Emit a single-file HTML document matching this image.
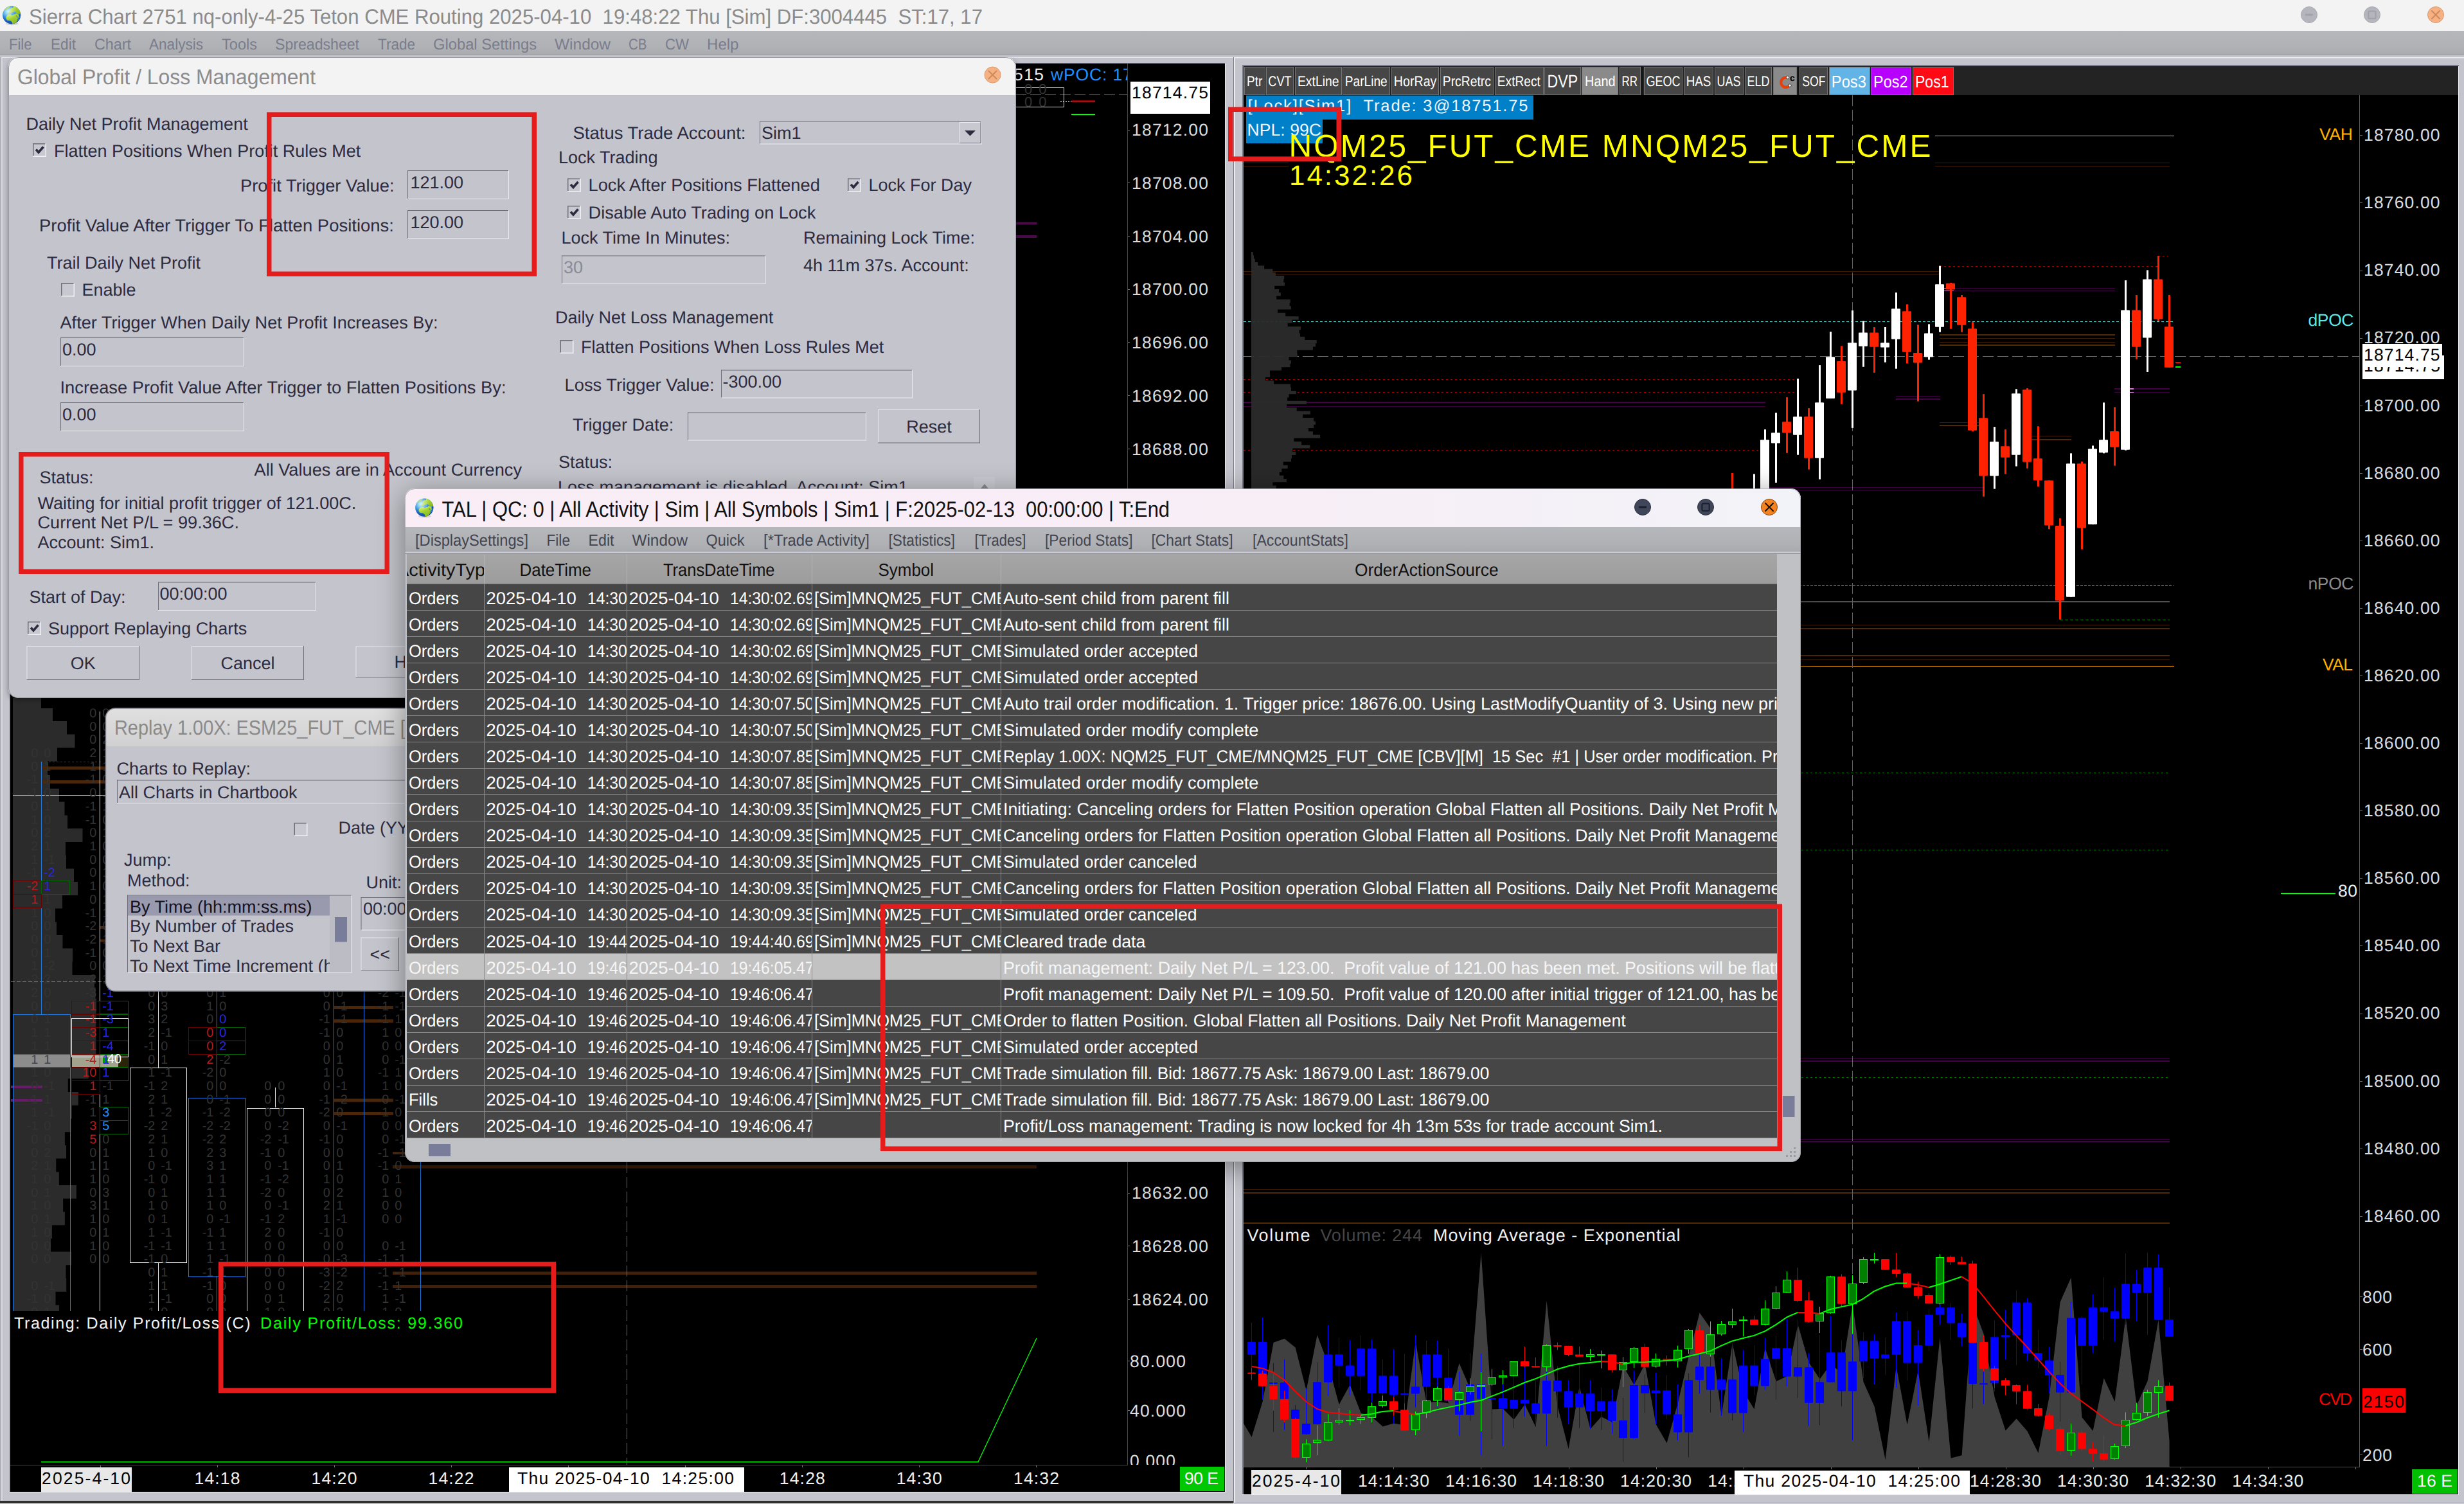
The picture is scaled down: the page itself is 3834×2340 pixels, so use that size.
<!DOCTYPE html>
<html lang="en"><head><meta charset="utf-8"><title>Sierra Chart 2751 nq-only-4-25</title>
<style>
html,body{margin:0;padding:0;background:#c3c4cc;overflow:hidden}
body{width:3834px;height:2340px}
svg#screen{display:block;position:absolute;left:0;top:0}
svg text{font-family:"Liberation Sans",sans-serif;white-space:pre}
</style></head>
<body>
<svg id="screen" role="img" aria-label="Sierra Chart workspace" width="3834" height="2340" viewBox="0 0 3834 2340" text-rendering="geometricPrecision">
<defs><linearGradient id="menug" x1="0" y1="0" x2="0" y2="1"><stop offset="0" stop-color="#b6b7bb"/><stop offset="0.7" stop-color="#b0b1b5"/><stop offset="1" stop-color="#a9aaae"/></linearGradient><radialGradient id="gla" cx="0.3" cy="0.3" r="0.85"><stop offset="0" stop-color="#8fe4fa"/><stop offset="0.3" stop-color="#3da2e6"/><stop offset="0.65" stop-color="#1a5cb8"/><stop offset="1" stop-color="#0c3f98"/></radialGradient><linearGradient id="gda" x1="0.2" y1="0" x2="0.8" y2="1"><stop offset="0" stop-color="#c6ec48"/><stop offset="0.55" stop-color="#9ccc2c"/><stop offset="1" stop-color="#86b41c"/></linearGradient><radialGradient id="gha" cx="0.36" cy="0.3" r="0.42"><stop offset="0" stop-color="#fff" stop-opacity="0.6"/><stop offset="1" stop-color="#fff" stop-opacity="0"/></radialGradient><radialGradient id="glb" cx="0.3" cy="0.3" r="0.85"><stop offset="0" stop-color="#8fe4fa"/><stop offset="0.3" stop-color="#3da2e6"/><stop offset="0.65" stop-color="#1a5cb8"/><stop offset="1" stop-color="#0c3f98"/></radialGradient><linearGradient id="gdb" x1="0.2" y1="0" x2="0.8" y2="1"><stop offset="0" stop-color="#c6ec48"/><stop offset="0.55" stop-color="#9ccc2c"/><stop offset="1" stop-color="#86b41c"/></linearGradient><radialGradient id="ghb" cx="0.36" cy="0.3" r="0.42"><stop offset="0" stop-color="#fff" stop-opacity="0.6"/><stop offset="1" stop-color="#fff" stop-opacity="0"/></radialGradient><linearGradient id="frg" x1="0" y1="0" x2="1" y2="0"><stop offset="0" stop-color="#c6c7cf"/><stop offset="0.7" stop-color="#b4b5c0"/><stop offset="1" stop-color="#8e8f9c"/></linearGradient><linearGradient id="frg2" x1="0" y1="0" x2="0" y2="1"><stop offset="0" stop-color="#c3c4cc"/><stop offset="0.8" stop-color="#c3c4cc"/><stop offset="0.9" stop-color="#9a9ba5"/><stop offset="1" stop-color="#c3c4cc"/></linearGradient><linearGradient id="frg3" x1="0" y1="0" x2="1" y2="0"><stop offset="0" stop-color="#d4d5dc"/><stop offset="1" stop-color="#b8b9c2"/></linearGradient><clipPath id="talclip"><rect x="630" y="760" width="2172" height="1048" rx="15"/></clipPath><filter id="shadow" x="-5%" y="-5%" width="110%" height="112%"><feDropShadow dx="0" dy="3" stdDeviation="4" flood-color="#000" flood-opacity="0.35"/></filter><filter id="shadow2" x="-5%" y="-8%" width="110%" height="118%"><feDropShadow dx="0" dy="8" stdDeviation="22" flood-color="#000" flood-opacity="0.4"/></filter><linearGradient id="rtg" x1="0" y1="0" x2="0" y2="1"><stop offset="0" stop-color="#e0e0e0"/><stop offset="1" stop-color="#d0d0d2"/></linearGradient><linearGradient id="ttg" x1="0" y1="0" x2="1" y2="0"><stop offset="0" stop-color="#faedf6"/><stop offset="0.6" stop-color="#f8eef6"/><stop offset="1" stop-color="#f2f3f8"/></linearGradient><linearGradient id="hdg" x1="0" y1="0" x2="0" y2="1"><stop offset="0" stop-color="#a6a6a6"/><stop offset="1" stop-color="#9c9c9c"/></linearGradient></defs>
<g id="mdi-frames"><rect x="0" y="86" width="3834" height="2254" fill="#c3c4cc"/>
<rect x="0" y="88" width="1919" height="1" fill="#6e6f80"/>
<rect x="1" y="89" width="1" height="2246" fill="#7c7d8a"/>
<rect x="2" y="89" width="1.5" height="2246" fill="#e6e6ea"/>
<rect x="3" y="89" width="1916" height="1" fill="#e6e6ea"/>
<rect x="15" y="98" width="1891" height="1" fill="#6e6f80"/>
<rect x="15" y="98" width="1" height="2223" fill="#6e6f80"/>
<rect x="1906" y="99" width="1" height="2222" fill="#eeeef2"/>
<rect x="15" y="2321" width="1892" height="1" fill="#eeeef2"/>
<rect x="1919" y="88" width="1" height="2250" fill="#7a7b8c"/>
<rect x="0" y="2335" width="1919" height="4" fill="#303030"/>
<rect x="0" y="2339" width="3834" height="1" fill="#e8e8ec"/>
<rect x="1920" y="88" width="1914" height="1" fill="#6e6f80"/>
<rect x="1920" y="89" width="1914" height="1.5" fill="#eeeef2"/>
<rect x="1920" y="89" width="2" height="2249" fill="#ececf0"/>
<rect x="1933" y="101" width="1893" height="2" fill="#7c7d8a"/>
<rect x="1933" y="101" width="2" height="2225" fill="#7c7d8a"/>
<rect x="3825" y="103" width="1" height="2223" fill="#eeeef2"/>
<rect x="1933" y="2325" width="1893" height="1" fill="#eeeef2"/>
<rect x="1920" y="2338" width="1914" height="1" fill="#7a7b8c"/></g>
<g id="chart-left"><rect x="16" y="99" width="1890" height="2222" fill="#000"/>
<polygon points="20,1086 64,1086 64,1102 82,1102 82,1122 104,1122 104,1142.5 116.5,1142.5 116.5,1163.5 89,1163.5 89,1184.5 74,1184.5 74,1206 78,1206 78,1227 92,1227 92,1247.5 100.5,1247.5 100.5,1268.5 105,1268.5 105,1289 128.5,1289 128.5,1310 102,1310 102,1330.5 103,1330.5 103,1351.5 115,1351.5 115,1372 121,1372 121,1393 97,1393 97,1413.5 86,1413.5 86,1434.5 88,1434.5 88,1455 97.5,1455 97.5,1475.5 113,1475.5 113,1496.5 112.5,1496.5 112.5,1517 147,1517 147,1536.5 148.58,1536.5 148.58,1554 149.95,1554 149.95,1574.7 149.4,1574.7 149.4,1595.4 149.4,1595.4 149.4,1616 149.4,1616 149.4,1640.4 109.05,1640.4 109.05,1661 137.68,1661 137.68,1678.3 105.78,1678.3 105.78,1699 121.86,1699 121.86,1719.8 111.78,1719.8 111.78,1740.5 110.41,1740.5 110.41,1761.2 100.87,1761.2 100.87,1781.9 103.05,1781.9 103.05,1802.6 87.24,1802.6 87.24,1823.4 91.88,1823.4 91.88,1844 118.87,1844 118.87,1864.8 98.15,1864.8 98.15,1885.5 100.87,1885.5 100.87,1906.2 80.97,1906.2 80.97,1927 79.06,1927 79.06,1947.6 111.02,1947.6 111.02,1968.3 102.45,1968.3 102.45,1989 103.23,1989 103.23,2009.8 86.48,2009.8 86.48,2030.5 91.94,2030.5 91.94,2040 20,2040" fill="#2b2b2b"/>
<rect x="20" y="1640.5" width="89.5" height="20" fill="#8c8c8c"/>
<rect x="111" y="1640.5" width="73" height="20" fill="#a3a28f"/>
<rect x="184" y="1640.5" width="16" height="20" fill="#2a2408"/>
<rect x="160" y="1645" width="8" height="9" fill="#009a00"/>
<rect x="64" y="1192.5" width="110" height="5" fill="#4a260a"/>
<rect x="64" y="1214" width="110" height="5" fill="#4a260a"/>
<rect x="155" y="1441" width="20" height="4" fill="#4a260a"/>
<rect x="155" y="1461.5" width="20" height="4" fill="#4a260a"/>
<rect x="20" y="1237" width="150" height="1" fill="#e8a020"/>
<line x1="64" y1="1185.5" x2="157" y2="1185.5" stroke="#c00000" stroke-width="1" stroke-dasharray="3 3"/>
<line x1="17" y1="1526.5" x2="175" y2="1526.5" stroke="#a0a0a0" stroke-width="1" stroke-dasharray="6 3"/>
<rect x="17" y="1689" width="49" height="4" fill="#6a1a6a"/>
<rect x="17" y="1710" width="49" height="4" fill="#6a1a6a"/>
<rect x="520" y="1565" width="92" height="5" fill="#4a260a"/>
<rect x="520" y="1586" width="92" height="5" fill="#4a260a"/>
<rect x="520" y="1709.5" width="92" height="5" fill="#4a260a"/>
<rect x="520" y="1730" width="92" height="5" fill="#4a260a"/>
<rect x="611" y="1792" width="30" height="4" fill="#4a260a"/>
<rect x="611" y="1813" width="1002" height="5" fill="#3a1a04"/>
<rect x="611" y="1978.5" width="1002" height="5" fill="#42200a"/>
<rect x="611" y="1999" width="1002" height="5" fill="#42200a"/>
<rect x="1580" y="345.5" width="33.5" height="4" fill="#4a0a4a"/>
<rect x="1580" y="366" width="33.5" height="4" fill="#4a0a4a"/>
<line x1="1580" y1="146.5" x2="1754" y2="146.5" stroke="#7a7a7a" stroke-width="1" stroke-dasharray="17 6"/>
<rect x="1560.5" y="136.5" width="95" height="30" fill="none" stroke="#e0e0e0" stroke-width="1"/>
<line x1="1650" y1="157.5" x2="1668" y2="157.5" stroke="#fff" stroke-width="1" stroke-dasharray="2 2"/>
<rect x="1667" y="156.5" width="37" height="2" fill="#ff0000"/>
<rect x="1667" y="177" width="37" height="2" fill="#00ff00"/>
<text x="1594" y="146" font-size="22" fill="#333333" letter-spacing="2">0 0</text>
<text x="1594" y="166" font-size="22" fill="#333333" letter-spacing="2">0 0</text>
<svg x="1560" y="100" width="194" height="40" viewBox="1560 100 194 40" overflow="hidden">
<text x="1577" y="125" font-size="26.5" fill="#f0f0f0" textLength="47" lengthAdjust="spacing">515</text>
<text x="1635" y="125" font-size="26.5" fill="#1e90ff" textLength="135" lengthAdjust="spacing">wPOC: 17.</text>
</svg>
<rect x="64" y="1185" width="1" height="393" fill="#1e7ae0"/>
<rect x="20.5" y="1578.5" width="89" height="467" fill="none" stroke="#1e7ae0" stroke-width="1"/>
<rect x="155" y="1107" width="1" height="933" fill="#e8e8e8"/>
<rect x="111.5" y="1584.5" width="88" height="60" fill="none" stroke="#f0f0f0" stroke-width="1"/>
<rect x="246" y="1540" width="1" height="121" fill="#e8e8e8"/>
<rect x="202.5" y="1661.5" width="88" height="303" fill="none" stroke="#f0f0f0" stroke-width="1"/>
<rect x="246" y="1964" width="1" height="76" fill="#e8e8e8"/>
<rect x="337" y="1540" width="1" height="167" fill="#1e7ae0"/>
<rect x="293.5" y="1708.5" width="88" height="278" fill="none" stroke="#1e7ae0" stroke-width="1"/>
<rect x="337" y="1985" width="1" height="55" fill="#1e7ae0"/>
<rect x="428" y="1692" width="1" height="31" fill="#e8e8e8"/>
<rect x="384.5" y="1724.5" width="88" height="322" fill="none" stroke="#f0f0f0" stroke-width="1"/>
<rect x="384" y="1964" width="1" height="76" fill="#e8e8e8"/>
<rect x="519" y="1540" width="1" height="500" fill="#1e7ae0"/>
<rect x="566" y="1540" width="1" height="500" fill="#1e7ae0"/>
<rect x="654" y="1540" width="1" height="500" fill="#1e7ae0"/>
<rect x="111.5" y="1557.5" width="44" height="21" fill="none" stroke="#6a0000" stroke-width="1"/>
<rect x="155.5" y="1557.5" width="44" height="21" fill="none" stroke="#006400" stroke-width="1"/>
<rect x="111.5" y="1577.5" width="44" height="21" fill="none" stroke="#6a0000" stroke-width="1"/>
<rect x="155.5" y="1577.5" width="44" height="21" fill="none" stroke="#006400" stroke-width="1"/>
<rect x="111.5" y="1598.5" width="44" height="21" fill="none" stroke="#6a0000" stroke-width="1"/>
<rect x="155.5" y="1598.5" width="44" height="21" fill="none" stroke="#006400" stroke-width="1"/>
<rect x="111.5" y="1619.5" width="44" height="21" fill="none" stroke="#6a0000" stroke-width="1"/>
<rect x="155.5" y="1619.5" width="44" height="21" fill="none" stroke="#006400" stroke-width="1"/>
<rect x="111.5" y="1640.5" width="44" height="21" fill="none" stroke="#6a0000" stroke-width="1"/>
<rect x="155.5" y="1640.5" width="44" height="21" fill="none" stroke="#006400" stroke-width="1"/>
<rect x="111.5" y="1660.5" width="44" height="21" fill="none" stroke="#6a0000" stroke-width="1"/>
<rect x="155.5" y="1660.5" width="44" height="21" fill="none" stroke="#006400" stroke-width="1"/>
<rect x="111.5" y="1681.5" width="44" height="21" fill="none" stroke="#6a0000" stroke-width="1"/>
<rect x="155.5" y="1722.5" width="44" height="21" fill="none" stroke="#006400" stroke-width="1"/>
<rect x="155.5" y="1743.5" width="44" height="21" fill="none" stroke="#006400" stroke-width="1"/>
<rect x="293.5" y="1598.5" width="44" height="21" fill="none" stroke="#6a0000" stroke-width="1"/>
<rect x="337.5" y="1598.5" width="44" height="21" fill="none" stroke="#006400" stroke-width="1"/>
<rect x="293.5" y="1619.5" width="44" height="21" fill="none" stroke="#6a0000" stroke-width="1"/>
<rect x="337.5" y="1619.5" width="44" height="21" fill="none" stroke="#006400" stroke-width="1"/>
<rect x="20.5" y="1370.5" width="44" height="21" fill="none" stroke="#6a0000" stroke-width="1"/>
<rect x="64.5" y="1370.5" width="44" height="21" fill="none" stroke="#006400" stroke-width="1"/>
<rect x="20.5" y="1391.5" width="44" height="21" fill="none" stroke="#6a0000" stroke-width="1"/>
<rect x="111.5" y="1584.5" width="88" height="60" fill="none" stroke="#f0f0f0" stroke-width="1"/>
<text x="150.3" y="1115.78" font-size="19.8" fill="#333333" text-anchor="end">0</text>
<text x="159.2" y="1115.78" font-size="19.8" fill="#333333">0</text>
<text x="150.3" y="1136.5" font-size="19.8" fill="#333333" text-anchor="end">0</text>
<text x="159.2" y="1136.5" font-size="19.8" fill="#333333">0</text>
<text x="150.3" y="1157.22" font-size="19.8" fill="#333333" text-anchor="end">0</text>
<text x="159.2" y="1157.22" font-size="19.8" fill="#333333">2</text>
<text x="59.3" y="1177.94" font-size="19.8" fill="#333333" text-anchor="end">0</text>
<text x="68.2" y="1177.94" font-size="19.8" fill="#333333">0</text>
<text x="150.3" y="1177.94" font-size="19.8" fill="#333333" text-anchor="end">2</text>
<text x="159.2" y="1177.94" font-size="19.8" fill="#333333">1</text>
<text x="59.3" y="1198.66" font-size="19.8" fill="#333333" text-anchor="end">0</text>
<text x="68.2" y="1198.66" font-size="19.8" fill="#333333">1</text>
<text x="150.3" y="1198.66" font-size="19.8" fill="#333333" text-anchor="end">1</text>
<text x="159.2" y="1198.66" font-size="19.8" fill="#333333">1</text>
<text x="59.3" y="1219.38" font-size="19.8" fill="#333333" text-anchor="end">-1</text>
<text x="68.2" y="1219.38" font-size="19.8" fill="#333333">1</text>
<text x="150.3" y="1219.38" font-size="19.8" fill="#333333" text-anchor="end">-1</text>
<text x="159.2" y="1219.38" font-size="19.8" fill="#333333">0</text>
<text x="59.3" y="1240.1" font-size="19.8" fill="#333333" text-anchor="end">-1</text>
<text x="68.2" y="1240.1" font-size="19.8" fill="#333333">0</text>
<text x="150.3" y="1240.1" font-size="19.8" fill="#333333" text-anchor="end">0</text>
<text x="159.2" y="1240.1" font-size="19.8" fill="#333333">1</text>
<text x="59.3" y="1260.82" font-size="19.8" fill="#333333" text-anchor="end">0</text>
<text x="68.2" y="1260.82" font-size="19.8" fill="#333333">1</text>
<text x="150.3" y="1260.82" font-size="19.8" fill="#333333" text-anchor="end">-1</text>
<text x="159.2" y="1260.82" font-size="19.8" fill="#333333">1</text>
<text x="59.3" y="1281.54" font-size="19.8" fill="#333333" text-anchor="end">1</text>
<text x="68.2" y="1281.54" font-size="19.8" fill="#333333">0</text>
<text x="150.3" y="1281.54" font-size="19.8" fill="#333333" text-anchor="end">-1</text>
<text x="159.2" y="1281.54" font-size="19.8" fill="#333333">0</text>
<text x="59.3" y="1302.26" font-size="19.8" fill="#333333" text-anchor="end">0</text>
<text x="68.2" y="1302.26" font-size="19.8" fill="#333333">2</text>
<text x="150.3" y="1302.26" font-size="19.8" fill="#333333" text-anchor="end">0</text>
<text x="159.2" y="1302.26" font-size="19.8" fill="#333333">1</text>
<text x="59.3" y="1322.98" font-size="19.8" fill="#333333" text-anchor="end">2</text>
<text x="68.2" y="1322.98" font-size="19.8" fill="#333333">1</text>
<text x="150.3" y="1322.98" font-size="19.8" fill="#333333" text-anchor="end">1</text>
<text x="159.2" y="1322.98" font-size="19.8" fill="#333333">0</text>
<text x="59.3" y="1343.7" font-size="19.8" fill="#333333" text-anchor="end">1</text>
<text x="68.2" y="1343.7" font-size="19.8" fill="#333333">-1</text>
<text x="150.3" y="1343.7" font-size="19.8" fill="#333333" text-anchor="end">0</text>
<text x="159.2" y="1343.7" font-size="19.8" fill="#333333">0</text>
<text x="59.3" y="1364.42" font-size="19.8" fill="#333333" text-anchor="end">-1</text>
<text x="68.2" y="1364.42" font-size="19.8" fill="#2626e0">-2</text>
<text x="150.3" y="1364.42" font-size="19.8" fill="#333333" text-anchor="end">0</text>
<text x="159.2" y="1364.42" font-size="19.8" fill="#333333">1</text>
<text x="59.3" y="1385.14" font-size="19.8" fill="#b41c1c" text-anchor="end">-2</text>
<text x="68.2" y="1385.14" font-size="19.8" fill="#2626e0">1</text>
<text x="150.3" y="1385.14" font-size="19.8" fill="#333333" text-anchor="end">1</text>
<text x="159.2" y="1385.14" font-size="19.8" fill="#333333">0</text>
<text x="59.3" y="1405.86" font-size="19.8" fill="#b41c1c" text-anchor="end">1</text>
<text x="68.2" y="1405.86" font-size="19.8" fill="#333333">1</text>
<text x="150.3" y="1405.86" font-size="19.8" fill="#333333" text-anchor="end">0</text>
<text x="159.2" y="1405.86" font-size="19.8" fill="#333333">1</text>
<text x="59.3" y="1426.58" font-size="19.8" fill="#333333" text-anchor="end">1</text>
<text x="68.2" y="1426.58" font-size="19.8" fill="#333333">0</text>
<text x="150.3" y="1426.58" font-size="19.8" fill="#333333" text-anchor="end">-1</text>
<text x="159.2" y="1426.58" font-size="19.8" fill="#333333">1</text>
<text x="59.3" y="1447.3" font-size="19.8" fill="#333333" text-anchor="end">0</text>
<text x="68.2" y="1447.3" font-size="19.8" fill="#333333">0</text>
<text x="150.3" y="1447.3" font-size="19.8" fill="#333333" text-anchor="end">-2</text>
<text x="159.2" y="1447.3" font-size="19.8" fill="#333333">0</text>
<text x="59.3" y="1468.02" font-size="19.8" fill="#333333" text-anchor="end">0</text>
<text x="68.2" y="1468.02" font-size="19.8" fill="#333333">0</text>
<text x="150.3" y="1468.02" font-size="19.8" fill="#333333" text-anchor="end">-2</text>
<text x="159.2" y="1468.02" font-size="19.8" fill="#333333">1</text>
<text x="59.3" y="1488.74" font-size="19.8" fill="#333333" text-anchor="end">0</text>
<text x="68.2" y="1488.74" font-size="19.8" fill="#333333">1</text>
<text x="150.3" y="1488.74" font-size="19.8" fill="#333333" text-anchor="end">-1</text>
<text x="159.2" y="1488.74" font-size="19.8" fill="#333333">0</text>
<text x="59.3" y="1509.46" font-size="19.8" fill="#333333" text-anchor="end">1</text>
<text x="68.2" y="1509.46" font-size="19.8" fill="#333333">-2</text>
<text x="150.3" y="1509.46" font-size="19.8" fill="#333333" text-anchor="end">0</text>
<text x="159.2" y="1509.46" font-size="19.8" fill="#333333">0</text>
<text x="59.3" y="1530.18" font-size="19.8" fill="#333333" text-anchor="end">-2</text>
<text x="68.2" y="1530.18" font-size="19.8" fill="#333333">2</text>
<text x="150.3" y="1530.18" font-size="19.8" fill="#333333" text-anchor="end">-2</text>
<text x="159.2" y="1530.18" font-size="19.8" fill="#333333">1</text>
<text x="59.3" y="1550.9" font-size="19.8" fill="#333333" text-anchor="end">2</text>
<text x="68.2" y="1550.9" font-size="19.8" fill="#333333">0</text>
<text x="150.3" y="1550.9" font-size="19.8" fill="#333333" text-anchor="end">-3</text>
<text x="159.2" y="1550.9" font-size="19.8" fill="#2626e0">-1</text>
<text x="241.3" y="1550.9" font-size="19.8" fill="#333333" text-anchor="end">0</text>
<text x="250.2" y="1550.9" font-size="19.8" fill="#333333">0</text>
<text x="332.3" y="1550.9" font-size="19.8" fill="#333333" text-anchor="end">0</text>
<text x="341.2" y="1550.9" font-size="19.8" fill="#333333">1</text>
<text x="513.8" y="1550.9" font-size="19.8" fill="#333333" text-anchor="end">0</text>
<text x="523.2" y="1550.9" font-size="19.8" fill="#333333">0</text>
<text x="605.3" y="1550.9" font-size="19.8" fill="#333333" text-anchor="end">-2</text>
<text x="614.2" y="1550.9" font-size="19.8" fill="#333333">-1</text>
<text x="59.3" y="1571.62" font-size="19.8" fill="#333333" text-anchor="end">0</text>
<text x="68.2" y="1571.62" font-size="19.8" fill="#333333">0</text>
<text x="150.3" y="1571.62" font-size="19.8" fill="#b41c1c" text-anchor="end">-1</text>
<text x="159.2" y="1571.62" font-size="19.8" fill="#2626e0">-1</text>
<text x="241.3" y="1571.62" font-size="19.8" fill="#333333" text-anchor="end">0</text>
<text x="250.2" y="1571.62" font-size="19.8" fill="#333333">3</text>
<text x="332.3" y="1571.62" font-size="19.8" fill="#333333" text-anchor="end">1</text>
<text x="341.2" y="1571.62" font-size="19.8" fill="#333333">0</text>
<text x="513.8" y="1571.62" font-size="19.8" fill="#333333" text-anchor="end">0</text>
<text x="523.2" y="1571.62" font-size="19.8" fill="#333333">-1</text>
<text x="605.3" y="1571.62" font-size="19.8" fill="#333333" text-anchor="end">-1</text>
<text x="614.2" y="1571.62" font-size="19.8" fill="#333333">-1</text>
<text x="59.3" y="1592.34" font-size="19.8" fill="#333333" text-anchor="end">0</text>
<text x="68.2" y="1592.34" font-size="19.8" fill="#333333">1</text>
<text x="150.3" y="1592.34" font-size="19.8" fill="#b41c1c" text-anchor="end">-1</text>
<text x="159.2" y="1592.34" font-size="19.8" fill="#2626e0">-3</text>
<text x="241.3" y="1592.34" font-size="19.8" fill="#333333" text-anchor="end">3</text>
<text x="250.2" y="1592.34" font-size="19.8" fill="#333333">2</text>
<text x="332.3" y="1592.34" font-size="19.8" fill="#333333" text-anchor="end">0</text>
<text x="341.2" y="1592.34" font-size="19.8" fill="#2626e0">0</text>
<text x="513.8" y="1592.34" font-size="19.8" fill="#333333" text-anchor="end">-1</text>
<text x="523.2" y="1592.34" font-size="19.8" fill="#333333">-1</text>
<text x="605.3" y="1592.34" font-size="19.8" fill="#333333" text-anchor="end">-1</text>
<text x="614.2" y="1592.34" font-size="19.8" fill="#333333">1</text>
<text x="59.3" y="1613.06" font-size="19.8" fill="#333333" text-anchor="end">1</text>
<text x="68.2" y="1613.06" font-size="19.8" fill="#333333">1</text>
<text x="150.3" y="1613.06" font-size="19.8" fill="#b41c1c" text-anchor="end">-3</text>
<text x="159.2" y="1613.06" font-size="19.8" fill="#2626e0">1</text>
<text x="241.3" y="1613.06" font-size="19.8" fill="#333333" text-anchor="end">2</text>
<text x="250.2" y="1613.06" font-size="19.8" fill="#333333">-1</text>
<text x="332.3" y="1613.06" font-size="19.8" fill="#b41c1c" text-anchor="end">0</text>
<text x="341.2" y="1613.06" font-size="19.8" fill="#2626e0">0</text>
<text x="513.8" y="1613.06" font-size="19.8" fill="#333333" text-anchor="end">-1</text>
<text x="523.2" y="1613.06" font-size="19.8" fill="#333333">0</text>
<text x="605.3" y="1613.06" font-size="19.8" fill="#333333" text-anchor="end">1</text>
<text x="614.2" y="1613.06" font-size="19.8" fill="#333333">0</text>
<text x="59.3" y="1633.78" font-size="19.8" fill="#333333" text-anchor="end">1</text>
<text x="68.2" y="1633.78" font-size="19.8" fill="#333333">1</text>
<text x="150.3" y="1633.78" font-size="19.8" fill="#b41c1c" text-anchor="end">1</text>
<text x="159.2" y="1633.78" font-size="19.8" fill="#2626e0">-4</text>
<text x="241.3" y="1633.78" font-size="19.8" fill="#333333" text-anchor="end">-1</text>
<text x="250.2" y="1633.78" font-size="19.8" fill="#333333">0</text>
<text x="332.3" y="1633.78" font-size="19.8" fill="#b41c1c" text-anchor="end">0</text>
<text x="341.2" y="1633.78" font-size="19.8" fill="#2626e0">2</text>
<text x="513.8" y="1633.78" font-size="19.8" fill="#333333" text-anchor="end">0</text>
<text x="523.2" y="1633.78" font-size="19.8" fill="#333333">0</text>
<text x="605.3" y="1633.78" font-size="19.8" fill="#333333" text-anchor="end">0</text>
<text x="614.2" y="1633.78" font-size="19.8" fill="#333333">0</text>
<text x="59.3" y="1654.5" font-size="19.8" fill="#444" text-anchor="end">1</text>
<text x="68.2" y="1654.5" font-size="19.8" fill="#444">1</text>
<text x="150.3" y="1654.5" font-size="19.8" fill="#b41c1c" text-anchor="end">-4</text>
<text x="159.2" y="1654.5" font-size="19.8" fill="#2626e0">1</text>
<text x="241.3" y="1654.5" font-size="19.8" fill="#333333" text-anchor="end">0</text>
<text x="250.2" y="1654.5" font-size="19.8" fill="#333333">1</text>
<text x="332.3" y="1654.5" font-size="19.8" fill="#b41c1c" text-anchor="end">2</text>
<text x="341.2" y="1654.5" font-size="19.8" fill="#333333">-2</text>
<text x="513.8" y="1654.5" font-size="19.8" fill="#333333" text-anchor="end">0</text>
<text x="523.2" y="1654.5" font-size="19.8" fill="#333333">1</text>
<text x="605.3" y="1654.5" font-size="19.8" fill="#333333" text-anchor="end">0</text>
<text x="614.2" y="1654.5" font-size="19.8" fill="#333333">-1</text>
<text x="59.3" y="1675.22" font-size="19.8" fill="#333333" text-anchor="end">1</text>
<text x="68.2" y="1675.22" font-size="19.8" fill="#333333">0</text>
<text x="150.3" y="1675.22" font-size="19.8" fill="#b41c1c" text-anchor="end">10</text>
<text x="159.2" y="1675.22" font-size="19.8" fill="#2626e0">1</text>
<text x="241.3" y="1675.22" font-size="19.8" fill="#333333" text-anchor="end">1</text>
<text x="250.2" y="1675.22" font-size="19.8" fill="#333333">-1</text>
<text x="332.3" y="1675.22" font-size="19.8" fill="#333333" text-anchor="end">-2</text>
<text x="341.2" y="1675.22" font-size="19.8" fill="#333333">0</text>
<text x="513.8" y="1675.22" font-size="19.8" fill="#333333" text-anchor="end">1</text>
<text x="523.2" y="1675.22" font-size="19.8" fill="#333333">0</text>
<text x="605.3" y="1675.22" font-size="19.8" fill="#333333" text-anchor="end">-1</text>
<text x="614.2" y="1675.22" font-size="19.8" fill="#333333">1</text>
<text x="59.3" y="1695.94" font-size="19.8" fill="#333333" text-anchor="end">0</text>
<text x="68.2" y="1695.94" font-size="19.8" fill="#333333">-1</text>
<text x="150.3" y="1695.94" font-size="19.8" fill="#b41c1c" text-anchor="end">1</text>
<text x="159.2" y="1695.94" font-size="19.8" fill="#333333">-1</text>
<text x="241.3" y="1695.94" font-size="19.8" fill="#333333" text-anchor="end">-1</text>
<text x="250.2" y="1695.94" font-size="19.8" fill="#333333">2</text>
<text x="332.3" y="1695.94" font-size="19.8" fill="#333333" text-anchor="end">0</text>
<text x="341.2" y="1695.94" font-size="19.8" fill="#333333">0</text>
<text x="422.3" y="1695.94" font-size="19.8" fill="#333333" text-anchor="end">0</text>
<text x="432.2" y="1695.94" font-size="19.8" fill="#333333">0</text>
<text x="513.8" y="1695.94" font-size="19.8" fill="#333333" text-anchor="end">0</text>
<text x="523.2" y="1695.94" font-size="19.8" fill="#333333">-1</text>
<text x="605.3" y="1695.94" font-size="19.8" fill="#333333" text-anchor="end">1</text>
<text x="614.2" y="1695.94" font-size="19.8" fill="#333333">0</text>
<text x="59.3" y="1716.66" font-size="19.8" fill="#333333" text-anchor="end">-1</text>
<text x="68.2" y="1716.66" font-size="19.8" fill="#333333">1</text>
<text x="150.3" y="1716.66" font-size="19.8" fill="#333333" text-anchor="end">-1</text>
<text x="159.2" y="1716.66" font-size="19.8" fill="#333333">1</text>
<text x="241.3" y="1716.66" font-size="19.8" fill="#333333" text-anchor="end">2</text>
<text x="250.2" y="1716.66" font-size="19.8" fill="#333333">1</text>
<text x="332.3" y="1716.66" font-size="19.8" fill="#333333" text-anchor="end">0</text>
<text x="341.2" y="1716.66" font-size="19.8" fill="#333333">-1</text>
<text x="422.3" y="1716.66" font-size="19.8" fill="#333333" text-anchor="end">0</text>
<text x="432.2" y="1716.66" font-size="19.8" fill="#333333">0</text>
<text x="513.8" y="1716.66" font-size="19.8" fill="#333333" text-anchor="end">-1</text>
<text x="523.2" y="1716.66" font-size="19.8" fill="#333333">-2</text>
<text x="605.3" y="1716.66" font-size="19.8" fill="#333333" text-anchor="end">0</text>
<text x="614.2" y="1716.66" font-size="19.8" fill="#333333">-1</text>
<text x="59.3" y="1737.38" font-size="19.8" fill="#333333" text-anchor="end">1</text>
<text x="68.2" y="1737.38" font-size="19.8" fill="#333333">-1</text>
<text x="150.3" y="1737.38" font-size="19.8" fill="#333333" text-anchor="end">1</text>
<text x="159.2" y="1737.38" font-size="19.8" fill="#1e90ff">3</text>
<text x="241.3" y="1737.38" font-size="19.8" fill="#333333" text-anchor="end">1</text>
<text x="250.2" y="1737.38" font-size="19.8" fill="#333333">-2</text>
<text x="332.3" y="1737.38" font-size="19.8" fill="#333333" text-anchor="end">-1</text>
<text x="341.2" y="1737.38" font-size="19.8" fill="#333333">-2</text>
<text x="422.3" y="1737.38" font-size="19.8" fill="#333333" text-anchor="end">0</text>
<text x="432.2" y="1737.38" font-size="19.8" fill="#333333">0</text>
<text x="513.8" y="1737.38" font-size="19.8" fill="#333333" text-anchor="end">-2</text>
<text x="523.2" y="1737.38" font-size="19.8" fill="#333333">0</text>
<text x="605.3" y="1737.38" font-size="19.8" fill="#333333" text-anchor="end">-1</text>
<text x="614.2" y="1737.38" font-size="19.8" fill="#333333">0</text>
<text x="59.3" y="1758.1" font-size="19.8" fill="#333333" text-anchor="end">-1</text>
<text x="68.2" y="1758.1" font-size="19.8" fill="#333333">0</text>
<text x="150.3" y="1758.1" font-size="19.8" fill="#b41c1c" text-anchor="end">3</text>
<text x="159.2" y="1758.1" font-size="19.8" fill="#1e90ff">5</text>
<text x="241.3" y="1758.1" font-size="19.8" fill="#333333" text-anchor="end">-2</text>
<text x="250.2" y="1758.1" font-size="19.8" fill="#333333">2</text>
<text x="332.3" y="1758.1" font-size="19.8" fill="#333333" text-anchor="end">-2</text>
<text x="341.2" y="1758.1" font-size="19.8" fill="#333333">-2</text>
<text x="422.3" y="1758.1" font-size="19.8" fill="#333333" text-anchor="end">0</text>
<text x="432.2" y="1758.1" font-size="19.8" fill="#333333">-2</text>
<text x="513.8" y="1758.1" font-size="19.8" fill="#333333" text-anchor="end">0</text>
<text x="523.2" y="1758.1" font-size="19.8" fill="#333333">-1</text>
<text x="605.3" y="1758.1" font-size="19.8" fill="#333333" text-anchor="end">0</text>
<text x="614.2" y="1758.1" font-size="19.8" fill="#333333">0</text>
<text x="59.3" y="1778.82" font-size="19.8" fill="#333333" text-anchor="end">0</text>
<text x="68.2" y="1778.82" font-size="19.8" fill="#333333">0</text>
<text x="150.3" y="1778.82" font-size="19.8" fill="#b41c1c" text-anchor="end">5</text>
<text x="159.2" y="1778.82" font-size="19.8" fill="#333333">0</text>
<text x="241.3" y="1778.82" font-size="19.8" fill="#333333" text-anchor="end">2</text>
<text x="250.2" y="1778.82" font-size="19.8" fill="#333333">1</text>
<text x="332.3" y="1778.82" font-size="19.8" fill="#333333" text-anchor="end">-2</text>
<text x="341.2" y="1778.82" font-size="19.8" fill="#333333">2</text>
<text x="422.3" y="1778.82" font-size="19.8" fill="#333333" text-anchor="end">-2</text>
<text x="432.2" y="1778.82" font-size="19.8" fill="#333333">-1</text>
<text x="513.8" y="1778.82" font-size="19.8" fill="#333333" text-anchor="end">-1</text>
<text x="523.2" y="1778.82" font-size="19.8" fill="#333333">0</text>
<text x="605.3" y="1778.82" font-size="19.8" fill="#333333" text-anchor="end">0</text>
<text x="614.2" y="1778.82" font-size="19.8" fill="#333333">-1</text>
<text x="59.3" y="1799.54" font-size="19.8" fill="#333333" text-anchor="end">0</text>
<text x="68.2" y="1799.54" font-size="19.8" fill="#333333">2</text>
<text x="150.3" y="1799.54" font-size="19.8" fill="#333333" text-anchor="end">0</text>
<text x="159.2" y="1799.54" font-size="19.8" fill="#333333">1</text>
<text x="241.3" y="1799.54" font-size="19.8" fill="#333333" text-anchor="end">1</text>
<text x="250.2" y="1799.54" font-size="19.8" fill="#333333">0</text>
<text x="332.3" y="1799.54" font-size="19.8" fill="#333333" text-anchor="end">2</text>
<text x="341.2" y="1799.54" font-size="19.8" fill="#333333">3</text>
<text x="422.3" y="1799.54" font-size="19.8" fill="#333333" text-anchor="end">-1</text>
<text x="432.2" y="1799.54" font-size="19.8" fill="#333333">0</text>
<text x="513.8" y="1799.54" font-size="19.8" fill="#333333" text-anchor="end">0</text>
<text x="523.2" y="1799.54" font-size="19.8" fill="#333333">0</text>
<text x="605.3" y="1799.54" font-size="19.8" fill="#333333" text-anchor="end">-1</text>
<text x="614.2" y="1799.54" font-size="19.8" fill="#333333">-1</text>
<text x="59.3" y="1820.26" font-size="19.8" fill="#333333" text-anchor="end">2</text>
<text x="68.2" y="1820.26" font-size="19.8" fill="#333333">1</text>
<text x="150.3" y="1820.26" font-size="19.8" fill="#333333" text-anchor="end">1</text>
<text x="159.2" y="1820.26" font-size="19.8" fill="#333333">1</text>
<text x="241.3" y="1820.26" font-size="19.8" fill="#333333" text-anchor="end">0</text>
<text x="250.2" y="1820.26" font-size="19.8" fill="#333333">-1</text>
<text x="332.3" y="1820.26" font-size="19.8" fill="#333333" text-anchor="end">3</text>
<text x="341.2" y="1820.26" font-size="19.8" fill="#333333">1</text>
<text x="422.3" y="1820.26" font-size="19.8" fill="#333333" text-anchor="end">0</text>
<text x="432.2" y="1820.26" font-size="19.8" fill="#333333">-1</text>
<text x="513.8" y="1820.26" font-size="19.8" fill="#333333" text-anchor="end">0</text>
<text x="523.2" y="1820.26" font-size="19.8" fill="#333333">1</text>
<text x="605.3" y="1820.26" font-size="19.8" fill="#333333" text-anchor="end">-1</text>
<text x="614.2" y="1820.26" font-size="19.8" fill="#333333">0</text>
<text x="59.3" y="1840.98" font-size="19.8" fill="#333333" text-anchor="end">1</text>
<text x="68.2" y="1840.98" font-size="19.8" fill="#333333">0</text>
<text x="150.3" y="1840.98" font-size="19.8" fill="#333333" text-anchor="end">1</text>
<text x="159.2" y="1840.98" font-size="19.8" fill="#333333">0</text>
<text x="241.3" y="1840.98" font-size="19.8" fill="#333333" text-anchor="end">-1</text>
<text x="250.2" y="1840.98" font-size="19.8" fill="#333333">0</text>
<text x="332.3" y="1840.98" font-size="19.8" fill="#333333" text-anchor="end">1</text>
<text x="341.2" y="1840.98" font-size="19.8" fill="#333333">1</text>
<text x="422.3" y="1840.98" font-size="19.8" fill="#333333" text-anchor="end">-1</text>
<text x="432.2" y="1840.98" font-size="19.8" fill="#333333">-2</text>
<text x="513.8" y="1840.98" font-size="19.8" fill="#333333" text-anchor="end">1</text>
<text x="523.2" y="1840.98" font-size="19.8" fill="#333333">0</text>
<text x="605.3" y="1840.98" font-size="19.8" fill="#333333" text-anchor="end">0</text>
<text x="614.2" y="1840.98" font-size="19.8" fill="#333333">1</text>
<text x="59.3" y="1861.7" font-size="19.8" fill="#333333" text-anchor="end">0</text>
<text x="68.2" y="1861.7" font-size="19.8" fill="#333333">1</text>
<text x="150.3" y="1861.7" font-size="19.8" fill="#333333" text-anchor="end">0</text>
<text x="159.2" y="1861.7" font-size="19.8" fill="#333333">3</text>
<text x="241.3" y="1861.7" font-size="19.8" fill="#333333" text-anchor="end">0</text>
<text x="250.2" y="1861.7" font-size="19.8" fill="#333333">1</text>
<text x="332.3" y="1861.7" font-size="19.8" fill="#333333" text-anchor="end">1</text>
<text x="341.2" y="1861.7" font-size="19.8" fill="#333333">1</text>
<text x="422.3" y="1861.7" font-size="19.8" fill="#333333" text-anchor="end">-2</text>
<text x="432.2" y="1861.7" font-size="19.8" fill="#333333">0</text>
<text x="513.8" y="1861.7" font-size="19.8" fill="#333333" text-anchor="end">0</text>
<text x="523.2" y="1861.7" font-size="19.8" fill="#333333">2</text>
<text x="605.3" y="1861.7" font-size="19.8" fill="#333333" text-anchor="end">1</text>
<text x="614.2" y="1861.7" font-size="19.8" fill="#333333">0</text>
<text x="59.3" y="1882.42" font-size="19.8" fill="#333333" text-anchor="end">1</text>
<text x="68.2" y="1882.42" font-size="19.8" fill="#333333">0</text>
<text x="150.3" y="1882.42" font-size="19.8" fill="#333333" text-anchor="end">3</text>
<text x="159.2" y="1882.42" font-size="19.8" fill="#333333">1</text>
<text x="241.3" y="1882.42" font-size="19.8" fill="#333333" text-anchor="end">1</text>
<text x="250.2" y="1882.42" font-size="19.8" fill="#333333">0</text>
<text x="332.3" y="1882.42" font-size="19.8" fill="#333333" text-anchor="end">1</text>
<text x="341.2" y="1882.42" font-size="19.8" fill="#333333">0</text>
<text x="422.3" y="1882.42" font-size="19.8" fill="#333333" text-anchor="end">0</text>
<text x="432.2" y="1882.42" font-size="19.8" fill="#333333">-1</text>
<text x="513.8" y="1882.42" font-size="19.8" fill="#333333" text-anchor="end">2</text>
<text x="523.2" y="1882.42" font-size="19.8" fill="#333333">1</text>
<text x="605.3" y="1882.42" font-size="19.8" fill="#333333" text-anchor="end">0</text>
<text x="614.2" y="1882.42" font-size="19.8" fill="#333333">0</text>
<text x="59.3" y="1903.14" font-size="19.8" fill="#333333" text-anchor="end">0</text>
<text x="68.2" y="1903.14" font-size="19.8" fill="#333333">1</text>
<text x="150.3" y="1903.14" font-size="19.8" fill="#333333" text-anchor="end">1</text>
<text x="159.2" y="1903.14" font-size="19.8" fill="#333333">0</text>
<text x="241.3" y="1903.14" font-size="19.8" fill="#333333" text-anchor="end">0</text>
<text x="250.2" y="1903.14" font-size="19.8" fill="#333333">1</text>
<text x="332.3" y="1903.14" font-size="19.8" fill="#333333" text-anchor="end">0</text>
<text x="341.2" y="1903.14" font-size="19.8" fill="#333333">-1</text>
<text x="422.3" y="1903.14" font-size="19.8" fill="#333333" text-anchor="end">-1</text>
<text x="432.2" y="1903.14" font-size="19.8" fill="#333333">2</text>
<text x="513.8" y="1903.14" font-size="19.8" fill="#333333" text-anchor="end">1</text>
<text x="523.2" y="1903.14" font-size="19.8" fill="#333333">-1</text>
<text x="605.3" y="1903.14" font-size="19.8" fill="#333333" text-anchor="end">0</text>
<text x="614.2" y="1903.14" font-size="19.8" fill="#333333">0</text>
<text x="59.3" y="1923.86" font-size="19.8" fill="#333333" text-anchor="end">1</text>
<text x="68.2" y="1923.86" font-size="19.8" fill="#333333">0</text>
<text x="150.3" y="1923.86" font-size="19.8" fill="#333333" text-anchor="end">0</text>
<text x="159.2" y="1923.86" font-size="19.8" fill="#333333">1</text>
<text x="241.3" y="1923.86" font-size="19.8" fill="#333333" text-anchor="end">1</text>
<text x="250.2" y="1923.86" font-size="19.8" fill="#333333">-1</text>
<text x="332.3" y="1923.86" font-size="19.8" fill="#333333" text-anchor="end">-1</text>
<text x="341.2" y="1923.86" font-size="19.8" fill="#333333">1</text>
<text x="422.3" y="1923.86" font-size="19.8" fill="#333333" text-anchor="end">2</text>
<text x="432.2" y="1923.86" font-size="19.8" fill="#333333">0</text>
<text x="513.8" y="1923.86" font-size="19.8" fill="#333333" text-anchor="end">-1</text>
<text x="523.2" y="1923.86" font-size="19.8" fill="#333333">0</text>
<text x="59.3" y="1944.58" font-size="19.8" fill="#333333" text-anchor="end">0</text>
<text x="68.2" y="1944.58" font-size="19.8" fill="#333333">0</text>
<text x="150.3" y="1944.58" font-size="19.8" fill="#333333" text-anchor="end">1</text>
<text x="159.2" y="1944.58" font-size="19.8" fill="#333333">0</text>
<text x="241.3" y="1944.58" font-size="19.8" fill="#333333" text-anchor="end">-1</text>
<text x="250.2" y="1944.58" font-size="19.8" fill="#333333">-1</text>
<text x="332.3" y="1944.58" font-size="19.8" fill="#333333" text-anchor="end">1</text>
<text x="341.2" y="1944.58" font-size="19.8" fill="#333333">1</text>
<text x="422.3" y="1944.58" font-size="19.8" fill="#333333" text-anchor="end">0</text>
<text x="432.2" y="1944.58" font-size="19.8" fill="#333333">0</text>
<text x="513.8" y="1944.58" font-size="19.8" fill="#333333" text-anchor="end">0</text>
<text x="523.2" y="1944.58" font-size="19.8" fill="#333333">0</text>
<text x="605.3" y="1944.58" font-size="19.8" fill="#333333" text-anchor="end">0</text>
<text x="614.2" y="1944.58" font-size="19.8" fill="#333333">-1</text>
<text x="59.3" y="1965.3" font-size="19.8" fill="#333333" text-anchor="end">0</text>
<text x="68.2" y="1965.3" font-size="19.8" fill="#333333">0</text>
<text x="150.3" y="1965.3" font-size="19.8" fill="#333333" text-anchor="end">0</text>
<text x="159.2" y="1965.3" font-size="19.8" fill="#333333">0</text>
<text x="241.3" y="1965.3" font-size="19.8" fill="#333333" text-anchor="end">-1</text>
<text x="250.2" y="1965.3" font-size="19.8" fill="#333333">0</text>
<text x="332.3" y="1965.3" font-size="19.8" fill="#333333" text-anchor="end">1</text>
<text x="341.2" y="1965.3" font-size="19.8" fill="#333333">-1</text>
<text x="422.3" y="1965.3" font-size="19.8" fill="#333333" text-anchor="end">0</text>
<text x="432.2" y="1965.3" font-size="19.8" fill="#333333">0</text>
<text x="513.8" y="1965.3" font-size="19.8" fill="#333333" text-anchor="end">0</text>
<text x="523.2" y="1965.3" font-size="19.8" fill="#333333">-3</text>
<text x="605.3" y="1965.3" font-size="19.8" fill="#333333" text-anchor="end">-1</text>
<text x="614.2" y="1965.3" font-size="19.8" fill="#333333">-1</text>
<text x="241.3" y="1986.02" font-size="19.8" fill="#333333" text-anchor="end">0</text>
<text x="250.2" y="1986.02" font-size="19.8" fill="#333333">1</text>
<text x="332.3" y="1986.02" font-size="19.8" fill="#333333" text-anchor="end">-1</text>
<text x="341.2" y="1986.02" font-size="19.8" fill="#333333">1</text>
<text x="422.3" y="1986.02" font-size="19.8" fill="#333333" text-anchor="end">0</text>
<text x="432.2" y="1986.02" font-size="19.8" fill="#333333">0</text>
<text x="513.8" y="1986.02" font-size="19.8" fill="#333333" text-anchor="end">-3</text>
<text x="523.2" y="1986.02" font-size="19.8" fill="#333333">-2</text>
<text x="605.3" y="1986.02" font-size="19.8" fill="#333333" text-anchor="end">-1</text>
<text x="614.2" y="1986.02" font-size="19.8" fill="#333333">-1</text>
<text x="59.3" y="2006.74" font-size="19.8" fill="#333333" text-anchor="end">0</text>
<text x="68.2" y="2006.74" font-size="19.8" fill="#333333">-1</text>
<text x="241.3" y="2006.74" font-size="19.8" fill="#333333" text-anchor="end">1</text>
<text x="250.2" y="2006.74" font-size="19.8" fill="#333333">1</text>
<text x="332.3" y="2006.74" font-size="19.8" fill="#333333" text-anchor="end">-1</text>
<text x="341.2" y="2006.74" font-size="19.8" fill="#333333">0</text>
<text x="422.3" y="2006.74" font-size="19.8" fill="#333333" text-anchor="end">0</text>
<text x="432.2" y="2006.74" font-size="19.8" fill="#333333">0</text>
<text x="513.8" y="2006.74" font-size="19.8" fill="#333333" text-anchor="end">-2</text>
<text x="523.2" y="2006.74" font-size="19.8" fill="#333333">2</text>
<text x="605.3" y="2006.74" font-size="19.8" fill="#333333" text-anchor="end">-1</text>
<text x="614.2" y="2006.74" font-size="19.8" fill="#333333">1</text>
<text x="59.3" y="2027.46" font-size="19.8" fill="#333333" text-anchor="end">-1</text>
<text x="68.2" y="2027.46" font-size="19.8" fill="#333333">0</text>
<text x="241.3" y="2027.46" font-size="19.8" fill="#333333" text-anchor="end">1</text>
<text x="250.2" y="2027.46" font-size="19.8" fill="#333333">-1</text>
<text x="332.3" y="2027.46" font-size="19.8" fill="#333333" text-anchor="end">0</text>
<text x="341.2" y="2027.46" font-size="19.8" fill="#333333">0</text>
<text x="422.3" y="2027.46" font-size="19.8" fill="#333333" text-anchor="end">0</text>
<text x="432.2" y="2027.46" font-size="19.8" fill="#333333">1</text>
<text x="513.8" y="2027.46" font-size="19.8" fill="#333333" text-anchor="end">2</text>
<text x="523.2" y="2027.46" font-size="19.8" fill="#333333">0</text>
<text x="605.3" y="2027.46" font-size="19.8" fill="#333333" text-anchor="end">1</text>
<text x="614.2" y="2027.46" font-size="19.8" fill="#333333">-1</text>
<text x="59.3" y="2048.18" font-size="19.8" fill="#333333" text-anchor="end">0</text>
<text x="68.2" y="2048.18" font-size="19.8" fill="#333333">1</text>
<text x="241.3" y="2048.18" font-size="19.8" fill="#333333" text-anchor="end">1</text>
<text x="250.2" y="2048.18" font-size="19.8" fill="#333333">0</text>
<text x="332.3" y="2048.18" font-size="19.8" fill="#333333" text-anchor="end">0</text>
<text x="341.2" y="2048.18" font-size="19.8" fill="#333333">0</text>
<text x="422.3" y="2048.18" font-size="19.8" fill="#333333" text-anchor="end">1</text>
<text x="432.2" y="2048.18" font-size="19.8" fill="#333333">0</text>
<text x="513.8" y="2048.18" font-size="19.8" fill="#333333" text-anchor="end">0</text>
<text x="523.2" y="2048.18" font-size="19.8" fill="#333333">3</text>
<text x="605.3" y="2048.18" font-size="19.8" fill="#333333" text-anchor="end">1</text>
<text x="614.2" y="2048.18" font-size="19.8" fill="#333333">0</text>
<text x="167" y="1654" font-size="20" fill="#fff" textLength="22" lengthAdjust="spacingAndGlyphs">40</text>
<rect x="16" y="2040" width="1738" height="240" fill="#000"/>
<text x="22" y="2066.5" font-size="25" fill="#f4f4f4" textLength="367.5" lengthAdjust="spacing">Trading: Daily Profit/Loss (C)</text>
<text x="405" y="2066.5" font-size="25" fill="#00ff00" textLength="315" lengthAdjust="spacing">Daily Profit/Loss: 99.360</text>
<polyline points="64,2274.5 1522,2274.5 1613,2082" fill="none" stroke="#00ff00" stroke-width="1.3"/>
<line x1="975.5" y1="1808" x2="975.5" y2="2280" stroke="#6e6e6e" stroke-width="1" stroke-dasharray="17 6"/>
<rect x="1754" y="99" width="1" height="2181" fill="#484848"/>
<rect x="1759" y="127" width="124" height="50" fill="#fff"/>
<text x="1761" y="153" font-size="26.5" fill="#000" textLength="119" lengthAdjust="spacing">18714.75</text>
<rect x="1755" y="202" width="3" height="1" fill="#707070"/>
<text x="1761" y="211.3" font-size="26.5" fill="#dcdcdc" textLength="119" lengthAdjust="spacing">18712.00</text>
<rect x="1755" y="284" width="3" height="1" fill="#707070"/>
<text x="1761" y="294" font-size="26.5" fill="#dcdcdc" textLength="119" lengthAdjust="spacing">18708.00</text>
<rect x="1755" y="367" width="3" height="1" fill="#707070"/>
<text x="1761" y="376.7" font-size="26.5" fill="#dcdcdc" textLength="119" lengthAdjust="spacing">18704.00</text>
<rect x="1755" y="450" width="3" height="1" fill="#707070"/>
<text x="1761" y="459.4" font-size="26.5" fill="#dcdcdc" textLength="119" lengthAdjust="spacing">18700.00</text>
<rect x="1755" y="532" width="3" height="1" fill="#707070"/>
<text x="1761" y="542.1" font-size="26.5" fill="#dcdcdc" textLength="119" lengthAdjust="spacing">18696.00</text>
<rect x="1755" y="615" width="3" height="1" fill="#707070"/>
<text x="1761" y="624.8" font-size="26.5" fill="#dcdcdc" textLength="119" lengthAdjust="spacing">18692.00</text>
<rect x="1755" y="698" width="3" height="1" fill="#707070"/>
<text x="1761" y="707.5" font-size="26.5" fill="#dcdcdc" textLength="119" lengthAdjust="spacing">18688.00</text>
<rect x="1755" y="780" width="3" height="1" fill="#707070"/>
<text x="1761" y="790.2" font-size="26.5" fill="#dcdcdc" textLength="119" lengthAdjust="spacing">18684.00</text>
<rect x="1755" y="863" width="3" height="1" fill="#707070"/>
<text x="1761" y="872.9" font-size="26.5" fill="#dcdcdc" textLength="119" lengthAdjust="spacing">18680.00</text>
<rect x="1755" y="946" width="3" height="1" fill="#707070"/>
<text x="1761" y="955.6" font-size="26.5" fill="#dcdcdc" textLength="119" lengthAdjust="spacing">18676.00</text>
<rect x="1755" y="1028" width="3" height="1" fill="#707070"/>
<text x="1761" y="1038.3" font-size="26.5" fill="#dcdcdc" textLength="119" lengthAdjust="spacing">18672.00</text>
<rect x="1755" y="1111" width="3" height="1" fill="#707070"/>
<text x="1761" y="1121" font-size="26.5" fill="#dcdcdc" textLength="119" lengthAdjust="spacing">18668.00</text>
<rect x="1755" y="1194" width="3" height="1" fill="#707070"/>
<text x="1761" y="1203.7" font-size="26.5" fill="#dcdcdc" textLength="119" lengthAdjust="spacing">18664.00</text>
<rect x="1755" y="1277" width="3" height="1" fill="#707070"/>
<text x="1761" y="1286.4" font-size="26.5" fill="#dcdcdc" textLength="119" lengthAdjust="spacing">18660.00</text>
<rect x="1755" y="1359" width="3" height="1" fill="#707070"/>
<text x="1761" y="1369.1" font-size="26.5" fill="#dcdcdc" textLength="119" lengthAdjust="spacing">18656.00</text>
<rect x="1755" y="1442" width="3" height="1" fill="#707070"/>
<text x="1761" y="1451.8" font-size="26.5" fill="#dcdcdc" textLength="119" lengthAdjust="spacing">18652.00</text>
<rect x="1755" y="1525" width="3" height="1" fill="#707070"/>
<text x="1761" y="1534.5" font-size="26.5" fill="#dcdcdc" textLength="119" lengthAdjust="spacing">18648.00</text>
<rect x="1755" y="1607" width="3" height="1" fill="#707070"/>
<text x="1761" y="1617.2" font-size="26.5" fill="#dcdcdc" textLength="119" lengthAdjust="spacing">18644.00</text>
<rect x="1755" y="1690" width="3" height="1" fill="#707070"/>
<text x="1761" y="1699.9" font-size="26.5" fill="#dcdcdc" textLength="119" lengthAdjust="spacing">18640.00</text>
<rect x="1755" y="1773" width="3" height="1" fill="#707070"/>
<text x="1761" y="1782.6" font-size="26.5" fill="#dcdcdc" textLength="119" lengthAdjust="spacing">18636.00</text>
<rect x="1755" y="1856" width="3" height="1" fill="#707070"/>
<text x="1761" y="1865.3" font-size="26.5" fill="#dcdcdc" textLength="119" lengthAdjust="spacing">18632.00</text>
<rect x="1755" y="1938" width="3" height="1" fill="#707070"/>
<text x="1761" y="1948" font-size="26.5" fill="#dcdcdc" textLength="119" lengthAdjust="spacing">18628.00</text>
<rect x="1755" y="2021" width="3" height="1" fill="#707070"/>
<text x="1761" y="2030.7" font-size="26.5" fill="#dcdcdc" textLength="119" lengthAdjust="spacing">18624.00</text>
<rect x="1754" y="2040" width="152" height="241" fill="#000"/>
<rect x="1754" y="2040" width="1" height="241" fill="#484848"/>
<text x="1758" y="2127" font-size="26.5" fill="#dcdcdc" textLength="87" lengthAdjust="spacing">80.000</text>
<rect x="1755" y="2117" width="3" height="1" fill="#707070"/>
<text x="1758" y="2204.2" font-size="26.5" fill="#dcdcdc" textLength="87" lengthAdjust="spacing">40.000</text>
<rect x="1755" y="2194" width="3" height="1" fill="#707070"/>
<svg x="1754" y="2250" width="152" height="29" viewBox="1754 2250 152 29" overflow="hidden">
<text x="1758" y="2281.5" font-size="26.5" fill="#dcdcdc" textLength="71" lengthAdjust="spacing">0.000</text>
</svg>
<rect x="16" y="2279" width="1890" height="42" fill="#000"/>
<rect x="16" y="2279" width="1739" height="1" fill="#484848"/>
<rect x="64" y="2283" width="141" height="38" fill="#e8e8e8"/>
<text x="65" y="2309" font-size="26.5" fill="#000" textLength="138" lengthAdjust="spacing">2025-4-10</text>
<text x="302.5" y="2309" font-size="26.5" fill="#f0f0f0" textLength="71" lengthAdjust="spacing">14:18</text>
<text x="484.5" y="2309" font-size="26.5" fill="#f0f0f0" textLength="71" lengthAdjust="spacing">14:20</text>
<text x="666.5" y="2309" font-size="26.5" fill="#f0f0f0" textLength="71" lengthAdjust="spacing">14:22</text>
<text x="1212.8" y="2309" font-size="26.5" fill="#f0f0f0" textLength="71" lengthAdjust="spacing">14:28</text>
<text x="1394.7" y="2309" font-size="26.5" fill="#f0f0f0" textLength="71" lengthAdjust="spacing">14:30</text>
<text x="1577" y="2309" font-size="26.5" fill="#f0f0f0" textLength="71" lengthAdjust="spacing">14:32</text>
<rect x="156" y="2280" width="1" height="3" fill="#707070"/>
<rect x="338" y="2280" width="1" height="3" fill="#707070"/>
<rect x="520" y="2280" width="1" height="3" fill="#707070"/>
<rect x="702" y="2280" width="1" height="3" fill="#707070"/>
<rect x="884" y="2280" width="1" height="3" fill="#707070"/>
<rect x="1066" y="2280" width="1" height="3" fill="#707070"/>
<rect x="1248" y="2280" width="1" height="3" fill="#707070"/>
<rect x="1430" y="2280" width="1" height="3" fill="#707070"/>
<rect x="1612" y="2280" width="1" height="3" fill="#707070"/>
<rect x="792" y="2283" width="366" height="38" fill="#fff"/>
<text x="805" y="2309" font-size="26.5" fill="#000" textLength="337" lengthAdjust="spacing">Thu 2025-04-10  14:25:00</text>
<rect x="1836" y="2282" width="69" height="38" fill="#00c800"/>
<text x="1843" y="2309" font-size="26.5" fill="#ffeeff" textLength="53" lengthAdjust="spacing">90 E</text></g>
<g id="chart-right"><rect x="1935" y="103" width="1890" height="2222" fill="#000"/>
<line x1="1935" y1="422.5" x2="3018" y2="422.5" stroke="#3e1f06" stroke-width="1"/>
<line x1="1935" y1="426.5" x2="3018" y2="426.5" stroke="#3e1f06" stroke-width="1"/>
<line x1="3011" y1="253.5" x2="3376" y2="253.5" stroke="#3e1f06" stroke-width="1"/>
<line x1="3011" y1="258.5" x2="3376" y2="258.5" stroke="#3e1f06" stroke-width="1"/>
<line x1="1935" y1="253.5" x2="2005" y2="253.5" stroke="#3e1f06" stroke-width="1"/>
<line x1="1935" y1="258.5" x2="2005" y2="258.5" stroke="#3e1f06" stroke-width="1"/>
<line x1="3011" y1="211.5" x2="3383" y2="211.5" stroke="#ffb000" stroke-width="1"/>
<line x1="1935" y1="626" x2="2747" y2="626" stroke="#46004a" stroke-width="2"/>
<line x1="1935" y1="632.5" x2="2747" y2="632.5" stroke="#3a003c" stroke-width="1"/>
<line x1="1935" y1="590.5" x2="2797" y2="590.5" stroke="#a00000" stroke-width="1" stroke-dasharray="3 4"/>
<line x1="1935" y1="610.5" x2="2797" y2="610.5" stroke="#a00000" stroke-width="1" stroke-dasharray="3 4"/>
<line x1="1935" y1="700.5" x2="2746" y2="700.5" stroke="#a00000" stroke-width="1" stroke-dasharray="3 4"/>
<line x1="3018" y1="414.5" x2="3358" y2="414.5" stroke="#a00000" stroke-width="1" stroke-dasharray="3 4"/>
<line x1="3358" y1="398.5" x2="3373" y2="398.5" stroke="#a00000" stroke-width="1" stroke-dasharray="3 4"/>
<line x1="3018" y1="448.5" x2="3291" y2="448.5" stroke="#3a003c" stroke-width="1"/>
<line x1="3018" y1="452.5" x2="3291" y2="452.5" stroke="#3a003c" stroke-width="1"/>
<line x1="3018" y1="448.5" x2="3040" y2="448.5" stroke="#ff9cf0" stroke-width="1"  opacity="0.7"/>
<line x1="3018" y1="452.5" x2="3040" y2="452.5" stroke="#ff9cf0" stroke-width="1"  opacity="0.7"/>
<line x1="3018" y1="521" x2="3291" y2="521" stroke="#4e2a05" stroke-width="2"/>
<line x1="3018" y1="526.5" x2="3291" y2="526.5" stroke="#3e1f06" stroke-width="1"/>
<line x1="3018" y1="532.5" x2="3291" y2="532.5" stroke="#3e1f06" stroke-width="1"/>
<line x1="3018" y1="537" x2="3291" y2="537" stroke="#4e2a05" stroke-width="2"/>
<line x1="2950" y1="616.5" x2="3019" y2="616.5" stroke="#3a003c" stroke-width="1"/>
<line x1="2950" y1="621" x2="3019" y2="621" stroke="#46004a" stroke-width="2"/>
<line x1="3290" y1="605" x2="3376" y2="605" stroke="#46004a" stroke-width="2"/>
<line x1="3290" y1="610.5" x2="3376" y2="610.5" stroke="#3a003c" stroke-width="1"/>
<line x1="3300" y1="605" x2="3320" y2="605" stroke="#ff9cf0" stroke-width="2"  opacity="0.8"/>
<line x1="3300" y1="610.5" x2="3320" y2="610.5" stroke="#ff9cf0" stroke-width="1"  opacity="0.8"/>
<line x1="3018" y1="657.5" x2="3086" y2="657.5" stroke="#3e1f06" stroke-width="1"/>
<line x1="3018" y1="662" x2="3086" y2="662" stroke="#4e2a05" stroke-width="2"/>
<line x1="3154" y1="678.5" x2="3223" y2="678.5" stroke="#3e1f06" stroke-width="1"/>
<line x1="3154" y1="684" x2="3223" y2="684" stroke="#4e2a05" stroke-width="2"/>
<line x1="2746" y1="758.5" x2="3086" y2="758.5" stroke="#3a003c" stroke-width="1"/>
<line x1="2746" y1="762.5" x2="3086" y2="762.5" stroke="#3a003c" stroke-width="1"/>
<line x1="1935" y1="500.5" x2="3382" y2="500.5" stroke="#5ce6e6" stroke-width="1" stroke-dasharray="4 3"/>
<line x1="1935" y1="554.5" x2="3671" y2="554.5" stroke="#747474" stroke-width="1" stroke-dasharray="17 6"/>
<line x1="1935" y1="910.5" x2="3382" y2="910.5" stroke="#8e8e8e" stroke-width="1" stroke-dasharray="4 2"/>
<line x1="1935" y1="936.5" x2="3376" y2="936.5" stroke="#e8e8e8" stroke-width="1"/>
<line x1="3205" y1="964.5" x2="3376" y2="964.5" stroke="#007800" stroke-width="1" stroke-dasharray="5 3"/>
<line x1="1935" y1="972.5" x2="3376" y2="972.5" stroke="#3e1f06" stroke-width="1"/>
<line x1="1935" y1="978" x2="3376" y2="978" stroke="#4e2a05" stroke-width="2"/>
<line x1="1935" y1="1020" x2="3376" y2="1020" stroke="#4e2a05" stroke-width="2"/>
<line x1="1935" y1="1026.5" x2="3376" y2="1026.5" stroke="#3e1f06" stroke-width="1"/>
<line x1="1935" y1="1036.5" x2="3383" y2="1036.5" stroke="#ffb000" stroke-width="1"/>
<line x1="1935" y1="1202.5" x2="3375" y2="1202.5" stroke="#007800" stroke-width="1" stroke-dasharray="3 4"/>
<line x1="1935" y1="1322.5" x2="3375" y2="1322.5" stroke="#007800" stroke-width="1" stroke-dasharray="3 4"/>
<line x1="1935" y1="1676.5" x2="3373" y2="1676.5" stroke="#007800" stroke-width="1" stroke-dasharray="3 4"/>
<line x1="1935" y1="1646.5" x2="3376" y2="1646.5" stroke="#3a003c" stroke-width="1"/>
<line x1="1935" y1="1651" x2="3376" y2="1651" stroke="#46004a" stroke-width="2"/>
<line x1="1935" y1="1772.5" x2="3376" y2="1772.5" stroke="#46004a" stroke-width="1"/>
<line x1="1935" y1="1776" x2="3376" y2="1776" stroke="#46004a" stroke-width="2"/>
<line x1="1935" y1="1850.5" x2="3376" y2="1850.5" stroke="#3e1f06" stroke-width="1"/>
<line x1="1935" y1="1856" x2="3376" y2="1856" stroke="#4e2a05" stroke-width="2"/>
<line x1="1935" y1="1903" x2="3376" y2="1903" stroke="#4e2a05" stroke-width="2"/>
<line x1="2882.5" y1="148" x2="2882.5" y2="2283" stroke="#5e5e5e" stroke-width="1" stroke-dasharray="17 6"/>
<polygon points="1947,392.08 1949.89,392.08 1949.89,397.34 1951.06,397.34 1951.06,402.61 1952.82,402.61 1952.82,407.88 1957.21,407.88 1957.21,413.14 1967.16,413.14 1967.16,418.41 1980.32,418.41 1980.32,423.67 1985,423.67 1985,428.94 1998.17,428.94 1998.17,434.21 1997.29,434.21 1997.29,439.47 1999.05,439.47 1999.05,444.74 1983.25,444.74 1983.25,450.01 1989.98,450.01 1989.98,455.27 1992.9,455.27 1992.9,460.54 1986.17,460.54 1986.17,465.8 2007.82,465.8 2007.82,471.07 2006.65,471.07 2006.65,476.34 2008.99,476.34 2008.99,481.6 1987.93,481.6 1987.93,486.87 2000.22,486.87 2000.22,492.14 2020.7,492.14 2020.7,497.4 2010.75,497.4 2010.75,502.67 2003.73,502.67 2003.73,507.93 2023.91,507.93 2023.91,513.2 2021.57,513.2 2021.57,518.47 2023.04,518.47 2023.04,523.73 2030.06,523.73 2030.06,529 2048.78,529 2048.78,534.27 2047.03,534.27 2047.03,539.53 2042.93,539.53 2042.93,544.8 2018.36,544.8 2018.36,550.06 2018.65,550.06 2018.65,555.33 2005.48,555.33 2005.48,560.6 2008.99,560.6 2008.99,565.86 2007.53,565.86 2007.53,571.13 1994.07,571.13 1994.07,576.4 1975.93,576.4 1975.93,581.66 1976.23,581.66 1976.23,586.93 1968.91,586.93 1968.91,592.19 1982.08,592.19 1982.08,597.46 2008.12,597.46 2008.12,602.73 2008.99,602.73 2008.99,607.99 2016.89,607.99 2016.89,613.26 2005.48,613.26 2005.48,618.53 2003.14,618.53 2003.14,623.79 2032.98,623.79 2032.98,629.06 2002.26,629.06 2002.26,634.32 2017.77,634.32 2017.77,639.59 2038.84,639.59 2038.84,644.86 2027.13,644.86 2027.13,650.12 2044.1,650.12 2044.1,655.39 2047.03,655.39 2047.03,660.66 2044.1,660.66 2044.1,665.92 2035.91,665.92 2035.91,671.19 2042.93,671.19 2042.93,676.45 2054.05,676.45 2054.05,681.72 2013.38,681.72 2013.38,686.99 2025.08,686.99 2025.08,692.25 2038.25,692.25 2038.25,697.52 2011.33,697.52 2011.33,702.79 2016.31,702.79 2016.31,708.05 2010.16,708.05 2010.16,713.32 2008.99,713.32 2008.99,718.58 1996.71,718.58 1996.71,723.85 2003.73,723.85 2003.73,729.12 1994.37,729.12 1994.37,734.38 1990.85,734.38 1990.85,739.65 1997.29,739.65 1997.29,744.92 2001.97,744.92 2001.97,750.18 1980.32,750.18 1980.32,755.45 1985.59,755.45 1985.59,760.71 1991.44,760.71 1991.44,765.98 1997.29,765.98 1997.29,771.25 2003.14,771.25 2003.14,776.51 1947,776.51" fill="#2b2b2b" opacity="0.95"/>
<rect x="2694" y="736" width="3" height="34" fill="#ff2200"/>
<rect x="2728" y="737.5" width="3" height="32.5" fill="#ffffff"/>
<rect x="2745" y="668.18" width="3" height="101.82" fill="#ffffff"/>
<rect x="2739" y="684.27" width="14" height="85.73" fill="#ffffff" rx="1"/>
<rect x="2762" y="642.14" width="3" height="108.84" fill="#ffffff"/>
<rect x="2756" y="673.15" width="14" height="16.38" fill="#ffffff" rx="1"/>
<rect x="2779" y="618.15" width="3" height="86.6" fill="#ff2200"/>
<rect x="2773" y="656.18" width="14" height="17.26" fill="#ff2200" rx="1"/>
<rect x="2796" y="589.19" width="3" height="118.49" fill="#ffffff"/>
<rect x="2790" y="648.29" width="14" height="28.38" fill="#ffffff" rx="1"/>
<rect x="2813" y="635.12" width="3" height="95.38" fill="#ff2200"/>
<rect x="2807" y="648.29" width="14" height="64.37" fill="#ff2200" rx="1"/>
<rect x="2830" y="568.12" width="3" height="177.59" fill="#ffffff"/>
<rect x="2824" y="626.34" width="14" height="86.31" fill="#ffffff" rx="1"/>
<rect x="2847" y="516.04" width="3" height="103.86" fill="#ffffff"/>
<rect x="2841" y="555.25" width="14" height="64.66" fill="#ffffff" rx="1"/>
<rect x="2864" y="538.28" width="3" height="90.4" fill="#ff2200"/>
<rect x="2858" y="561.98" width="14" height="48.86" fill="#ff2200" rx="1"/>
<rect x="2881" y="482.98" width="3" height="182.86" fill="#ffffff"/>
<rect x="2875" y="533.31" width="14" height="74.31" fill="#ffffff" rx="1"/>
<rect x="2898" y="499.37" width="3" height="71.39" fill="#ffffff"/>
<rect x="2892" y="517.51" width="14" height="21.36" fill="#ffffff" rx="1"/>
<rect x="2915" y="509.02" width="3" height="70.8" fill="#ff2200"/>
<rect x="2909" y="517.51" width="14" height="22.24" fill="#ff2200" rx="1"/>
<rect x="2932" y="509.02" width="3" height="54.71" fill="#ffffff"/>
<rect x="2926" y="533.31" width="14" height="7.31" fill="#ffffff" rx="1"/>
<rect x="2949" y="455.19" width="3" height="118.49" fill="#ffffff"/>
<rect x="2943" y="480.35" width="14" height="47.4" fill="#ffffff" rx="1"/>
<rect x="2966" y="473.33" width="3" height="92.16" fill="#ff2200"/>
<rect x="2960" y="484.15" width="14" height="63.49" fill="#ff2200" rx="1"/>
<rect x="2983" y="505.22" width="3" height="119.37" fill="#ff2200"/>
<rect x="2977" y="549.1" width="14" height="15.51" fill="#ff2200" rx="1"/>
<rect x="3000" y="504.34" width="3" height="55.3" fill="#ffffff"/>
<rect x="2994" y="518.39" width="14" height="37.16" fill="#ffffff" rx="1"/>
<rect x="3017" y="413.65" width="3" height="102.98" fill="#ffffff"/>
<rect x="3011" y="442.32" width="14" height="66.41" fill="#ffffff" rx="1"/>
<rect x="3034" y="439.98" width="3" height="71.68" fill="#ff2200"/>
<rect x="3028" y="440.85" width="14" height="9.65" fill="#ff2200" rx="1"/>
<rect x="3051" y="458.99" width="3" height="57.64" fill="#ff2200"/>
<rect x="3045" y="462.21" width="14" height="43.59" fill="#ff2200" rx="1"/>
<rect x="3068" y="501.12" width="3" height="169.98" fill="#ff2200"/>
<rect x="3062" y="511.36" width="14" height="158.28" fill="#ff2200" rx="1"/>
<rect x="3085" y="613.18" width="3" height="159.45" fill="#ff2200"/>
<rect x="3079" y="650.33" width="14" height="90.11" fill="#ff2200" rx="1"/>
<rect x="3102" y="664.08" width="3" height="96.55" fill="#ffffff"/>
<rect x="3096" y="687.2" width="14" height="53.25" fill="#ffffff" rx="1"/>
<rect x="3119" y="668.18" width="3" height="69.34" fill="#ff2200"/>
<rect x="3113" y="694.22" width="14" height="17.55" fill="#ff2200" rx="1"/>
<rect x="3136" y="605.28" width="3" height="120.25" fill="#ffffff"/>
<rect x="3130" y="612.3" width="14" height="95.38" fill="#ffffff" rx="1"/>
<rect x="3153" y="604.11" width="3" height="124.63" fill="#ff2200"/>
<rect x="3147" y="606.16" width="14" height="112.64" fill="#ff2200" rx="1"/>
<rect x="3170" y="663.21" width="3" height="93.62" fill="#ff2200"/>
<rect x="3164" y="713.24" width="14" height="34.23" fill="#ff2200" rx="1"/>
<rect x="3187" y="747.47" width="3" height="75.85" fill="#ff2200"/>
<rect x="3181" y="747.47" width="14" height="69.99" fill="#ff2200" rx="1"/>
<rect x="3204" y="806.34" width="3" height="157.4" fill="#ff2200"/>
<rect x="3198" y="818.05" width="14" height="116.44" fill="#ff2200" rx="1"/>
<rect x="3221" y="705.34" width="3" height="223.3" fill="#ffffff"/>
<rect x="3215" y="721.14" width="14" height="207.5" fill="#ffffff" rx="1"/>
<rect x="3238" y="718.21" width="3" height="136.41" fill="#ff2200"/>
<rect x="3232" y="721.14" width="14" height="100.42" fill="#ff2200" rx="1"/>
<rect x="3255" y="693.34" width="3" height="122.36" fill="#ffffff"/>
<rect x="3249" y="698.31" width="14" height="117.39" fill="#ffffff" rx="1"/>
<rect x="3272" y="626.34" width="3" height="78.99" fill="#ffffff"/>
<rect x="3266" y="684.27" width="14" height="19.89" fill="#ffffff" rx="1"/>
<rect x="3289" y="633.36" width="3" height="91.28" fill="#ff2200"/>
<rect x="3283" y="671.11" width="14" height="24.58" fill="#ff2200" rx="1"/>
<rect x="3306" y="436.17" width="3" height="264.48" fill="#ffffff"/>
<rect x="3300" y="482.4" width="14" height="217.38" fill="#ffffff" rx="1"/>
<rect x="3323" y="458.99" width="3" height="99.77" fill="#ff2200"/>
<rect x="3317" y="482.4" width="14" height="57.34" fill="#ff2200" rx="1"/>
<rect x="3340" y="420.37" width="3" height="158.57" fill="#ffffff"/>
<rect x="3334" y="434.42" width="14" height="90.99" fill="#ffffff" rx="1"/>
<rect x="3357" y="398.14" width="3" height="101.81" fill="#ff2200"/>
<rect x="3351" y="434.42" width="14" height="62.02" fill="#ff2200" rx="1"/>
<rect x="3374" y="458.99" width="3" height="112.64" fill="#ff2200"/>
<rect x="3368" y="508.15" width="14" height="63.49" fill="#ff2200" rx="1"/>
<rect x="3385" y="563" width="8" height="2" fill="#ff0000"/>
<rect x="3385" y="570" width="8" height="2" fill="#00ff00"/>
<rect x="1939" y="148.5" width="447" height="37.5" fill="#0080c8"/>
<rect x="1939" y="186" width="119" height="37" fill="#0080c8"/>
<text x="1941.5" y="172.8" font-size="25.5" fill="#f0f6ff" textLength="436" lengthAdjust="spacing">[Lock][Sim1]  Trade: 3@18751.75</text>
<text x="1940.5" y="210.6" font-size="26.5" fill="#f0f6ff" textLength="115.5" lengthAdjust="spacing">NPL: 99C</text>
<text x="2005.5" y="243.5" font-size="49.5" fill="#ffff00" textLength="999" lengthAdjust="spacing">NQM25_FUT_CME MNQM25_FUT_CME</text>
<text x="2006" y="287.5" font-size="44" fill="#ffff00" textLength="192" lengthAdjust="spacing">14:32:26</text>
<polygon points="1935,2282 1935,2214.51 1947.6,2235.87 1964.6,2180.87 1981.6,2088.71 1998.6,2082.86 2015.6,2096.61 2032.6,2163.31 2049.6,2077 2066.6,2122.35 2083.6,2185.25 2100.6,2154.53 2117.6,2198.42 2134.6,2204.27 2151.6,2219.49 2168.6,2214.51 2185.6,2217.44 2202.6,2087.83 2219.6,2182.33 2236.6,2180.87 2253.6,2183.21 2270.6,2120.89 2287.6,2160.39 2304.6,1949.15 2321.6,2192.57 2338.6,2191.69 2355.6,2208.66 2372.6,2185.25 2389.6,2220.36 2406.6,2023.76 2423.6,2188.18 2440.6,2254.01 2457.6,2157.46 2474.6,2223.29 2491.6,2204.27 2508.6,2212.46 2525.6,2125.28 2542.6,2154.53 2559.6,2122.35 2576.6,2215.97 2593.6,2245.23 2610.6,2183.79 2627.6,2110.65 2644.6,2042.48 2661.6,2066.76 2678.6,2202.81 2695.6,2090.17 2712.6,2164.77 2729.6,2192.57 2746.6,2097.48 2763.6,2149.27 2780.6,2141.37 2797.6,2060.91 2814.6,2120.01 2831.6,2145.76 2848.6,2122.35 2865.6,2136.4 2882.6,2028.73 2899.6,2150.15 2916.6,2188.18 2933.6,2270.98 2950.6,2125.86 2967.6,2216.85 2984.6,2132.59 3001.6,2243.77 3018.6,2080.81 3035.6,2268.64 3052.6,2264.25 3069.6,2029.61 3086.6,2075.54 3103.6,2173.55 3120.6,2225.63 3137.6,2207.2 3154.6,2226.8 3171.6,2260.74 3188.6,2173.55 3205.6,2025.8 3222.6,1987.77 3239.6,2205.15 3256.6,2226.21 3273.6,2144.29 3290.6,2180.87 3307.6,2049.21 3324.6,2186.72 3341.6,2148.68 3358.6,2053.6 3375.6,2242 3375.6,2282" fill="#404040"/>
<rect x="1947" y="2057.99" width="1" height="89.23" fill="#0000ff"/>
<rect x="1941" y="2088.12" width="13" height="19.6" fill="#0000ff" rx="1"/>
<rect x="1964" y="2049.8" width="1" height="128.15" fill="#0000ff"/>
<rect x="1958" y="2088.12" width="13" height="48.86" fill="#0000ff" rx="1"/>
<rect x="1981" y="2120.89" width="1" height="106.79" fill="#0000ff"/>
<rect x="1975" y="2151.02" width="13" height="2" fill="#0000ff" rx="1"/>
<rect x="1998" y="2115.04" width="1" height="109.71" fill="#0000ff"/>
<rect x="1992" y="2151.02" width="13" height="25.45" fill="#0000ff" rx="1"/>
<rect x="2015" y="2186.13" width="1" height="35.69" fill="#0000ff"/>
<rect x="2009" y="2193.15" width="13" height="14.63" fill="#0000ff" rx="1"/>
<rect x="2032" y="2160.39" width="1" height="71.68" fill="#0000ff"/>
<rect x="2026" y="2215.1" width="13" height="16.38" fill="#0000ff" rx="1"/>
<rect x="2049" y="2119.43" width="1" height="96.55" fill="#0000ff"/>
<rect x="2043" y="2150.15" width="13" height="65.83" fill="#0000ff" rx="1"/>
<rect x="2066" y="2061.79" width="1" height="110.3" fill="#0000ff"/>
<rect x="2060" y="2107.14" width="13" height="43.59" fill="#0000ff" rx="1"/>
<rect x="2083" y="2081.39" width="1" height="77.53" fill="#0000ff"/>
<rect x="2077" y="2107.14" width="13" height="17.55" fill="#0000ff" rx="1"/>
<rect x="2100" y="2084.9" width="1" height="85.72" fill="#0000ff"/>
<rect x="2094" y="2124.4" width="13" height="16.38" fill="#0000ff" rx="1"/>
<rect x="2117" y="2077.88" width="1" height="84.84" fill="#0000ff"/>
<rect x="2111" y="2098.36" width="13" height="42.42" fill="#0000ff" rx="1"/>
<rect x="2134" y="2084.32" width="1" height="108.25" fill="#0000ff"/>
<rect x="2128" y="2098.36" width="13" height="69.34" fill="#0000ff" rx="1"/>
<rect x="2151" y="2115.04" width="1" height="70.22" fill="#0000ff"/>
<rect x="2145" y="2140.49" width="13" height="27.21" fill="#0000ff" rx="1"/>
<rect x="2168" y="2098.95" width="1" height="115.56" fill="#0000ff"/>
<rect x="2162" y="2140.49" width="13" height="30.13" fill="#0000ff" rx="1"/>
<rect x="2185" y="2106.26" width="1" height="86.31" fill="#0000ff"/>
<rect x="2179" y="2167.99" width="13" height="2.34" fill="#0000ff" rx="1"/>
<rect x="2202" y="2077" width="1" height="112.64" fill="#0000ff"/>
<rect x="2196" y="2157.46" width="13" height="11.12" fill="#0000ff" rx="1"/>
<rect x="2219" y="2086.07" width="1" height="91.87" fill="#0000ff"/>
<rect x="2213" y="2107.14" width="13" height="50.32" fill="#0000ff" rx="1"/>
<rect x="2236" y="2086.07" width="1" height="103.57" fill="#0000ff"/>
<rect x="2230" y="2107.14" width="13" height="36.28" fill="#0000ff" rx="1"/>
<rect x="2253" y="2098.07" width="1" height="85.72" fill="#0000ff"/>
<rect x="2247" y="2143.42" width="13" height="35.99" fill="#0000ff" rx="1"/>
<rect x="2270" y="2134.06" width="1" height="99.47" fill="#0000ff"/>
<rect x="2264" y="2179.4" width="13" height="21.94" fill="#0000ff" rx="1"/>
<rect x="2287" y="2105.38" width="1" height="105.32" fill="#0000ff"/>
<rect x="2281" y="2153.95" width="13" height="47.4" fill="#0000ff" rx="1"/>
<rect x="2304" y="2106.26" width="1" height="157.99" fill="#0000ff"/>
<rect x="2298" y="2153.95" width="13" height="22.53" fill="#0000ff" rx="1"/>
<rect x="2321" y="2131.13" width="1" height="108.25" fill="#0000ff"/>
<rect x="2315" y="2175.01" width="13" height="2" fill="#0000ff" rx="1"/>
<rect x="2338" y="2134.06" width="1" height="115.56" fill="#0000ff"/>
<rect x="2332" y="2175.01" width="13" height="16.68" fill="#0000ff" rx="1"/>
<rect x="2355" y="2134.06" width="1" height="87.77" fill="#0000ff"/>
<rect x="2349" y="2177.94" width="13" height="13.75" fill="#0000ff" rx="1"/>
<rect x="2372" y="2122.35" width="1" height="81.92" fill="#0000ff"/>
<rect x="2366" y="2177.94" width="13" height="5.85" fill="#0000ff" rx="1"/>
<rect x="2389" y="2148.68" width="1" height="68.75" fill="#0000ff"/>
<rect x="2383" y="2183.21" width="13" height="16.38" fill="#0000ff" rx="1"/>
<rect x="2406" y="2122.35" width="1" height="127.27" fill="#0000ff"/>
<rect x="2400" y="2148.1" width="13" height="51.49" fill="#0000ff" rx="1"/>
<rect x="2423" y="2125.28" width="1" height="80.46" fill="#0000ff"/>
<rect x="2417" y="2148.1" width="13" height="16.68" fill="#0000ff" rx="1"/>
<rect x="2440" y="2147.22" width="1" height="68.75" fill="#0000ff"/>
<rect x="2434" y="2164.19" width="13" height="25.45" fill="#0000ff" rx="1"/>
<rect x="2457" y="2122.35" width="1" height="99.47" fill="#0000ff"/>
<rect x="2451" y="2168.29" width="13" height="21.36" fill="#0000ff" rx="1"/>
<rect x="2474" y="2147.22" width="1" height="76.07" fill="#0000ff"/>
<rect x="2468" y="2168.29" width="13" height="27.21" fill="#0000ff" rx="1"/>
<rect x="2491" y="2158.92" width="1" height="65.83" fill="#0000ff"/>
<rect x="2485" y="2180.28" width="13" height="15.21" fill="#0000ff" rx="1"/>
<rect x="2508" y="2160.97" width="1" height="69.63" fill="#0000ff"/>
<rect x="2502" y="2180.28" width="13" height="30.43" fill="#0000ff" rx="1"/>
<rect x="2525" y="2175.01" width="1" height="99.47" fill="#0000ff"/>
<rect x="2519" y="2210.12" width="13" height="27.21" fill="#0000ff" rx="1"/>
<rect x="2542" y="2132.59" width="1" height="106.79" fill="#0000ff"/>
<rect x="2536" y="2155.12" width="13" height="82.21" fill="#0000ff" rx="1"/>
<rect x="2559" y="2138.44" width="1" height="59.98" fill="#0000ff"/>
<rect x="2553" y="2155.12" width="13" height="12.58" fill="#0000ff" rx="1"/>
<rect x="2576" y="2135.52" width="1" height="80.46" fill="#0000ff"/>
<rect x="2570" y="2163.31" width="13" height="4.39" fill="#0000ff" rx="1"/>
<rect x="2593" y="2139.32" width="1" height="69.34" fill="#0000ff"/>
<rect x="2587" y="2163.31" width="13" height="37.16" fill="#0000ff" rx="1"/>
<rect x="2610" y="2153.95" width="1" height="86.89" fill="#0000ff"/>
<rect x="2604" y="2200.47" width="13" height="28.09" fill="#0000ff" rx="1"/>
<rect x="2627" y="2136.98" width="1" height="130.19" fill="#0000ff"/>
<rect x="2621" y="2147.22" width="13" height="81.33" fill="#0000ff" rx="1"/>
<rect x="2644" y="2104.8" width="1" height="63.78" fill="#0000ff"/>
<rect x="2638" y="2126.16" width="13" height="21.06" fill="#0000ff" rx="1"/>
<rect x="2661" y="2104.8" width="1" height="93.04" fill="#0000ff"/>
<rect x="2655" y="2126.16" width="13" height="36.28" fill="#0000ff" rx="1"/>
<rect x="2678" y="2112.99" width="1" height="89.82" fill="#0000ff"/>
<rect x="2672" y="2146.34" width="13" height="16.09" fill="#0000ff" rx="1"/>
<rect x="2695" y="2090.17" width="1" height="119.95" fill="#0000ff"/>
<rect x="2689" y="2146.34" width="13" height="52.08" fill="#0000ff" rx="1"/>
<rect x="2712" y="2100.41" width="1" height="127.85" fill="#0000ff"/>
<rect x="2706" y="2124.4" width="13" height="74.02" fill="#0000ff" rx="1"/>
<rect x="2729" y="2093.1" width="1" height="77.53" fill="#0000ff"/>
<rect x="2723" y="2124.4" width="13" height="32.18" fill="#0000ff" rx="1"/>
<rect x="2746" y="2081.39" width="1" height="81.04" fill="#0000ff"/>
<rect x="2740" y="2114.16" width="13" height="42.42" fill="#0000ff" rx="1"/>
<rect x="2763" y="2079.05" width="1" height="98.89" fill="#0000ff"/>
<rect x="2757" y="2097.19" width="13" height="16.97" fill="#0000ff" rx="1"/>
<rect x="2780" y="2052.14" width="1" height="104.74" fill="#0000ff"/>
<rect x="2774" y="2097.19" width="13" height="44.47" fill="#0000ff" rx="1"/>
<rect x="2797" y="2053.6" width="1" height="121.42" fill="#0000ff"/>
<rect x="2791" y="2127.33" width="13" height="14.34" fill="#0000ff" rx="1"/>
<rect x="2814" y="2104.8" width="1" height="113.52" fill="#0000ff"/>
<rect x="2808" y="2127.33" width="13" height="55.3" fill="#0000ff" rx="1"/>
<rect x="2831" y="2077" width="1" height="140.43" fill="#0000ff"/>
<rect x="2825" y="2150.15" width="13" height="32.48" fill="#0000ff" rx="1"/>
<rect x="2848" y="2047.16" width="1" height="103.28" fill="#0000ff"/>
<rect x="2842" y="2104.21" width="13" height="46.23" fill="#0000ff" rx="1"/>
<rect x="2865" y="2085.2" width="1" height="102.98" fill="#0000ff"/>
<rect x="2859" y="2104.21" width="13" height="60.27" fill="#0000ff" rx="1"/>
<rect x="2882" y="2075.54" width="1" height="165.3" fill="#0000ff"/>
<rect x="2876" y="2118.26" width="13" height="46.23" fill="#0000ff" rx="1"/>
<rect x="2899" y="2073.2" width="1" height="71.09" fill="#0000ff"/>
<rect x="2893" y="2086.37" width="13" height="31.89" fill="#0000ff" rx="1"/>
<rect x="2916" y="2076.13" width="1" height="77.82" fill="#0000ff"/>
<rect x="2910" y="2086.37" width="13" height="27.21" fill="#0000ff" rx="1"/>
<rect x="2933" y="2081.39" width="1" height="57.05" fill="#0000ff"/>
<rect x="2927" y="2107.14" width="13" height="6.44" fill="#0000ff" rx="1"/>
<rect x="2950" y="2041.9" width="1" height="117.03" fill="#0000ff"/>
<rect x="2944" y="2055.35" width="13" height="52.37" fill="#0000ff" rx="1"/>
<rect x="2967" y="2040.43" width="1" height="107.67" fill="#0000ff"/>
<rect x="2961" y="2055.35" width="13" height="65.24" fill="#0000ff" rx="1"/>
<rect x="2984" y="2069.1" width="1" height="117.61" fill="#0000ff"/>
<rect x="2978" y="2093.1" width="13" height="27.5" fill="#0000ff" rx="1"/>
<rect x="3001" y="2036.92" width="1" height="64.95" fill="#0000ff"/>
<rect x="2995" y="2045.41" width="13" height="48.27" fill="#0000ff" rx="1"/>
<rect x="3018" y="2027.27" width="1" height="33.65" fill="#0000ff"/>
<rect x="3012" y="2034.29" width="13" height="11.12" fill="#0000ff" rx="1"/>
<rect x="3035" y="2027.27" width="1" height="57.64" fill="#0000ff"/>
<rect x="3029" y="2034.29" width="13" height="24.28" fill="#0000ff" rx="1"/>
<rect x="3052" y="2043.36" width="1" height="51.2" fill="#0000ff"/>
<rect x="3046" y="2058.28" width="13" height="22.24" fill="#0000ff" rx="1"/>
<rect x="3069" y="2075.54" width="1" height="115.56" fill="#0000ff"/>
<rect x="3063" y="2089" width="13" height="64.37" fill="#0000ff" rx="1"/>
<rect x="3086" y="2134.06" width="1" height="50.61" fill="#0000ff"/>
<rect x="3080" y="2152.19" width="13" height="2" fill="#0000ff" rx="1"/>
<rect x="3103" y="2054.18" width="1" height="110.59" fill="#0000ff"/>
<rect x="3097" y="2080.22" width="13" height="71.97" fill="#0000ff" rx="1"/>
<rect x="3120" y="2038.09" width="1" height="76.95" fill="#0000ff"/>
<rect x="3114" y="2077" width="13" height="3.51" fill="#0000ff" rx="1"/>
<rect x="3137" y="2007.37" width="1" height="116.44" fill="#0000ff"/>
<rect x="3131" y="2026.39" width="13" height="51.2" fill="#0000ff" rx="1"/>
<rect x="3154" y="2019.37" width="1" height="98.6" fill="#0000ff"/>
<rect x="3148" y="2026.39" width="13" height="79.29" fill="#0000ff" rx="1"/>
<rect x="3171" y="2069.1" width="1" height="59.68" fill="#0000ff"/>
<rect x="3165" y="2105.09" width="13" height="11.41" fill="#0000ff" rx="1"/>
<rect x="3188" y="2095.14" width="1" height="72.56" fill="#0000ff"/>
<rect x="3182" y="2116.5" width="13" height="23.41" fill="#0000ff" rx="1"/>
<rect x="3205" y="2118.84" width="1" height="92.74" fill="#0000ff"/>
<rect x="3199" y="2139.32" width="13" height="27.21" fill="#0000ff" rx="1"/>
<rect x="3222" y="2025.22" width="1" height="141.31" fill="#0000ff"/>
<rect x="3216" y="2050.38" width="13" height="116.15" fill="#0000ff" rx="1"/>
<rect x="3239" y="2047.75" width="1" height="106.2" fill="#0000ff"/>
<rect x="3233" y="2050.38" width="13" height="43.3" fill="#0000ff" rx="1"/>
<rect x="3256" y="2014.1" width="1" height="90.7" fill="#0000ff"/>
<rect x="3250" y="2034.29" width="13" height="59.39" fill="#0000ff" rx="1"/>
<rect x="3273" y="1987.19" width="1" height="97.72" fill="#0000ff"/>
<rect x="3267" y="2034.29" width="13" height="6.44" fill="#0000ff" rx="1"/>
<rect x="3290" y="2003.86" width="1" height="82.8" fill="#0000ff"/>
<rect x="3284" y="2040.14" width="13" height="11.41" fill="#0000ff" rx="1"/>
<rect x="3307" y="1950.32" width="1" height="110.59" fill="#0000ff"/>
<rect x="3301" y="1997.43" width="13" height="54.13" fill="#0000ff" rx="1"/>
<rect x="3324" y="1976.07" width="1" height="79.58" fill="#0000ff"/>
<rect x="3318" y="1997.43" width="13" height="14.04" fill="#0000ff" rx="1"/>
<rect x="3341" y="1949.15" width="1" height="127.85" fill="#0000ff"/>
<rect x="3335" y="1972.26" width="13" height="39.2" fill="#0000ff" rx="1"/>
<rect x="3358" y="1951.2" width="1" height="102.4" fill="#0000ff"/>
<rect x="3352" y="1972.26" width="13" height="81.33" fill="#0000ff" rx="1"/>
<rect x="3375" y="2003" width="1" height="76.5" fill="#0000ff"/>
<rect x="3369" y="2053" width="13" height="26.5" fill="#0000ff" rx="1"/>
<rect x="1947" y="2127.62" width="1" height="19.6" fill="#ff0000"/>
<rect x="1941" y="2135.52" width="13" height="2.05" fill="#ff0000" rx="1"/>
<rect x="1964" y="2132.59" width="1" height="24.28" fill="#ff0000"/>
<rect x="1958" y="2136.98" width="13" height="19.89" fill="#ff0000" rx="1"/>
<rect x="1981" y="2136.98" width="1" height="57.93" fill="#ff0000"/>
<rect x="1975" y="2156.29" width="13" height="21.06" fill="#ff0000" rx="1"/>
<rect x="1998" y="2163.9" width="1" height="49.15" fill="#ff0000"/>
<rect x="1992" y="2177.06" width="13" height="31.6" fill="#ff0000" rx="1"/>
<rect x="2015" y="2205.73" width="1" height="65.24" fill="#ff0000"/>
<rect x="2009" y="2208.07" width="13" height="59.68" fill="#ff0000" rx="1"/>
<rect x="2032" y="2239.38" width="1" height="35.69" fill="#00ff00"/>
<rect x="2026.5" y="2246.5" width="12" height="21" fill="#008000" stroke="#00ff00" stroke-width="1"/>
<rect x="2049" y="2217.44" width="1" height="46.81" fill="#00ff00"/>
<rect x="2043.5" y="2240.5" width="12" height="4" fill="#008000" stroke="#00ff00" stroke-width="1"/>
<rect x="2066" y="2199.88" width="1" height="42.42" fill="#00ff00"/>
<rect x="2060.5" y="2213.5" width="12" height="27" fill="#008000" stroke="#00ff00" stroke-width="1"/>
<rect x="2083" y="2191.11" width="1" height="25.75" fill="#00ff00"/>
<rect x="2077.5" y="2209.5" width="12" height="3" fill="#008000" stroke="#00ff00" stroke-width="1"/>
<rect x="2100" y="2194.03" width="1" height="23.41" fill="#00ff00"/>
<rect x="2094.5" y="2209.5" width="12" height="1" fill="#008000" stroke="#00ff00" stroke-width="1"/>
<rect x="2117" y="2202.81" width="1" height="12.58" fill="#00ff00"/>
<rect x="2111.5" y="2205.5" width="12" height="3" fill="#008000" stroke="#00ff00" stroke-width="1"/>
<rect x="2134" y="2182.33" width="1" height="30.72" fill="#00ff00"/>
<rect x="2128.5" y="2188.5" width="12" height="17" fill="#008000" stroke="#00ff00" stroke-width="1"/>
<rect x="2151" y="2171.5" width="1" height="18.14" fill="#00ff00"/>
<rect x="2145.5" y="2180.5" width="12" height="6" fill="#008000" stroke="#00ff00" stroke-width="1"/>
<rect x="2168" y="2173.55" width="1" height="29.26" fill="#ff0000"/>
<rect x="2162" y="2180.28" width="13" height="13.75" fill="#ff0000" rx="1"/>
<rect x="2185" y="2183.21" width="1" height="44.47" fill="#ff0000"/>
<rect x="2179" y="2193.45" width="13" height="32.18" fill="#ff0000" rx="1"/>
<rect x="2202" y="2196.08" width="1" height="36.86" fill="#00ff00"/>
<rect x="2196.5" y="2200.5" width="12" height="24" fill="#008000" stroke="#00ff00" stroke-width="1"/>
<rect x="2219" y="2177.94" width="1" height="28.38" fill="#00ff00"/>
<rect x="2213.5" y="2179.5" width="12" height="18" fill="#008000" stroke="#00ff00" stroke-width="1"/>
<rect x="2236" y="2157.46" width="1" height="30.72" fill="#00ff00"/>
<rect x="2230.5" y="2160.5" width="12" height="18" fill="#008000" stroke="#00ff00" stroke-width="1"/>
<rect x="2253" y="2156" width="1" height="24.87" fill="#ff0000"/>
<rect x="2247" y="2159.8" width="13" height="18.72" fill="#ff0000" rx="1"/>
<rect x="2270" y="2164.77" width="1" height="30.72" fill="#00ff00"/>
<rect x="2264.5" y="2166.5" width="12" height="11" fill="#008000" stroke="#00ff00" stroke-width="1"/>
<rect x="2287" y="2144.29" width="1" height="25.45" fill="#00ff00"/>
<rect x="2281.5" y="2157.5" width="12" height="8" fill="#008000" stroke="#00ff00" stroke-width="1"/>
<rect x="2304" y="2134.93" width="1" height="92.16" fill="#00ff00"/>
<rect x="2298.5" y="2155.5" width="12" height="2" fill="#008000" stroke="#00ff00" stroke-width="1"/>
<rect x="2321" y="2130.25" width="1" height="25.75" fill="#00ff00"/>
<rect x="2315.5" y="2143.5" width="12" height="10" fill="#008000" stroke="#00ff00" stroke-width="1"/>
<rect x="2338" y="2132.01" width="1" height="21.94" fill="#00ff00"/>
<rect x="2332.5" y="2140.5" width="12" height="2" fill="#008000" stroke="#00ff00" stroke-width="1"/>
<rect x="2355" y="2117.96" width="1" height="23.41" fill="#00ff00"/>
<rect x="2349.5" y="2118.5" width="12" height="22" fill="#008000" stroke="#00ff00" stroke-width="1"/>
<rect x="2372" y="2095.14" width="1" height="31.6" fill="#ff0000"/>
<rect x="2366" y="2117.96" width="13" height="7.9" fill="#ff0000" rx="1"/>
<rect x="2389" y="2112.11" width="1" height="15.51" fill="#ff0000"/>
<rect x="2383" y="2125.28" width="13" height="2.34" fill="#ff0000" rx="1"/>
<rect x="2406" y="2091.63" width="1" height="42.42" fill="#00ff00"/>
<rect x="2400.5" y="2093.5" width="12" height="33" fill="#008000" stroke="#00ff00" stroke-width="1"/>
<rect x="2423" y="2088.71" width="1" height="11.7" fill="#ff0000"/>
<rect x="2417" y="2093.1" width="13" height="2" fill="#ff0000" rx="1"/>
<rect x="2440" y="2093.68" width="1" height="16.38" fill="#ff0000"/>
<rect x="2434" y="2093.97" width="13" height="14.04" fill="#ff0000" rx="1"/>
<rect x="2457" y="2095.14" width="1" height="15.51" fill="#ff0000"/>
<rect x="2451" y="2107.43" width="13" height="3.22" fill="#ff0000" rx="1"/>
<rect x="2474" y="2098.95" width="1" height="18.14" fill="#00ff00"/>
<rect x="2468.5" y="2107.5" width="12" height="3" fill="#008000" stroke="#00ff00" stroke-width="1"/>
<rect x="2491" y="2101.29" width="1" height="27.79" fill="#00ff00"/>
<rect x="2485.5" y="2107.5" width="12" height="1" fill="#008000" stroke="#00ff00" stroke-width="1"/>
<rect x="2508" y="2107.14" width="1" height="27.5" fill="#ff0000"/>
<rect x="2502" y="2107.14" width="13" height="24.58" fill="#ff0000" rx="1"/>
<rect x="2525" y="2111.23" width="1" height="46.81" fill="#00ff00"/>
<rect x="2519.5" y="2119.5" width="12" height="12" fill="#008000" stroke="#00ff00" stroke-width="1"/>
<rect x="2542" y="2096.02" width="1" height="32.18" fill="#00ff00"/>
<rect x="2536.5" y="2097.5" width="12" height="21" fill="#008000" stroke="#00ff00" stroke-width="1"/>
<rect x="2559" y="2090.75" width="1" height="46.81" fill="#ff0000"/>
<rect x="2553" y="2096.02" width="13" height="30.72" fill="#ff0000" rx="1"/>
<rect x="2576" y="2105.68" width="1" height="21.94" fill="#00ff00"/>
<rect x="2570.5" y="2114.5" width="12" height="11" fill="#008000" stroke="#00ff00" stroke-width="1"/>
<rect x="2593" y="2108.89" width="1" height="15.8" fill="#ff0000"/>
<rect x="2587" y="2114.45" width="13" height="3.51" fill="#ff0000" rx="1"/>
<rect x="2610" y="2093.68" width="1" height="33.94" fill="#00ff00"/>
<rect x="2604.5" y="2100.5" width="12" height="17" fill="#008000" stroke="#00ff00" stroke-width="1"/>
<rect x="2627" y="2067.93" width="1" height="38.33" fill="#00ff00"/>
<rect x="2621.5" y="2069.5" width="12" height="29" fill="#008000" stroke="#00ff00" stroke-width="1"/>
<rect x="2644" y="2061.79" width="1" height="44.47" fill="#ff0000"/>
<rect x="2638" y="2069.4" width="13" height="36.28" fill="#ff0000" rx="1"/>
<rect x="2661" y="2055.94" width="1" height="54.71" fill="#00ff00"/>
<rect x="2655.5" y="2076.5" width="12" height="30" fill="#008000" stroke="#00ff00" stroke-width="1"/>
<rect x="2678" y="2055.06" width="1" height="22.82" fill="#00ff00"/>
<rect x="2672.5" y="2060.5" width="12" height="15" fill="#008000" stroke="#00ff00" stroke-width="1"/>
<rect x="2695" y="2036.04" width="1" height="30.13" fill="#00ff00"/>
<rect x="2689.5" y="2056.5" width="12" height="4" fill="#008000" stroke="#00ff00" stroke-width="1"/>
<rect x="2712" y="2048.04" width="1" height="31.01" fill="#00ff00"/>
<rect x="2706.5" y="2053.5" width="12" height="1" fill="#008000" stroke="#00ff00" stroke-width="1"/>
<rect x="2729" y="2047.16" width="1" height="14.63" fill="#ff0000"/>
<rect x="2723" y="2053.01" width="13" height="8.78" fill="#ff0000" rx="1"/>
<rect x="2746" y="2022.88" width="1" height="39.5" fill="#00ff00"/>
<rect x="2740.5" y="2036.5" width="12" height="24" fill="#008000" stroke="#00ff00" stroke-width="1"/>
<rect x="2763" y="2001.23" width="1" height="36.28" fill="#00ff00"/>
<rect x="2757.5" y="2011.5" width="12" height="24" fill="#008000" stroke="#00ff00" stroke-width="1"/>
<rect x="2780" y="1978.12" width="1" height="33.94" fill="#00ff00"/>
<rect x="2774.5" y="1991.5" width="12" height="19" fill="#008000" stroke="#00ff00" stroke-width="1"/>
<rect x="2797" y="1972.26" width="1" height="53.54" fill="#ff0000"/>
<rect x="2791" y="1991.28" width="13" height="32.77" fill="#ff0000" rx="1"/>
<rect x="2814" y="2010.01" width="1" height="47.98" fill="#ff0000"/>
<rect x="2808" y="2023.17" width="13" height="33.65" fill="#ff0000" rx="1"/>
<rect x="2831" y="2033.12" width="1" height="40.96" fill="#00ff00"/>
<rect x="2825.5" y="2043.5" width="12" height="12" fill="#008000" stroke="#00ff00" stroke-width="1"/>
<rect x="2848" y="1984.84" width="1" height="59.1" fill="#00ff00"/>
<rect x="2842.5" y="1986.5" width="12" height="56" fill="#008000" stroke="#00ff00" stroke-width="1"/>
<rect x="2865" y="1982.5" width="1" height="52.08" fill="#ff0000"/>
<rect x="2859" y="1986.31" width="13" height="42.42" fill="#ff0000" rx="1"/>
<rect x="2882" y="1984.26" width="1" height="91.28" fill="#00ff00"/>
<rect x="2876.5" y="1997.5" width="12" height="31" fill="#008000" stroke="#00ff00" stroke-width="1"/>
<rect x="2899" y="1956.17" width="1" height="41.84" fill="#00ff00"/>
<rect x="2893.5" y="1959.5" width="12" height="36" fill="#008000" stroke="#00ff00" stroke-width="1"/>
<rect x="2916" y="1949.15" width="1" height="16.68" fill="#00ff00"/>
<rect x="2910.5" y="1959.5" width="12" height="1" fill="#008000" stroke="#00ff00" stroke-width="1"/>
<rect x="2933" y="1959.1" width="1" height="16.97" fill="#ff0000"/>
<rect x="2927" y="1959.1" width="13" height="16.68" fill="#ff0000" rx="1"/>
<rect x="2950" y="1949.15" width="1" height="37.74" fill="#ff0000"/>
<rect x="2944" y="1975.19" width="13" height="6.73" fill="#ff0000" rx="1"/>
<rect x="2967" y="1978.99" width="1" height="24.87" fill="#ff0000"/>
<rect x="2961" y="1981.33" width="13" height="21.65" fill="#ff0000" rx="1"/>
<rect x="2984" y="1994.21" width="1" height="26.33" fill="#ff0000"/>
<rect x="2978" y="2002.4" width="13" height="13.75" fill="#ff0000" rx="1"/>
<rect x="3001" y="2012.05" width="1" height="16.09" fill="#ff0000"/>
<rect x="2995" y="2014.98" width="13" height="13.17" fill="#ff0000" rx="1"/>
<rect x="3018" y="1951.2" width="1" height="78.41" fill="#00ff00"/>
<rect x="3012.5" y="1956.5" width="12" height="71" fill="#008000" stroke="#00ff00" stroke-width="1"/>
<rect x="3035" y="1953.54" width="1" height="14.34" fill="#ff0000"/>
<rect x="3029" y="1955.59" width="13" height="8.19" fill="#ff0000" rx="1"/>
<rect x="3052" y="1955" width="1" height="12.29" fill="#ff0000"/>
<rect x="3046" y="1963.19" width="13" height="3.8" fill="#ff0000" rx="1"/>
<rect x="3069" y="1961.44" width="1" height="127.56" fill="#ff0000"/>
<rect x="3063" y="1966.12" width="13" height="122.88" fill="#ff0000" rx="1"/>
<rect x="3086" y="2077" width="1" height="57.05" fill="#ff0000"/>
<rect x="3080" y="2088.12" width="13" height="41.54" fill="#ff0000" rx="1"/>
<rect x="3103" y="2125.28" width="1" height="34.52" fill="#ff0000"/>
<rect x="3097" y="2129.08" width="13" height="19.02" fill="#ff0000" rx="1"/>
<rect x="3120" y="2144.29" width="1" height="26.33" fill="#ff0000"/>
<rect x="3114" y="2147.22" width="13" height="8.48" fill="#ff0000" rx="1"/>
<rect x="3137" y="2153.95" width="1" height="30.72" fill="#ff0000"/>
<rect x="3131" y="2155.12" width="13" height="9.65" fill="#ff0000" rx="1"/>
<rect x="3154" y="2154.53" width="1" height="38.03" fill="#ff0000"/>
<rect x="3148" y="2164.19" width="13" height="27.5" fill="#ff0000" rx="1"/>
<rect x="3171" y="2184.38" width="1" height="19.89" fill="#ff0000"/>
<rect x="3165" y="2191.11" width="13" height="11.7" fill="#ff0000" rx="1"/>
<rect x="3188" y="2198.42" width="1" height="27.21" fill="#ff0000"/>
<rect x="3182" y="2202.22" width="13" height="21.36" fill="#ff0000" rx="1"/>
<rect x="3205" y="2219.49" width="1" height="45.35" fill="#ff0000"/>
<rect x="3199" y="2223" width="13" height="34.52" fill="#ff0000" rx="1"/>
<rect x="3222" y="2214.51" width="1" height="50.32" fill="#00ff00"/>
<rect x="3216.5" y="2229.5" width="12" height="27" fill="#008000" stroke="#00ff00" stroke-width="1"/>
<rect x="3239" y="2223.29" width="1" height="34.23" fill="#ff0000"/>
<rect x="3233" y="2228.85" width="13" height="25.75" fill="#ff0000" rx="1"/>
<rect x="3256" y="2244.35" width="1" height="29.26" fill="#ff0000"/>
<rect x="3250" y="2254.3" width="13" height="7.61" fill="#ff0000" rx="1"/>
<rect x="3273" y="2232.94" width="1" height="41.54" fill="#ff0000"/>
<rect x="3267" y="2261.03" width="13" height="9.65" fill="#ff0000" rx="1"/>
<rect x="3290" y="2246.11" width="1" height="24.87" fill="#00ff00"/>
<rect x="3284.5" y="2250.5" width="12" height="19" fill="#008000" stroke="#00ff00" stroke-width="1"/>
<rect x="3307" y="2197.25" width="1" height="55.59" fill="#00ff00"/>
<rect x="3301.5" y="2209.5" width="12" height="40" fill="#008000" stroke="#00ff00" stroke-width="1"/>
<rect x="3324" y="2182.62" width="1" height="27.5" fill="#00ff00"/>
<rect x="3318.5" y="2198.5" width="12" height="10" fill="#008000" stroke="#00ff00" stroke-width="1"/>
<rect x="3341" y="2162.43" width="1" height="40.37" fill="#00ff00"/>
<rect x="3335.5" y="2166.5" width="12" height="31" fill="#008000" stroke="#00ff00" stroke-width="1"/>
<rect x="3358" y="2147.22" width="1" height="58.51" fill="#00ff00"/>
<rect x="3352.5" y="2157.5" width="12" height="9" fill="#008000" stroke="#00ff00" stroke-width="1"/>
<rect x="3375" y="2151" width="1" height="28.5" fill="#ff0000"/>
<rect x="3369" y="2156" width="13" height="23.5" fill="#ff0000" rx="1"/>
<polyline points="1947.55,2125.86 1964.52,2129.08 1981.49,2135.52 1998.46,2147.22 2015.43,2164.77 2032.4,2180.87 2049.37,2191.98 2066.34,2197.54 2083.31,2199.01 2100.28,2200.76 2117.24,2201.64" fill="none" stroke="#ff0000" stroke-width="2" stroke-linejoin="round"/>
<polyline points="2117.24,2201.64 2134.51,2199.88 2151.47,2196.08 2168.44,2194.91" fill="none" stroke="#00ff00" stroke-width="2" stroke-linejoin="round"/>
<polyline points="2168.44,2194.91 2185.41,2198.42 2202.38,2200.18" fill="none" stroke="#ff0000" stroke-width="2" stroke-linejoin="round"/>
<polyline points="2202.38,2200.18 2219.35,2197.83 2236.32,2193.15 2253.29,2189.64 2270.26,2186.13 2287.23,2181.74 2304.49,2178.82 2321.46,2172.09 2338.43,2165.65 2355.39,2158.34 2372.36,2151.02 2389.33,2145.17 2406.3,2137.86 2423.56,2130.25 2440.53,2125.28 2457.5,2121.77 2474.47,2120.01 2491.44,2117.96" fill="none" stroke="#00ff00" stroke-width="2" stroke-linejoin="round"/>
<polyline points="2491.44,2117.96 2508.41,2118.84 2525.38,2122.35" fill="none" stroke="#ff0000" stroke-width="2" stroke-linejoin="round"/>
<polyline points="2525.38,2122.35 2542.35,2119.43 2559.32,2119.43 2576.28,2117.96 2593.25,2117.09 2610.51,2115.04 2627.48,2110.06 2644.45,2106.26" fill="none" stroke="#00ff00" stroke-width="2" stroke-linejoin="round"/>
<polyline points="2644.15,2106.26 2661.41,2101.87 2678.38,2093.68 2695.35,2086.37 2712.32,2081.98 2729.29,2077.88 2746.26,2071.15 2763.52,2060.91 2780.49,2049.21 2797.45,2041.9" fill="none" stroke="#00ff00" stroke-width="2" stroke-linejoin="round"/>
<polyline points="2797.45,2041.9 2814.42,2041.9 2831.39,2043.94" fill="none" stroke="#ff0000" stroke-width="2" stroke-linejoin="round"/>
<polyline points="2831.39,2043.94 2848.36,2036.92 2865.33,2033.12 2882.3,2029.61 2899.27,2020.54 2916.24,2008.84 2933.21,2001.52 2950.47,1996.55 2967.44,1996.55" fill="none" stroke="#00ff00" stroke-width="2" stroke-linejoin="round"/>
<polyline points="2967.44,1996.55 2984.41,1998.89 3001.38,2002.98" fill="none" stroke="#ff0000" stroke-width="2" stroke-linejoin="round"/>
<polyline points="3001.38,2002.98 3018.34,1998.01 3035.31,1992.16 3052.28,1986.31" fill="none" stroke="#00ff00" stroke-width="2" stroke-linejoin="round"/>
<polyline points="3052.28,1986.31 3069.25,1996.55 3086.22,2017.03 3103.48,2038.97 3120.45,2059.45 3137.42,2077.88 3154.39,2096.02 3171.36,2115.04 3188.33,2134.06 3205.3,2152.19 3222.26,2167.7 3239.23,2180.28 3256.2,2192.57 3273.46,2205.73 3290.43,2216.85 3307.4,2218.31" fill="none" stroke="#ff0000" stroke-width="2" stroke-linejoin="round"/>
<polyline points="3307.4,2218.31 3324.37,2213.05 3341.34,2205.73 3358.31,2199.88 3375.5,2194.5" fill="none" stroke="#00ff00" stroke-width="2" stroke-linejoin="round"/>
<text x="1940.5" y="1930.8" font-size="27" fill="#f0f0f0" textLength="98" lengthAdjust="spacing">Volume</text>
<text x="2054.5" y="1930.8" font-size="27" fill="#464646" textLength="158.5" lengthAdjust="spacing">Volume: 244</text>
<text x="2230" y="1930.8" font-size="27" fill="#f0f0f0" textLength="384.5" lengthAdjust="spacing">Moving Average - Exponential</text>
<rect x="3671" y="148" width="1" height="2136" fill="#5a5a5a"/>
<rect x="3672" y="210" width="4" height="1" fill="#707070"/>
<text x="3678" y="219.1" font-size="26.5" fill="#dcdcdc" textLength="118.5" lengthAdjust="spacing">18780.00</text>
<rect x="3672" y="315" width="4" height="1" fill="#707070"/>
<text x="3678" y="324.2" font-size="26.5" fill="#dcdcdc" textLength="118.5" lengthAdjust="spacing">18760.00</text>
<rect x="3672" y="421" width="4" height="1" fill="#707070"/>
<text x="3678" y="429.3" font-size="26.5" fill="#dcdcdc" textLength="118.5" lengthAdjust="spacing">18740.00</text>
<rect x="3672" y="526" width="4" height="1" fill="#707070"/>
<text x="3678" y="534.4" font-size="26.5" fill="#dcdcdc" textLength="118.5" lengthAdjust="spacing">18720.00</text>
<rect x="3672" y="631" width="4" height="1" fill="#707070"/>
<text x="3678" y="639.5" font-size="26.5" fill="#dcdcdc" textLength="118.5" lengthAdjust="spacing">18700.00</text>
<rect x="3672" y="736" width="4" height="1" fill="#707070"/>
<text x="3678" y="744.6" font-size="26.5" fill="#dcdcdc" textLength="118.5" lengthAdjust="spacing">18680.00</text>
<rect x="3672" y="841" width="4" height="1" fill="#707070"/>
<text x="3678" y="849.7" font-size="26.5" fill="#dcdcdc" textLength="118.5" lengthAdjust="spacing">18660.00</text>
<rect x="3672" y="946" width="4" height="1" fill="#707070"/>
<text x="3678" y="954.8" font-size="26.5" fill="#dcdcdc" textLength="118.5" lengthAdjust="spacing">18640.00</text>
<rect x="3672" y="1051" width="4" height="1" fill="#707070"/>
<text x="3678" y="1059.9" font-size="26.5" fill="#dcdcdc" textLength="118.5" lengthAdjust="spacing">18620.00</text>
<rect x="3672" y="1156" width="4" height="1" fill="#707070"/>
<text x="3678" y="1165" font-size="26.5" fill="#dcdcdc" textLength="118.5" lengthAdjust="spacing">18600.00</text>
<rect x="3672" y="1261" width="4" height="1" fill="#707070"/>
<text x="3678" y="1270.1" font-size="26.5" fill="#dcdcdc" textLength="118.5" lengthAdjust="spacing">18580.00</text>
<rect x="3672" y="1366" width="4" height="1" fill="#707070"/>
<text x="3678" y="1375.2" font-size="26.5" fill="#dcdcdc" textLength="118.5" lengthAdjust="spacing">18560.00</text>
<rect x="3672" y="1471" width="4" height="1" fill="#707070"/>
<text x="3678" y="1480.3" font-size="26.5" fill="#dcdcdc" textLength="118.5" lengthAdjust="spacing">18540.00</text>
<rect x="3672" y="1577" width="4" height="1" fill="#707070"/>
<text x="3678" y="1585.4" font-size="26.5" fill="#dcdcdc" textLength="118.5" lengthAdjust="spacing">18520.00</text>
<rect x="3672" y="1682" width="4" height="1" fill="#707070"/>
<text x="3678" y="1690.5" font-size="26.5" fill="#dcdcdc" textLength="118.5" lengthAdjust="spacing">18500.00</text>
<rect x="3672" y="1787" width="4" height="1" fill="#707070"/>
<text x="3678" y="1795.6" font-size="26.5" fill="#dcdcdc" textLength="118.5" lengthAdjust="spacing">18480.00</text>
<rect x="3672" y="1892" width="4" height="1" fill="#707070"/>
<text x="3678" y="1900.7" font-size="26.5" fill="#dcdcdc" textLength="118.5" lengthAdjust="spacing">18460.00</text>
<rect x="3676" y="553" width="127" height="37" fill="#fff"/>
<svg x="3676" y="571" width="127" height="19" viewBox="3676 571 127 19" overflow="hidden">
<text x="3678" y="578" font-size="26.5" fill="#000" textLength="119" lengthAdjust="spacing">18714.75</text>
</svg>
<rect x="3676" y="535" width="124" height="36" fill="#fff"/>
<text x="3678" y="561" font-size="26.5" fill="#000" textLength="118.5" lengthAdjust="spacing">18714.75</text>
<text x="3609" y="218" font-size="26.5" fill="#ffb000" textLength="52" lengthAdjust="spacing">VAH</text>
<text x="3591.5" y="506.5" font-size="26.5" fill="#5ce6e6" textLength="71" lengthAdjust="spacing">dPOC</text>
<text x="3591.5" y="917" font-size="26.5" fill="#8c8c8c" textLength="71" lengthAdjust="spacing">nPOC</text>
<text x="3614" y="1042.5" font-size="26.5" fill="#ffb000" textLength="47" lengthAdjust="spacing">VAL</text>
<rect x="3549" y="1389" width="85" height="2" fill="#00ff00"/>
<text x="3638" y="1395" font-size="26.5" fill="#f0f0f0" textLength="30" lengthAdjust="spacing">80</text>
<text x="3608" y="2185.5" font-size="26.5" fill="#ff0000" textLength="52" lengthAdjust="spacing">CVD</text>
<rect x="3676" y="2160" width="67" height="38" fill="#ff0000"/>
<text x="3677" y="2189.5" font-size="26.5" fill="#000" textLength="64" lengthAdjust="spacing">2150</text>
<text x="3676" y="2027" font-size="26.5" fill="#dcdcdc" textLength="46" lengthAdjust="spacing">800</text>
<rect x="3672" y="2017" width="4" height="1" fill="#707070"/>
<text x="3676" y="2108.7" font-size="26.5" fill="#dcdcdc" textLength="46" lengthAdjust="spacing">600</text>
<rect x="3672" y="2099" width="4" height="1" fill="#707070"/>
<text x="3676" y="2273" font-size="26.5" fill="#dcdcdc" textLength="46" lengthAdjust="spacing">200</text>
<rect x="3672" y="2263" width="4" height="1" fill="#707070"/>
<rect x="1935" y="2283" width="1890" height="42" fill="#000"/>
<rect x="1935" y="2282" width="1737" height="1" fill="#505050"/>
<rect x="1947" y="2287" width="140" height="38" fill="#e8e8e8"/>
<text x="1948" y="2313" font-size="26.5" fill="#000" textLength="137" lengthAdjust="spacing">2025-4-10</text>
<text x="2112.9" y="2313" font-size="26.5" fill="#f0f0f0" textLength="111" lengthAdjust="spacing">14:14:30</text>
<text x="2249" y="2313" font-size="26.5" fill="#f0f0f0" textLength="111" lengthAdjust="spacing">14:16:30</text>
<text x="2385" y="2313" font-size="26.5" fill="#f0f0f0" textLength="111" lengthAdjust="spacing">14:18:30</text>
<text x="2521.1" y="2313" font-size="26.5" fill="#f0f0f0" textLength="111" lengthAdjust="spacing">14:20:30</text>
<text x="2657.2" y="2313" font-size="26.5" fill="#f0f0f0" textLength="111" lengthAdjust="spacing">14:22:30</text>
<text x="3065" y="2313" font-size="26.5" fill="#f0f0f0" textLength="111" lengthAdjust="spacing">14:28:30</text>
<text x="3201.1" y="2313" font-size="26.5" fill="#f0f0f0" textLength="111" lengthAdjust="spacing">14:30:30</text>
<text x="3337.2" y="2313" font-size="26.5" fill="#f0f0f0" textLength="111" lengthAdjust="spacing">14:32:30</text>
<text x="3473.3" y="2313" font-size="26.5" fill="#f0f0f0" textLength="111" lengthAdjust="spacing">14:34:30</text>
<rect x="2032" y="2283" width="1" height="3" fill="#707070"/>
<rect x="2168" y="2283" width="1" height="3" fill="#707070"/>
<rect x="2304" y="2283" width="1" height="3" fill="#707070"/>
<rect x="2441" y="2283" width="1" height="3" fill="#707070"/>
<rect x="2577" y="2283" width="1" height="3" fill="#707070"/>
<rect x="2713" y="2283" width="1" height="3" fill="#707070"/>
<rect x="2849" y="2283" width="1" height="3" fill="#707070"/>
<rect x="2985" y="2283" width="1" height="3" fill="#707070"/>
<rect x="3121" y="2283" width="1" height="3" fill="#707070"/>
<rect x="3257" y="2283" width="1" height="3" fill="#707070"/>
<rect x="3393" y="2283" width="1" height="3" fill="#707070"/>
<rect x="3529" y="2283" width="1" height="3" fill="#707070"/>
<rect x="3665" y="2283" width="1" height="3" fill="#707070"/>
<rect x="2699" y="2288" width="366" height="37" fill="#fff"/>
<text x="2713" y="2313" font-size="26.5" fill="#000" textLength="337" lengthAdjust="spacing">Thu 2025-04-10  14:25:00</text>
<rect x="3753" y="2286" width="71" height="38" fill="#00c000"/>
<text x="3761" y="2313" font-size="26.5" fill="#ffeeff" textLength="55" lengthAdjust="spacing">16 E</text>
<rect x="1935" y="103" width="1890" height="45" fill="#232323"/>
<rect x="1936.5" y="104.5" width="32" height="43" fill="#464646" stroke="#747474" stroke-width="1"/>
<text x="1940.03" y="134.2" font-size="22.5" fill="#fff" textLength="24.25" lengthAdjust="spacingAndGlyphs">Ptr</text>
<rect x="1970.5" y="104.5" width="42" height="43" fill="#464646" stroke="#747474" stroke-width="1"/>
<text x="1973.34" y="134.2" font-size="22.5" fill="#fff" textLength="36.23" lengthAdjust="spacingAndGlyphs">CVT</text>
<rect x="2015.5" y="104.5" width="72" height="43" fill="#464646" stroke="#747474" stroke-width="1"/>
<text x="2018.93" y="134.2" font-size="22.5" fill="#fff" textLength="64.58" lengthAdjust="spacingAndGlyphs">ExtLine</text>
<rect x="2089.5" y="104.5" width="73" height="43" fill="#464646" stroke="#747474" stroke-width="1"/>
<text x="2092.86" y="134.2" font-size="22.5" fill="#fff" textLength="65.75" lengthAdjust="spacingAndGlyphs">ParLine</text>
<rect x="2165.5" y="104.5" width="73" height="43" fill="#464646" stroke="#747474" stroke-width="1"/>
<text x="2168.83" y="134.2" font-size="22.5" fill="#fff" textLength="66.62" lengthAdjust="spacingAndGlyphs">HorRay</text>
<rect x="2241.5" y="104.5" width="82" height="43" fill="#464646" stroke="#747474" stroke-width="1"/>
<text x="2244.81" y="134.2" font-size="22.5" fill="#fff" textLength="75.1" lengthAdjust="spacingAndGlyphs">PrcRetrc</text>
<rect x="2326.5" y="104.5" width="75" height="43" fill="#464646" stroke="#747474" stroke-width="1"/>
<text x="2329.84" y="134.2" font-size="22.5" fill="#fff" textLength="66.92" lengthAdjust="spacingAndGlyphs">ExtRect</text>
<rect x="2403.5" y="104.5" width="56" height="43" fill="#464646" stroke="#747474" stroke-width="1"/>
<text x="2407.57" y="135.5" font-size="28" fill="#fff" textLength="47.63" lengthAdjust="spacingAndGlyphs">DVP</text>
<rect x="2461.5" y="104.5" width="56" height="43" fill="#8a8a8a" stroke="#747474" stroke-width="1"/>
<text x="2466.01" y="134.2" font-size="22.5" fill="#fff" textLength="47.63" lengthAdjust="spacingAndGlyphs">Hand</text>
<rect x="2520.5" y="104.5" width="32" height="43" fill="#464646" stroke="#747474" stroke-width="1"/>
<text x="2523.58" y="134.2" font-size="22.5" fill="#fff" textLength="24.55" lengthAdjust="spacingAndGlyphs">RR</text>
<rect x="2558.5" y="104.5" width="59" height="43" fill="#464646" stroke="#747474" stroke-width="1"/>
<text x="2561.46" y="134.2" font-size="22.5" fill="#fff" textLength="53.18" lengthAdjust="spacingAndGlyphs">GEOC</text>
<rect x="2620.5" y="104.5" width="45" height="43" fill="#464646" stroke="#747474" stroke-width="1"/>
<text x="2623.7" y="134.2" font-size="22.5" fill="#fff" textLength="38.57" lengthAdjust="spacingAndGlyphs">HAS</text>
<rect x="2668.5" y="104.5" width="44" height="43" fill="#464646" stroke="#747474" stroke-width="1"/>
<text x="2671.62" y="134.2" font-size="22.5" fill="#fff" textLength="36.82" lengthAdjust="spacingAndGlyphs">UAS</text>
<rect x="2715.5" y="104.5" width="41" height="43" fill="#464646" stroke="#747474" stroke-width="1"/>
<text x="2718.38" y="134.2" font-size="22.5" fill="#fff" textLength="35.07" lengthAdjust="spacingAndGlyphs">ELD</text>
<rect x="2759.5" y="104.5" width="36" height="43" fill="#8a8a8a" stroke="#747474" stroke-width="1"/>
<rect x="2800.5" y="104.5" width="43" height="43" fill="#464646" stroke="#747474" stroke-width="1"/>
<text x="2804.29" y="134.2" font-size="22.5" fill="#fff" textLength="36.23" lengthAdjust="spacingAndGlyphs">SOF</text>
<rect x="2846.5" y="104.5" width="63" height="43" fill="#62b4e6" stroke="#747474" stroke-width="1"/>
<text x="2849.87" y="135.5" font-size="26" fill="#fff" textLength="54.06" lengthAdjust="spacingAndGlyphs">Pos3</text>
<rect x="2911.5" y="104.5" width="62" height="43" fill="#b800ff" stroke="#747474" stroke-width="1"/>
<text x="2915.03" y="135.5" font-size="26" fill="#fff" textLength="53.47" lengthAdjust="spacingAndGlyphs">Pos2</text>
<rect x="2976.5" y="104.5" width="63" height="43" fill="#ff0a14" stroke="#747474" stroke-width="1"/>
<text x="2979.91" y="135.5" font-size="26" fill="#fff" textLength="52.6" lengthAdjust="spacingAndGlyphs">Pos1</text>
<path d="M2781,121 a7.5,7.5 0 1 0 3.5,12" fill="none" stroke="#e8400c" stroke-width="4.5"/>
<circle cx="2781.5" cy="120.5" r="2.2" fill="#fff" stroke="#222" stroke-width="0.8"/><circle cx="2785" cy="133" r="2.2" fill="#fff" stroke="#222" stroke-width="0.8"/>
<text x="2785" y="126" font-size="14" fill="#000" font-weight="bold">c</text>
<rect x="2554" y="103" width="2" height="45" fill="#111"/>
<rect x="2797" y="103" width="2" height="45" fill="#111"/></g>
<g id="dialog-replay"><svg x="0" y="1086" width="631" height="474" viewBox="0 1086 631 474" overflow="hidden"><g filter="url(#shadow)">
<rect x="164.5" y="1102" width="1335.5" height="440" rx="15" fill="#c4c4cc"/>
</g>
<path d="M164.5,1161 V1117 a15,15 0 0 1 15,-15 H1500 V1161 Z" fill="url(#rtg)"/>
<rect x="164.5" y="1102" width="1335.5" height="440" rx="15" fill="none" stroke="#8a8b96" stroke-width="1.5"/>
<text x="178" y="1143" font-size="32" fill="#8a8a8a" textLength="520.33" lengthAdjust="spacingAndGlyphs">Replay 1.00X: ESM25_FUT_CME [CBV]</text>
<text x="181.5" y="1204.5" font-size="27" fill="#2d2b3f">Charts to Replay:</text>
<rect x="182" y="1213.5" width="918" height="1" fill="#6e6e7a"/>
<rect x="182" y="1213.5" width="1" height="36.5" fill="#6e6e7a"/>
<rect x="182" y="1249" width="918" height="1" fill="#ececf0"/>
<rect x="1099" y="1213.5" width="1" height="36.5" fill="#ececf0"/>
<text x="185" y="1242" font-size="27" fill="#2d2b3f">All Charts in Chartbook</text>
<rect x="457.5" y="1280" width="21" height="21" fill="#c8c8d0"/>
<rect x="457.5" y="1280" width="21" height="1.5" fill="#6e6e7a"/>
<rect x="457.5" y="1280" width="1.5" height="21" fill="#6e6e7a"/>
<rect x="457.5" y="1299.5" width="21" height="1.5" fill="#f0f0f4"/>
<rect x="477" y="1280" width="1.5" height="21" fill="#f0f0f4"/>
<text x="526.5" y="1297" font-size="27" fill="#2d2b3f">Date (YYYY-MM-DD):</text>
<text x="193" y="1347" font-size="27" fill="#2d2b3f">Jump:</text>
<text x="198" y="1378.5" font-size="27" fill="#2d2b3f">Method:</text>
<text x="569.5" y="1381.5" font-size="27" fill="#2d2b3f">Unit:</text>
<rect x="198" y="1392.5" width="349.5" height="121" fill="#c4c4cc"/>
<rect x="199" y="1393.5" width="314" height="31" fill="#9a9aae"/>
<svg x="198" y="1392.5" width="315" height="121" viewBox="198 1392.5 315 121" overflow="hidden">
<text x="202" y="1419.5" font-size="27" fill="#14121e">By Time (hh:mm:ss.ms)</text>
<text x="202" y="1450" font-size="27" fill="#2d2b3f">By Number of Trades</text>
<text x="202" y="1481" font-size="27" fill="#2d2b3f">To Next Bar</text>
<text x="202" y="1512" font-size="27" fill="#2d2b3f">To Next Time Increment (hh:mm:ss.ms)</text>
</svg>
<rect x="513" y="1393.5" width="34" height="120" fill="#bcbcc4"/>
<rect x="521" y="1427" width="19" height="38.5" fill="#7a7d9a"/>
<rect x="198" y="1392.5" width="349.5" height="1" fill="#6e6e7a"/>
<rect x="198" y="1392.5" width="1" height="121" fill="#6e6e7a"/>
<rect x="198" y="1512.5" width="349.5" height="1" fill="#ececf0"/>
<rect x="546.5" y="1392.5" width="1" height="121" fill="#ececf0"/>
<rect x="561.5" y="1396" width="198.5" height="1" fill="#6e6e7a"/>
<rect x="561.5" y="1396" width="1" height="51.5" fill="#6e6e7a"/>
<rect x="561.5" y="1446.5" width="198.5" height="1" fill="#ececf0"/>
<rect x="759" y="1396" width="1" height="51.5" fill="#ececf0"/>
<text x="565" y="1423" font-size="27" fill="#2d2b3f">00:00:00.000</text>
<rect x="561.5" y="1458.5" width="59.5" height="1" fill="#e6e6ea"/>
<rect x="561.5" y="1458.5" width="1" height="52.5" fill="#e6e6ea"/>
<rect x="561.5" y="1510" width="59.5" height="1" fill="#6e6e7a"/>
<rect x="620" y="1458.5" width="1" height="52.5" fill="#6e6e7a"/>
<text x="591.25" y="1494.47" font-size="27" fill="#2d2b3f" text-anchor="middle">&lt;&lt;</text></svg></g>
<g id="dialog-global-pl"><g filter="url(#shadow)">
<rect x="13" y="89" width="1568" height="997" rx="15" fill="#c4c4cc"/>
</g>
<path d="M13,148 V104 a15,15 0 0 1 15,-15 H1566 a15,15 0 0 1 15,15 V148 Z" fill="#f3f3f3"/>
<rect x="13.5" y="89.5" width="1567" height="996" rx="15" fill="none" stroke="#9a9ba6" stroke-width="1"/>
<text x="27" y="130.5" font-size="33" fill="#8c8c8c" textLength="464" lengthAdjust="spacingAndGlyphs">Global Profit / Loss Management</text>
<circle cx="1544.5" cy="116.5" r="12.5" fill="#f5b183" stroke="#d89a6e" stroke-width="1"/>
<line x1="1538.5" y1="110.5" x2="1550.5" y2="122.5" stroke="#d08a5a" stroke-width="2" stroke-linecap="round"/>
<line x1="1538.5" y1="122.5" x2="1550.5" y2="110.5" stroke="#d08a5a" stroke-width="2" stroke-linecap="round"/>
<text x="40.5" y="201.5" font-size="27" fill="#2d2b3f">Daily Net Profit Management</text>
<rect x="51" y="223" width="21" height="21" fill="#c8c8d0"/>
<rect x="51" y="223" width="21" height="1.5" fill="#6e6e7a"/>
<rect x="51" y="223" width="1.5" height="21" fill="#6e6e7a"/>
<rect x="51" y="242.5" width="21" height="1.5" fill="#f0f0f4"/>
<rect x="70.5" y="223" width="1.5" height="21" fill="#f0f0f4"/>
<polyline points="56,232.5 60,237 67.5,228.5" fill="none" stroke="#2d2b3f" stroke-width="3.6"/>
<text x="84" y="243.5" font-size="27" fill="#2d2b3f">Flatten Positions When Profit Rules Met</text>
<text x="374" y="298" font-size="27" fill="#2d2b3f" textLength="239.5" lengthAdjust="spacingAndGlyphs">Profit Trigger Value:</text>
<rect x="634" y="265" width="158" height="1" fill="#6e6e7a"/>
<rect x="634" y="265" width="1" height="45" fill="#6e6e7a"/>
<rect x="634" y="309" width="158" height="1" fill="#ececf0"/>
<rect x="791" y="265" width="1" height="45" fill="#ececf0"/>
<text x="638.5" y="292.5" font-size="27" fill="#2d2b3f">121.00</text>
<text x="61" y="360" font-size="27" fill="#2d2b3f" textLength="552" lengthAdjust="spacingAndGlyphs">Profit Value After Trigger To Flatten Positions:</text>
<rect x="634" y="327" width="158" height="1" fill="#6e6e7a"/>
<rect x="634" y="327" width="1" height="45" fill="#6e6e7a"/>
<rect x="634" y="371" width="158" height="1" fill="#ececf0"/>
<rect x="791" y="327" width="1" height="45" fill="#ececf0"/>
<text x="638.5" y="354.5" font-size="27" fill="#2d2b3f">120.00</text>
<text x="73" y="418" font-size="27" fill="#2d2b3f">Trail Daily Net Profit</text>
<rect x="95" y="440.5" width="21" height="21" fill="#c8c8d0"/>
<rect x="95" y="440.5" width="21" height="1.5" fill="#6e6e7a"/>
<rect x="95" y="440.5" width="1.5" height="21" fill="#6e6e7a"/>
<rect x="95" y="460" width="21" height="1.5" fill="#f0f0f4"/>
<rect x="114.5" y="440.5" width="1.5" height="21" fill="#f0f0f4"/>
<text x="127.5" y="459.5" font-size="27" fill="#2d2b3f">Enable</text>
<text x="93.5" y="511" font-size="27" fill="#2d2b3f" textLength="588" lengthAdjust="spacingAndGlyphs">After Trigger When Daily Net Profit Increases By:</text>
<rect x="94" y="525" width="286" height="1" fill="#6e6e7a"/>
<rect x="94" y="525" width="1" height="45" fill="#6e6e7a"/>
<rect x="94" y="569" width="286" height="1" fill="#ececf0"/>
<rect x="379" y="525" width="1" height="45" fill="#ececf0"/>
<text x="97" y="552.5" font-size="27" fill="#2d2b3f">0.00</text>
<text x="93.5" y="612" font-size="27" fill="#2d2b3f" textLength="694" lengthAdjust="spacingAndGlyphs">Increase Profit Value After Trigger to Flatten Positions By:</text>
<rect x="94" y="626" width="286" height="1" fill="#6e6e7a"/>
<rect x="94" y="626" width="1" height="45" fill="#6e6e7a"/>
<rect x="94" y="670" width="286" height="1" fill="#ececf0"/>
<rect x="379" y="626" width="1" height="45" fill="#ececf0"/>
<text x="97" y="654" font-size="27" fill="#2d2b3f">0.00</text>
<text x="61.5" y="751.5" font-size="27" fill="#2d2b3f">Status:</text>
<text x="395.5" y="740" font-size="27" fill="#2d2b3f" textLength="416.5" lengthAdjust="spacingAndGlyphs">All Values are in Account Currency</text>
<text x="58.5" y="791.5" font-size="27" fill="#2d2b3f">Waiting for initial profit trigger of 121.00C.</text>
<text x="58.5" y="822" font-size="27" fill="#2d2b3f" textLength="313.5" lengthAdjust="spacingAndGlyphs">Current Net P/L = 99.36C.</text>
<text x="58.5" y="853" font-size="27" fill="#2d2b3f">Account: Sim1.</text>
<text x="45.5" y="937.5" font-size="27" fill="#2d2b3f">Start of Day:</text>
<rect x="246" y="905.5" width="246" height="1" fill="#6e6e7a"/>
<rect x="246" y="905.5" width="1" height="44.5" fill="#6e6e7a"/>
<rect x="246" y="949" width="246" height="1" fill="#ececf0"/>
<rect x="491" y="905.5" width="1" height="44.5" fill="#ececf0"/>
<text x="248.5" y="933" font-size="27" fill="#2d2b3f">00:00:00</text>
<rect x="43" y="967" width="21" height="21" fill="#c8c8d0"/>
<rect x="43" y="967" width="21" height="1.5" fill="#6e6e7a"/>
<rect x="43" y="967" width="1.5" height="21" fill="#6e6e7a"/>
<rect x="43" y="986.5" width="21" height="1.5" fill="#f0f0f4"/>
<rect x="62.5" y="967" width="1.5" height="21" fill="#f0f0f4"/>
<polyline points="48,976.5 52,981 59.5,972.5" fill="none" stroke="#2d2b3f" stroke-width="3.6"/>
<text x="75" y="987" font-size="27" fill="#2d2b3f">Support Replaying Charts</text>
<rect x="41.5" y="1005" width="175.5" height="1" fill="#e6e6ea"/>
<rect x="41.5" y="1005" width="1" height="53" fill="#e6e6ea"/>
<rect x="41.5" y="1057" width="175.5" height="1" fill="#6e6e7a"/>
<rect x="216" y="1005" width="1" height="53" fill="#6e6e7a"/>
<text x="129.25" y="1041.22" font-size="27" fill="#2d2b3f" text-anchor="middle">OK</text>
<rect x="298" y="1005" width="175" height="1" fill="#e6e6ea"/>
<rect x="298" y="1005" width="1" height="53" fill="#e6e6ea"/>
<rect x="298" y="1057" width="175" height="1" fill="#6e6e7a"/>
<rect x="472" y="1005" width="1" height="53" fill="#6e6e7a"/>
<text x="385.5" y="1041.22" font-size="27" fill="#2d2b3f" text-anchor="middle">Cancel</text>
<rect x="553.5" y="1005.5" width="175.5" height="1" fill="#e6e6ea"/>
<rect x="553.5" y="1005.5" width="1" height="48.5" fill="#e6e6ea"/>
<rect x="553.5" y="1053" width="175.5" height="1" fill="#6e6e7a"/>
<rect x="728" y="1005.5" width="1" height="48.5" fill="#6e6e7a"/>
<text x="641.25" y="1039.47" font-size="27" fill="#2d2b3f" text-anchor="middle">Help</text>
<text x="891.5" y="216.3" font-size="27" fill="#2d2b3f" textLength="269" lengthAdjust="spacingAndGlyphs">Status Trade Account:</text>
<rect x="1182" y="188.5" width="345.5" height="1" fill="#6e6e7a"/>
<rect x="1182" y="188.5" width="1" height="36" fill="#6e6e7a"/>
<rect x="1182" y="223.5" width="345.5" height="1" fill="#ececf0"/>
<rect x="1526.5" y="188.5" width="1" height="36" fill="#ececf0"/>
<text x="1185" y="215.8" font-size="27" fill="#2d2b3f">Sim1</text>
<rect x="1493" y="190" width="33.5" height="33" fill="#c8c8d0"/>
<rect x="1493" y="190" width="1" height="33" fill="#ececf0"/>
<rect x="1493" y="190" width="33" height="1" fill="#ececf0"/>
<rect x="1525.5" y="190" width="1" height="33" fill="#6e6e7a"/>
<rect x="1493" y="222" width="33" height="1" fill="#6e6e7a"/>
<polygon points="1501,203 1518,203 1509.5,211.5" fill="#2d2b3f"/>
<text x="869" y="254.3" font-size="27" fill="#2d2b3f">Lock Trading</text>
<rect x="883" y="277.5" width="21" height="21" fill="#c8c8d0"/>
<rect x="883" y="277.5" width="21" height="1.5" fill="#6e6e7a"/>
<rect x="883" y="277.5" width="1.5" height="21" fill="#6e6e7a"/>
<rect x="883" y="297" width="21" height="1.5" fill="#f0f0f4"/>
<rect x="902.5" y="277.5" width="1.5" height="21" fill="#f0f0f4"/>
<polyline points="888,287 892,291.5 899.5,283" fill="none" stroke="#2d2b3f" stroke-width="3.6"/>
<text x="915.5" y="297.3" font-size="27" fill="#2d2b3f" textLength="360.3" lengthAdjust="spacingAndGlyphs">Lock After Positions Flattened</text>
<rect x="1319" y="277.5" width="21" height="21" fill="#c8c8d0"/>
<rect x="1319" y="277.5" width="21" height="1.5" fill="#6e6e7a"/>
<rect x="1319" y="277.5" width="1.5" height="21" fill="#6e6e7a"/>
<rect x="1319" y="297" width="21" height="1.5" fill="#f0f0f4"/>
<rect x="1338.5" y="277.5" width="1.5" height="21" fill="#f0f0f4"/>
<polyline points="1324,287 1328,291.5 1335.5,283" fill="none" stroke="#2d2b3f" stroke-width="3.6"/>
<text x="1351.5" y="297.3" font-size="27" fill="#2d2b3f">Lock For Day</text>
<rect x="883" y="320" width="21" height="21" fill="#c8c8d0"/>
<rect x="883" y="320" width="21" height="1.5" fill="#6e6e7a"/>
<rect x="883" y="320" width="1.5" height="21" fill="#6e6e7a"/>
<rect x="883" y="339.5" width="21" height="1.5" fill="#f0f0f4"/>
<rect x="902.5" y="320" width="1.5" height="21" fill="#f0f0f4"/>
<polyline points="888,329.5 892,334 899.5,325.5" fill="none" stroke="#2d2b3f" stroke-width="3.6"/>
<text x="915.5" y="340.3" font-size="27" fill="#2d2b3f" textLength="353.8" lengthAdjust="spacingAndGlyphs">Disable Auto Trading on Lock</text>
<text x="873.5" y="378.8" font-size="27" fill="#2d2b3f">Lock Time In Minutes:</text>
<text x="1250" y="378.8" font-size="27" fill="#2d2b3f">Remaining Lock Time:</text>
<rect x="874" y="397.5" width="317.5" height="1" fill="#6e6e7a"/>
<rect x="874" y="397.5" width="1" height="44" fill="#6e6e7a"/>
<rect x="874" y="440.5" width="317.5" height="1" fill="#ececf0"/>
<rect x="1190.5" y="397.5" width="1" height="44" fill="#ececf0"/>
<text x="877" y="424.8" font-size="27" fill="#8a8a96">30</text>
<text x="1250" y="422.3" font-size="27" fill="#2d2b3f">4h 11m 37s. Account:</text>
<text x="864" y="503.3" font-size="27" fill="#2d2b3f">Daily Net Loss Management</text>
<rect x="871.5" y="529" width="21" height="21" fill="#c8c8d0"/>
<rect x="871.5" y="529" width="21" height="1.5" fill="#6e6e7a"/>
<rect x="871.5" y="529" width="1.5" height="21" fill="#6e6e7a"/>
<rect x="871.5" y="548.5" width="21" height="1.5" fill="#f0f0f4"/>
<rect x="891" y="529" width="1.5" height="21" fill="#f0f0f4"/>
<text x="904" y="548.8" font-size="27" fill="#2d2b3f">Flatten Positions When Loss Rules Met</text>
<text x="878.6" y="607.8" font-size="27" fill="#2d2b3f" textLength="233" lengthAdjust="spacingAndGlyphs">Loss Trigger Value:</text>
<rect x="1122" y="575.5" width="298" height="1" fill="#6e6e7a"/>
<rect x="1122" y="575.5" width="1" height="44" fill="#6e6e7a"/>
<rect x="1122" y="618.5" width="298" height="1" fill="#ececf0"/>
<rect x="1419" y="575.5" width="1" height="44" fill="#ececf0"/>
<text x="1124.5" y="603.3" font-size="27" fill="#2d2b3f">-300.00</text>
<text x="891" y="670.3" font-size="27" fill="#2d2b3f" textLength="157.3" lengthAdjust="spacingAndGlyphs">Trigger Date:</text>
<rect x="1070" y="641.5" width="278" height="1" fill="#6e6e7a"/>
<rect x="1070" y="641.5" width="1" height="44" fill="#6e6e7a"/>
<rect x="1070" y="684.5" width="278" height="1" fill="#ececf0"/>
<rect x="1347" y="641.5" width="1" height="44" fill="#ececf0"/>
<rect x="1366" y="637" width="159" height="1" fill="#e6e6ea"/>
<rect x="1366" y="637" width="1" height="52.5" fill="#e6e6ea"/>
<rect x="1366" y="688.5" width="159" height="1" fill="#6e6e7a"/>
<rect x="1524" y="637" width="1" height="52.5" fill="#6e6e7a"/>
<text x="1445.5" y="672.97" font-size="27" fill="#2d2b3f" text-anchor="middle">Reset</text>
<text x="869" y="727.8" font-size="27" fill="#2d2b3f">Status:</text>
<text x="868" y="766.8" font-size="27" fill="#2d2b3f">Loss management is disabled. Account: Sim1</text>
<rect x="1515" y="742" width="33" height="22" fill="#cacad2"/>
<polygon points="1526,760 1538,760 1532,753" fill="#8a8a96"/></g>
<g id="window-tal"><g filter="url(#shadow2)">
<rect x="630" y="760" width="2172" height="1048" rx="15" fill="#c0c1c5"/>
</g>
<g clip-path="url(#talclip)">
<path d="M630,820 V775 a15,15 0 0 1 15,-15 H2787 a15,15 0 0 1 15,15 V820 Z" fill="url(#ttg)"/>
<g>
<ellipse cx="660.9" cy="803.24" rx="10.15" ry="2.26" fill="#000" opacity="0.13"/>
<clipPath id="gcb"><circle cx="660.3" cy="789.7" r="14.1"/></clipPath>
<circle cx="660.3" cy="789.7" r="14.1" fill="url(#glb)"/>
<g clip-path="url(#gcb)" fill="url(#gdb)">
<polygon points="659.24,778.79 660.83,778.26 662.96,777.99 663.23,775.07 668.81,774.54 675.73,778.26 675.73,787.31 672.27,787.31 671.47,789.43 669.88,788.9 668.81,787.31 666.68,786.24 666.15,784.65 664.56,784.11 663.49,785.18 660.83,785.18 659.24,786.24 657.11,787.31 654.71,787.31 655.51,785.18 657.11,784.11 658.17,781.98 657.11,780.92 658.7,780.12"/>
<polygon points="654.71,788.9 658.17,788.64 661.36,789.97 663.49,788.9 665.89,788.64 666.15,787.31 668.81,787.31 671.47,789.43 672.01,793.16 670.94,794.22 669.88,795.82 669.08,798.48 667.75,800.87 666.15,802.47 663.49,803.27 661.36,803 660.83,800.87 659.24,799.01 657.11,798.21 653.92,797.95 652.32,796.35 651.52,794.22 652.05,792.09 653.38,790.23"/>
<polygon points="650.19,780.92 652.05,779.06 653.92,777.2 657.11,776.13 657.91,776.93 655.51,778.79 653.65,780.12 651.79,781.45 648.33,782.78 648.86,781.45"/>
</g>
<g clip-path="url(#gcb)">
<polygon points="672.27,787.31 674.4,787.31 674.93,790.5 672.8,794.22 670.41,798.48 668.81,799.54 669.35,796.88 670.41,794.22 672.01,793.16 673.6,791.03 674.13,788.9 672.54,788.9 671.47,789.43" fill="#2a7ad0"/>
<polygon points="664.02,784.65 666.15,784.38 666.42,785.18 664.82,785.44" fill="#4aa8e8"/>
<polygon points="666.82,790.37 667.75,790.63 670.54,793.69 669.88,794.09 668.15,792.36" fill="#2e6cc0"/>
<polygon points="669.88,787.84 670.68,787.57 671.21,788.9 670.41,789.17" fill="#4aa8e8"/>
</g>
<circle cx="660.3" cy="789.7" r="14.1" fill="url(#ghb)"/>
</g>
<text x="687.5" y="804" font-size="34" fill="#111" textLength="1132.5" lengthAdjust="spacingAndGlyphs">TAL | QC: 0 | All Activity | Sim | All Symbols | Sim1 | F:2025-02-13  00:00:00 | T:End</text>
<circle cx="2556" cy="789" r="12.5" fill="#40465a" stroke="#2a2e3c" stroke-width="1"/>
<rect x="2549.75" y="787.5" width="12.5" height="3" fill="#1c1f2a" rx="1.5"/>
<circle cx="2654" cy="789" r="12.5" fill="#40465a" stroke="#2a2e3c" stroke-width="1"/>
<rect x="2648.38" y="783.38" width="11.25" height="11.25" fill="none" stroke="#1c1f2a" stroke-width="2" rx="1.5"/>
<circle cx="2753" cy="789" r="12.5" fill="#f58220" stroke="#8a4a10" stroke-width="1"/>
<line x1="2747" y1="783" x2="2759" y2="795" stroke="#1a1208" stroke-width="2" stroke-linecap="round"/>
<line x1="2747" y1="795" x2="2759" y2="783" stroke="#1a1208" stroke-width="2" stroke-linecap="round"/>
<rect x="630" y="820" width="2172" height="38" fill="url(#menug)"/>
<rect x="630" y="857" width="2172" height="1" fill="#8e8f96"/>
<rect x="630" y="858" width="2172" height="2" fill="#d0d1d8"/>
<rect x="630" y="860" width="2172" height="2" fill="#9a9ba6"/>
<text x="646" y="849" font-size="25" fill="#42454f" textLength="176" lengthAdjust="spacingAndGlyphs">[DisplaySettings]</text>
<text x="850.5" y="849" font-size="25" fill="#42454f" textLength="36.5" lengthAdjust="spacingAndGlyphs">File</text>
<text x="915.5" y="849" font-size="25" fill="#42454f" textLength="40" lengthAdjust="spacingAndGlyphs">Edit</text>
<text x="983.5" y="849" font-size="25" fill="#42454f" textLength="86.5" lengthAdjust="spacingAndGlyphs">Window</text>
<text x="1098.5" y="849" font-size="25" fill="#42454f" textLength="60" lengthAdjust="spacingAndGlyphs">Quick</text>
<text x="1188" y="849" font-size="25" fill="#42454f" textLength="165" lengthAdjust="spacingAndGlyphs">[*Trade Activity]</text>
<text x="1382.5" y="849" font-size="25" fill="#42454f" textLength="103.5" lengthAdjust="spacingAndGlyphs">[Statistics]</text>
<text x="1516.5" y="849" font-size="25" fill="#42454f" textLength="80" lengthAdjust="spacingAndGlyphs">[Trades]</text>
<text x="1626" y="849" font-size="25" fill="#42454f" textLength="136.5" lengthAdjust="spacingAndGlyphs">[Period Stats]</text>
<text x="1791.5" y="849" font-size="25" fill="#42454f" textLength="127" lengthAdjust="spacingAndGlyphs">[Chart Stats]</text>
<text x="1949" y="849" font-size="25" fill="#42454f" textLength="149" lengthAdjust="spacingAndGlyphs">[AccountStats]</text>
<rect x="633" y="862" width="2132" height="47" fill="url(#hdg)"/>
<svg x="633" y="862" width="120" height="47" viewBox="633 862 120 47" overflow="hidden">
<text x="617" y="896" font-size="27.5" fill="#111" textLength="154.05" lengthAdjust="spacingAndGlyphs">ActivityType</text>
</svg>
<text x="808.5" y="896" font-size="27.5" fill="#111" textLength="111.5" lengthAdjust="spacingAndGlyphs">DateTime</text>
<text x="1032" y="896" font-size="27.5" fill="#111" textLength="173.5" lengthAdjust="spacingAndGlyphs">TransDateTime</text>
<text x="1366.5" y="896" font-size="27.5" fill="#111" textLength="86.5" lengthAdjust="spacingAndGlyphs">Symbol</text>
<text x="2108" y="896" font-size="27.5" fill="#111" textLength="223.5" lengthAdjust="spacingAndGlyphs">OrderActionSource</text>
<rect x="753" y="863" width="1" height="46" fill="#b4b4b4"/>
<rect x="975" y="863" width="1" height="46" fill="#b4b4b4"/>
<rect x="1263" y="863" width="1" height="46" fill="#b4b4b4"/>
<rect x="1557" y="863" width="1" height="46" fill="#b4b4b4"/>
<rect x="633" y="908.6" width="2132" height="862.47" fill="#464646"/>
<text x="636" y="939.6" font-size="27" fill="#ffffff" textLength="77.98" lengthAdjust="spacingAndGlyphs">Orders</text>
<svg x="753" y="908.6" width="222" height="41.07" viewBox="753 908.6 222 41.07" overflow="hidden">
<text x="756.5" y="939.6" font-size="27" fill="#ffffff" textLength="140.4" lengthAdjust="spacingAndGlyphs">2025-04-10</text>
<text x="914" y="939.6" font-size="27" fill="#ffffff" textLength="96.17" lengthAdjust="spacingAndGlyphs">14:30:02</text>
</svg>
<svg x="975" y="908.6" width="288" height="41.07" viewBox="975 908.6 288 41.07" overflow="hidden">
<text x="978.5" y="939.6" font-size="27" fill="#ffffff" textLength="140.4" lengthAdjust="spacingAndGlyphs">2025-04-10</text>
<text x="1136" y="939.6" font-size="27" fill="#ffffff" textLength="144.25" lengthAdjust="spacingAndGlyphs">14:30:02.696</text>
</svg>
<svg x="1263" y="908.6" width="294" height="41.07" viewBox="1263 908.6 294 41.07" overflow="hidden">
<text x="1267" y="939.6" font-size="27" fill="#ffffff" textLength="300.36" lengthAdjust="spacingAndGlyphs">[Sim]MNQM25_FUT_CME</text>
</svg>
<svg x="1557" y="908.6" width="1208" height="41.07" viewBox="1557 908.6 1208 41.07" overflow="hidden">
<text x="1561" y="939.6" font-size="27" fill="#ffffff" textLength="351.8" lengthAdjust="spacingAndGlyphs">Auto-sent child from parent fill</text>
</svg>
<text x="636" y="980.67" font-size="27" fill="#ffffff" textLength="77.98" lengthAdjust="spacingAndGlyphs">Orders</text>
<svg x="753" y="949.67" width="222" height="41.07" viewBox="753 949.67 222 41.07" overflow="hidden">
<text x="756.5" y="980.67" font-size="27" fill="#ffffff" textLength="140.4" lengthAdjust="spacingAndGlyphs">2025-04-10</text>
<text x="914" y="980.67" font-size="27" fill="#ffffff" textLength="96.17" lengthAdjust="spacingAndGlyphs">14:30:02</text>
</svg>
<svg x="975" y="949.67" width="288" height="41.07" viewBox="975 949.67 288 41.07" overflow="hidden">
<text x="978.5" y="980.67" font-size="27" fill="#ffffff" textLength="140.4" lengthAdjust="spacingAndGlyphs">2025-04-10</text>
<text x="1136" y="980.67" font-size="27" fill="#ffffff" textLength="144.25" lengthAdjust="spacingAndGlyphs">14:30:02.696</text>
</svg>
<svg x="1263" y="949.67" width="294" height="41.07" viewBox="1263 949.67 294 41.07" overflow="hidden">
<text x="1267" y="980.67" font-size="27" fill="#ffffff" textLength="300.36" lengthAdjust="spacingAndGlyphs">[Sim]MNQM25_FUT_CME</text>
</svg>
<svg x="1557" y="949.67" width="1208" height="41.07" viewBox="1557 949.67 1208 41.07" overflow="hidden">
<text x="1561" y="980.67" font-size="27" fill="#ffffff" textLength="351.8" lengthAdjust="spacingAndGlyphs">Auto-sent child from parent fill</text>
</svg>
<text x="636" y="1021.74" font-size="27" fill="#ffffff" textLength="77.98" lengthAdjust="spacingAndGlyphs">Orders</text>
<svg x="753" y="990.74" width="222" height="41.07" viewBox="753 990.74 222 41.07" overflow="hidden">
<text x="756.5" y="1021.74" font-size="27" fill="#ffffff" textLength="140.4" lengthAdjust="spacingAndGlyphs">2025-04-10</text>
<text x="914" y="1021.74" font-size="27" fill="#ffffff" textLength="96.17" lengthAdjust="spacingAndGlyphs">14:30:02</text>
</svg>
<svg x="975" y="990.74" width="288" height="41.07" viewBox="975 990.74 288 41.07" overflow="hidden">
<text x="978.5" y="1021.74" font-size="27" fill="#ffffff" textLength="140.4" lengthAdjust="spacingAndGlyphs">2025-04-10</text>
<text x="1136" y="1021.74" font-size="27" fill="#ffffff" textLength="144.25" lengthAdjust="spacingAndGlyphs">14:30:02.696</text>
</svg>
<svg x="1263" y="990.74" width="294" height="41.07" viewBox="1263 990.74 294 41.07" overflow="hidden">
<text x="1267" y="1021.74" font-size="27" fill="#ffffff" textLength="300.36" lengthAdjust="spacingAndGlyphs">[Sim]MNQM25_FUT_CME</text>
</svg>
<svg x="1557" y="990.74" width="1208" height="41.07" viewBox="1557 990.74 1208 41.07" overflow="hidden">
<text x="1561" y="1021.74" font-size="27" fill="#ffffff" textLength="303.07" lengthAdjust="spacingAndGlyphs">Simulated order accepted</text>
</svg>
<text x="636" y="1062.81" font-size="27" fill="#ffffff" textLength="77.98" lengthAdjust="spacingAndGlyphs">Orders</text>
<svg x="753" y="1031.81" width="222" height="41.07" viewBox="753 1031.81 222 41.07" overflow="hidden">
<text x="756.5" y="1062.81" font-size="27" fill="#ffffff" textLength="140.4" lengthAdjust="spacingAndGlyphs">2025-04-10</text>
<text x="914" y="1062.81" font-size="27" fill="#ffffff" textLength="96.17" lengthAdjust="spacingAndGlyphs">14:30:02</text>
</svg>
<svg x="975" y="1031.81" width="288" height="41.07" viewBox="975 1031.81 288 41.07" overflow="hidden">
<text x="978.5" y="1062.81" font-size="27" fill="#ffffff" textLength="140.4" lengthAdjust="spacingAndGlyphs">2025-04-10</text>
<text x="1136" y="1062.81" font-size="27" fill="#ffffff" textLength="144.25" lengthAdjust="spacingAndGlyphs">14:30:02.696</text>
</svg>
<svg x="1263" y="1031.81" width="294" height="41.07" viewBox="1263 1031.81 294 41.07" overflow="hidden">
<text x="1267" y="1062.81" font-size="27" fill="#ffffff" textLength="300.36" lengthAdjust="spacingAndGlyphs">[Sim]MNQM25_FUT_CME</text>
</svg>
<svg x="1557" y="1031.81" width="1208" height="41.07" viewBox="1557 1031.81 1208 41.07" overflow="hidden">
<text x="1561" y="1062.81" font-size="27" fill="#ffffff" textLength="303.07" lengthAdjust="spacingAndGlyphs">Simulated order accepted</text>
</svg>
<text x="636" y="1103.88" font-size="27" fill="#ffffff" textLength="77.98" lengthAdjust="spacingAndGlyphs">Orders</text>
<svg x="753" y="1072.88" width="222" height="41.07" viewBox="753 1072.88 222 41.07" overflow="hidden">
<text x="756.5" y="1103.88" font-size="27" fill="#ffffff" textLength="140.4" lengthAdjust="spacingAndGlyphs">2025-04-10</text>
<text x="914" y="1103.88" font-size="27" fill="#ffffff" textLength="96.17" lengthAdjust="spacingAndGlyphs">14:30:07</text>
</svg>
<svg x="975" y="1072.88" width="288" height="41.07" viewBox="975 1072.88 288 41.07" overflow="hidden">
<text x="978.5" y="1103.88" font-size="27" fill="#ffffff" textLength="140.4" lengthAdjust="spacingAndGlyphs">2025-04-10</text>
<text x="1136" y="1103.88" font-size="27" fill="#ffffff" textLength="144.25" lengthAdjust="spacingAndGlyphs">14:30:07.500</text>
</svg>
<svg x="1263" y="1072.88" width="294" height="41.07" viewBox="1263 1072.88 294 41.07" overflow="hidden">
<text x="1267" y="1103.88" font-size="27" fill="#ffffff" textLength="300.36" lengthAdjust="spacingAndGlyphs">[Sim]MNQM25_FUT_CME</text>
</svg>
<svg x="1557" y="1072.88" width="1208" height="41.07" viewBox="1557 1072.88 1208 41.07" overflow="hidden">
<text x="1561" y="1103.88" font-size="27" fill="#ffffff" textLength="1233.62" lengthAdjust="spacingAndGlyphs">Auto trail order modification. 1. Trigger price: 18676.00. Using LastModifyQuantity of 3. Using new price</text>
</svg>
<text x="636" y="1144.95" font-size="27" fill="#ffffff" textLength="77.98" lengthAdjust="spacingAndGlyphs">Orders</text>
<svg x="753" y="1113.95" width="222" height="41.07" viewBox="753 1113.95 222 41.07" overflow="hidden">
<text x="756.5" y="1144.95" font-size="27" fill="#ffffff" textLength="140.4" lengthAdjust="spacingAndGlyphs">2025-04-10</text>
<text x="914" y="1144.95" font-size="27" fill="#ffffff" textLength="96.17" lengthAdjust="spacingAndGlyphs">14:30:07</text>
</svg>
<svg x="975" y="1113.95" width="288" height="41.07" viewBox="975 1113.95 288 41.07" overflow="hidden">
<text x="978.5" y="1144.95" font-size="27" fill="#ffffff" textLength="140.4" lengthAdjust="spacingAndGlyphs">2025-04-10</text>
<text x="1136" y="1144.95" font-size="27" fill="#ffffff" textLength="144.25" lengthAdjust="spacingAndGlyphs">14:30:07.500</text>
</svg>
<svg x="1263" y="1113.95" width="294" height="41.07" viewBox="1263 1113.95 294 41.07" overflow="hidden">
<text x="1267" y="1144.95" font-size="27" fill="#ffffff" textLength="300.36" lengthAdjust="spacingAndGlyphs">[Sim]MNQM25_FUT_CME</text>
</svg>
<svg x="1557" y="1113.95" width="1208" height="41.07" viewBox="1557 1113.95 1208 41.07" overflow="hidden">
<text x="1561" y="1144.95" font-size="27" fill="#ffffff" textLength="397.44" lengthAdjust="spacingAndGlyphs">Simulated order modify complete</text>
</svg>
<text x="636" y="1186.02" font-size="27" fill="#ffffff" textLength="77.98" lengthAdjust="spacingAndGlyphs">Orders</text>
<svg x="753" y="1155.02" width="222" height="41.07" viewBox="753 1155.02 222 41.07" overflow="hidden">
<text x="756.5" y="1186.02" font-size="27" fill="#ffffff" textLength="140.4" lengthAdjust="spacingAndGlyphs">2025-04-10</text>
<text x="914" y="1186.02" font-size="27" fill="#ffffff" textLength="96.17" lengthAdjust="spacingAndGlyphs">14:30:07</text>
</svg>
<svg x="975" y="1155.02" width="288" height="41.07" viewBox="975 1155.02 288 41.07" overflow="hidden">
<text x="978.5" y="1186.02" font-size="27" fill="#ffffff" textLength="140.4" lengthAdjust="spacingAndGlyphs">2025-04-10</text>
<text x="1136" y="1186.02" font-size="27" fill="#ffffff" textLength="144.25" lengthAdjust="spacingAndGlyphs">14:30:07.850</text>
</svg>
<svg x="1263" y="1155.02" width="294" height="41.07" viewBox="1263 1155.02 294 41.07" overflow="hidden">
<text x="1267" y="1186.02" font-size="27" fill="#ffffff" textLength="300.36" lengthAdjust="spacingAndGlyphs">[Sim]MNQM25_FUT_CME</text>
</svg>
<svg x="1557" y="1155.02" width="1208" height="41.07" viewBox="1557 1155.02 1208 41.07" overflow="hidden">
<text x="1561" y="1186.02" font-size="27" fill="#ffffff" textLength="1205.35" lengthAdjust="spacingAndGlyphs">Replay 1.00X: NQM25_FUT_CME/MNQM25_FUT_CME [CBV][M]  15 Sec  #1 | User order modification. Pr</text>
</svg>
<text x="636" y="1227.09" font-size="27" fill="#ffffff" textLength="77.98" lengthAdjust="spacingAndGlyphs">Orders</text>
<svg x="753" y="1196.09" width="222" height="41.07" viewBox="753 1196.09 222 41.07" overflow="hidden">
<text x="756.5" y="1227.09" font-size="27" fill="#ffffff" textLength="140.4" lengthAdjust="spacingAndGlyphs">2025-04-10</text>
<text x="914" y="1227.09" font-size="27" fill="#ffffff" textLength="96.17" lengthAdjust="spacingAndGlyphs">14:30:07</text>
</svg>
<svg x="975" y="1196.09" width="288" height="41.07" viewBox="975 1196.09 288 41.07" overflow="hidden">
<text x="978.5" y="1227.09" font-size="27" fill="#ffffff" textLength="140.4" lengthAdjust="spacingAndGlyphs">2025-04-10</text>
<text x="1136" y="1227.09" font-size="27" fill="#ffffff" textLength="144.25" lengthAdjust="spacingAndGlyphs">14:30:07.850</text>
</svg>
<svg x="1263" y="1196.09" width="294" height="41.07" viewBox="1263 1196.09 294 41.07" overflow="hidden">
<text x="1267" y="1227.09" font-size="27" fill="#ffffff" textLength="300.36" lengthAdjust="spacingAndGlyphs">[Sim]MNQM25_FUT_CME</text>
</svg>
<svg x="1557" y="1196.09" width="1208" height="41.07" viewBox="1557 1196.09 1208 41.07" overflow="hidden">
<text x="1561" y="1227.09" font-size="27" fill="#ffffff" textLength="397.44" lengthAdjust="spacingAndGlyphs">Simulated order modify complete</text>
</svg>
<text x="636" y="1268.16" font-size="27" fill="#ffffff" textLength="77.98" lengthAdjust="spacingAndGlyphs">Orders</text>
<svg x="753" y="1237.16" width="222" height="41.07" viewBox="753 1237.16 222 41.07" overflow="hidden">
<text x="756.5" y="1268.16" font-size="27" fill="#ffffff" textLength="140.4" lengthAdjust="spacingAndGlyphs">2025-04-10</text>
<text x="914" y="1268.16" font-size="27" fill="#ffffff" textLength="96.17" lengthAdjust="spacingAndGlyphs">14:30:09</text>
</svg>
<svg x="975" y="1237.16" width="288" height="41.07" viewBox="975 1237.16 288 41.07" overflow="hidden">
<text x="978.5" y="1268.16" font-size="27" fill="#ffffff" textLength="140.4" lengthAdjust="spacingAndGlyphs">2025-04-10</text>
<text x="1136" y="1268.16" font-size="27" fill="#ffffff" textLength="144.25" lengthAdjust="spacingAndGlyphs">14:30:09.350</text>
</svg>
<svg x="1263" y="1237.16" width="294" height="41.07" viewBox="1263 1237.16 294 41.07" overflow="hidden">
<text x="1267" y="1268.16" font-size="27" fill="#ffffff" textLength="300.36" lengthAdjust="spacingAndGlyphs">[Sim]MNQM25_FUT_CME</text>
</svg>
<svg x="1557" y="1237.16" width="1208" height="41.07" viewBox="1557 1237.16 1208 41.07" overflow="hidden">
<text x="1561" y="1268.16" font-size="27" fill="#ffffff" textLength="1346.1" lengthAdjust="spacingAndGlyphs">Initiating: Canceling orders for Flatten Position operation Global Flatten all Positions. Daily Net Profit Management</text>
</svg>
<text x="636" y="1309.23" font-size="27" fill="#ffffff" textLength="77.98" lengthAdjust="spacingAndGlyphs">Orders</text>
<svg x="753" y="1278.23" width="222" height="41.07" viewBox="753 1278.23 222 41.07" overflow="hidden">
<text x="756.5" y="1309.23" font-size="27" fill="#ffffff" textLength="140.4" lengthAdjust="spacingAndGlyphs">2025-04-10</text>
<text x="914" y="1309.23" font-size="27" fill="#ffffff" textLength="96.17" lengthAdjust="spacingAndGlyphs">14:30:09</text>
</svg>
<svg x="975" y="1278.23" width="288" height="41.07" viewBox="975 1278.23 288 41.07" overflow="hidden">
<text x="978.5" y="1309.23" font-size="27" fill="#ffffff" textLength="140.4" lengthAdjust="spacingAndGlyphs">2025-04-10</text>
<text x="1136" y="1309.23" font-size="27" fill="#ffffff" textLength="144.25" lengthAdjust="spacingAndGlyphs">14:30:09.350</text>
</svg>
<svg x="1263" y="1278.23" width="294" height="41.07" viewBox="1263 1278.23 294 41.07" overflow="hidden">
<text x="1267" y="1309.23" font-size="27" fill="#ffffff" textLength="300.36" lengthAdjust="spacingAndGlyphs">[Sim]MNQM25_FUT_CME</text>
</svg>
<svg x="1557" y="1278.23" width="1208" height="41.07" viewBox="1557 1278.23 1208 41.07" overflow="hidden">
<text x="1561" y="1309.23" font-size="27" fill="#ffffff" textLength="1231.69" lengthAdjust="spacingAndGlyphs">Canceling orders for Flatten Position operation Global Flatten all Positions. Daily Net Profit Management</text>
</svg>
<text x="636" y="1350.3" font-size="27" fill="#ffffff" textLength="77.98" lengthAdjust="spacingAndGlyphs">Orders</text>
<svg x="753" y="1319.3" width="222" height="41.07" viewBox="753 1319.3 222 41.07" overflow="hidden">
<text x="756.5" y="1350.3" font-size="27" fill="#ffffff" textLength="140.4" lengthAdjust="spacingAndGlyphs">2025-04-10</text>
<text x="914" y="1350.3" font-size="27" fill="#ffffff" textLength="96.17" lengthAdjust="spacingAndGlyphs">14:30:09</text>
</svg>
<svg x="975" y="1319.3" width="288" height="41.07" viewBox="975 1319.3 288 41.07" overflow="hidden">
<text x="978.5" y="1350.3" font-size="27" fill="#ffffff" textLength="140.4" lengthAdjust="spacingAndGlyphs">2025-04-10</text>
<text x="1136" y="1350.3" font-size="27" fill="#ffffff" textLength="144.25" lengthAdjust="spacingAndGlyphs">14:30:09.350</text>
</svg>
<svg x="1263" y="1319.3" width="294" height="41.07" viewBox="1263 1319.3 294 41.07" overflow="hidden">
<text x="1267" y="1350.3" font-size="27" fill="#ffffff" textLength="300.36" lengthAdjust="spacingAndGlyphs">[Sim]MNQM25_FUT_CME</text>
</svg>
<svg x="1557" y="1319.3" width="1208" height="41.07" viewBox="1557 1319.3 1208 41.07" overflow="hidden">
<text x="1561" y="1350.3" font-size="27" fill="#ffffff" textLength="301.59" lengthAdjust="spacingAndGlyphs">Simulated order canceled</text>
</svg>
<text x="636" y="1391.37" font-size="27" fill="#ffffff" textLength="77.98" lengthAdjust="spacingAndGlyphs">Orders</text>
<svg x="753" y="1360.37" width="222" height="41.07" viewBox="753 1360.37 222 41.07" overflow="hidden">
<text x="756.5" y="1391.37" font-size="27" fill="#ffffff" textLength="140.4" lengthAdjust="spacingAndGlyphs">2025-04-10</text>
<text x="914" y="1391.37" font-size="27" fill="#ffffff" textLength="96.17" lengthAdjust="spacingAndGlyphs">14:30:09</text>
</svg>
<svg x="975" y="1360.37" width="288" height="41.07" viewBox="975 1360.37 288 41.07" overflow="hidden">
<text x="978.5" y="1391.37" font-size="27" fill="#ffffff" textLength="140.4" lengthAdjust="spacingAndGlyphs">2025-04-10</text>
<text x="1136" y="1391.37" font-size="27" fill="#ffffff" textLength="144.25" lengthAdjust="spacingAndGlyphs">14:30:09.350</text>
</svg>
<svg x="1263" y="1360.37" width="294" height="41.07" viewBox="1263 1360.37 294 41.07" overflow="hidden">
<text x="1267" y="1391.37" font-size="27" fill="#ffffff" textLength="300.36" lengthAdjust="spacingAndGlyphs">[Sim]MNQM25_FUT_CME</text>
</svg>
<svg x="1557" y="1360.37" width="1208" height="41.07" viewBox="1557 1360.37 1208 41.07" overflow="hidden">
<text x="1561" y="1391.37" font-size="27" fill="#ffffff" textLength="1231.69" lengthAdjust="spacingAndGlyphs">Canceling orders for Flatten Position operation Global Flatten all Positions. Daily Net Profit Management</text>
</svg>
<text x="636" y="1432.44" font-size="27" fill="#ffffff" textLength="77.98" lengthAdjust="spacingAndGlyphs">Orders</text>
<svg x="753" y="1401.44" width="222" height="41.07" viewBox="753 1401.44 222 41.07" overflow="hidden">
<text x="756.5" y="1432.44" font-size="27" fill="#ffffff" textLength="140.4" lengthAdjust="spacingAndGlyphs">2025-04-10</text>
<text x="914" y="1432.44" font-size="27" fill="#ffffff" textLength="96.17" lengthAdjust="spacingAndGlyphs">14:30:09</text>
</svg>
<svg x="975" y="1401.44" width="288" height="41.07" viewBox="975 1401.44 288 41.07" overflow="hidden">
<text x="978.5" y="1432.44" font-size="27" fill="#ffffff" textLength="140.4" lengthAdjust="spacingAndGlyphs">2025-04-10</text>
<text x="1136" y="1432.44" font-size="27" fill="#ffffff" textLength="144.25" lengthAdjust="spacingAndGlyphs">14:30:09.350</text>
</svg>
<svg x="1263" y="1401.44" width="294" height="41.07" viewBox="1263 1401.44 294 41.07" overflow="hidden">
<text x="1267" y="1432.44" font-size="27" fill="#ffffff" textLength="300.36" lengthAdjust="spacingAndGlyphs">[Sim]MNQM25_FUT_CME</text>
</svg>
<svg x="1557" y="1401.44" width="1208" height="41.07" viewBox="1557 1401.44 1208 41.07" overflow="hidden">
<text x="1561" y="1432.44" font-size="27" fill="#ffffff" textLength="301.59" lengthAdjust="spacingAndGlyphs">Simulated order canceled</text>
</svg>
<text x="636" y="1473.51" font-size="27" fill="#ffffff" textLength="77.98" lengthAdjust="spacingAndGlyphs">Orders</text>
<svg x="753" y="1442.51" width="222" height="41.07" viewBox="753 1442.51 222 41.07" overflow="hidden">
<text x="756.5" y="1473.51" font-size="27" fill="#ffffff" textLength="140.4" lengthAdjust="spacingAndGlyphs">2025-04-10</text>
<text x="914" y="1473.51" font-size="27" fill="#ffffff" textLength="96.17" lengthAdjust="spacingAndGlyphs">19:44:40</text>
</svg>
<svg x="975" y="1442.51" width="288" height="41.07" viewBox="975 1442.51 288 41.07" overflow="hidden">
<text x="978.5" y="1473.51" font-size="27" fill="#ffffff" textLength="140.4" lengthAdjust="spacingAndGlyphs">2025-04-10</text>
<text x="1136" y="1473.51" font-size="27" fill="#ffffff" textLength="144.25" lengthAdjust="spacingAndGlyphs">19:44:40.690</text>
</svg>
<svg x="1263" y="1442.51" width="294" height="41.07" viewBox="1263 1442.51 294 41.07" overflow="hidden">
<text x="1267" y="1473.51" font-size="27" fill="#ffffff" textLength="300.36" lengthAdjust="spacingAndGlyphs">[Sim]MNQM25_FUT_CME</text>
</svg>
<svg x="1557" y="1442.51" width="1208" height="41.07" viewBox="1557 1442.51 1208 41.07" overflow="hidden">
<text x="1561" y="1473.51" font-size="27" fill="#ffffff" textLength="221.41" lengthAdjust="spacingAndGlyphs">Cleared trade data</text>
</svg>
<rect x="633" y="1484" width="2132" height="41" fill="#c2c2c2"/>
<text x="636" y="1514.58" font-size="27" fill="#f6f6f6" textLength="77.98" lengthAdjust="spacingAndGlyphs">Orders</text>
<svg x="753" y="1483.58" width="222" height="41.07" viewBox="753 1483.58 222 41.07" overflow="hidden">
<text x="756.5" y="1514.58" font-size="27" fill="#f6f6f6" textLength="140.4" lengthAdjust="spacingAndGlyphs">2025-04-10</text>
<text x="914" y="1514.58" font-size="27" fill="#f6f6f6" textLength="96.17" lengthAdjust="spacingAndGlyphs">19:46:05</text>
</svg>
<svg x="975" y="1483.58" width="288" height="41.07" viewBox="975 1483.58 288 41.07" overflow="hidden">
<text x="978.5" y="1514.58" font-size="27" fill="#f6f6f6" textLength="140.4" lengthAdjust="spacingAndGlyphs">2025-04-10</text>
<text x="1136" y="1514.58" font-size="27" fill="#f6f6f6" textLength="144.25" lengthAdjust="spacingAndGlyphs">19:46:05.470</text>
</svg>
<svg x="1557" y="1483.58" width="1208" height="41.07" viewBox="1557 1483.58 1208 41.07" overflow="hidden">
<text x="1561" y="1514.58" font-size="27" fill="#f6f6f6" textLength="1274.61" lengthAdjust="spacingAndGlyphs">Profit management: Daily Net P/L = 123.00.  Profit value of 121.00 has been met. Positions will be flattened.</text>
</svg>
<text x="636" y="1555.65" font-size="27" fill="#ffffff" textLength="77.98" lengthAdjust="spacingAndGlyphs">Orders</text>
<svg x="753" y="1524.65" width="222" height="41.07" viewBox="753 1524.65 222 41.07" overflow="hidden">
<text x="756.5" y="1555.65" font-size="27" fill="#ffffff" textLength="140.4" lengthAdjust="spacingAndGlyphs">2025-04-10</text>
<text x="914" y="1555.65" font-size="27" fill="#ffffff" textLength="96.17" lengthAdjust="spacingAndGlyphs">19:46:06</text>
</svg>
<svg x="975" y="1524.65" width="288" height="41.07" viewBox="975 1524.65 288 41.07" overflow="hidden">
<text x="978.5" y="1555.65" font-size="27" fill="#ffffff" textLength="140.4" lengthAdjust="spacingAndGlyphs">2025-04-10</text>
<text x="1136" y="1555.65" font-size="27" fill="#ffffff" textLength="144.25" lengthAdjust="spacingAndGlyphs">19:46:06.470</text>
</svg>
<svg x="1557" y="1524.65" width="1208" height="41.07" viewBox="1557 1524.65 1208 41.07" overflow="hidden">
<text x="1561" y="1555.65" font-size="27" fill="#ffffff" textLength="1298.39" lengthAdjust="spacingAndGlyphs">Profit management: Daily Net P/L = 109.50.  Profit value of 120.00 after initial trigger of 121.00, has been met.</text>
</svg>
<text x="636" y="1596.72" font-size="27" fill="#ffffff" textLength="77.98" lengthAdjust="spacingAndGlyphs">Orders</text>
<svg x="753" y="1565.72" width="222" height="41.07" viewBox="753 1565.72 222 41.07" overflow="hidden">
<text x="756.5" y="1596.72" font-size="27" fill="#ffffff" textLength="140.4" lengthAdjust="spacingAndGlyphs">2025-04-10</text>
<text x="914" y="1596.72" font-size="27" fill="#ffffff" textLength="96.17" lengthAdjust="spacingAndGlyphs">19:46:06</text>
</svg>
<svg x="975" y="1565.72" width="288" height="41.07" viewBox="975 1565.72 288 41.07" overflow="hidden">
<text x="978.5" y="1596.72" font-size="27" fill="#ffffff" textLength="140.4" lengthAdjust="spacingAndGlyphs">2025-04-10</text>
<text x="1136" y="1596.72" font-size="27" fill="#ffffff" textLength="144.25" lengthAdjust="spacingAndGlyphs">19:46:06.470</text>
</svg>
<svg x="1263" y="1565.72" width="294" height="41.07" viewBox="1263 1565.72 294 41.07" overflow="hidden">
<text x="1267" y="1596.72" font-size="27" fill="#ffffff" textLength="300.36" lengthAdjust="spacingAndGlyphs">[Sim]MNQM25_FUT_CME</text>
</svg>
<svg x="1557" y="1565.72" width="1208" height="41.07" viewBox="1557 1565.72 1208 41.07" overflow="hidden">
<text x="1561" y="1596.72" font-size="27" fill="#ffffff" textLength="968.68" lengthAdjust="spacingAndGlyphs">Order to flatten Position. Global Flatten all Positions. Daily Net Profit Management</text>
</svg>
<text x="636" y="1637.79" font-size="27" fill="#ffffff" textLength="77.98" lengthAdjust="spacingAndGlyphs">Orders</text>
<svg x="753" y="1606.79" width="222" height="41.07" viewBox="753 1606.79 222 41.07" overflow="hidden">
<text x="756.5" y="1637.79" font-size="27" fill="#ffffff" textLength="140.4" lengthAdjust="spacingAndGlyphs">2025-04-10</text>
<text x="914" y="1637.79" font-size="27" fill="#ffffff" textLength="96.17" lengthAdjust="spacingAndGlyphs">19:46:06</text>
</svg>
<svg x="975" y="1606.79" width="288" height="41.07" viewBox="975 1606.79 288 41.07" overflow="hidden">
<text x="978.5" y="1637.79" font-size="27" fill="#ffffff" textLength="140.4" lengthAdjust="spacingAndGlyphs">2025-04-10</text>
<text x="1136" y="1637.79" font-size="27" fill="#ffffff" textLength="144.25" lengthAdjust="spacingAndGlyphs">19:46:06.470</text>
</svg>
<svg x="1263" y="1606.79" width="294" height="41.07" viewBox="1263 1606.79 294 41.07" overflow="hidden">
<text x="1267" y="1637.79" font-size="27" fill="#ffffff" textLength="300.36" lengthAdjust="spacingAndGlyphs">[Sim]MNQM25_FUT_CME</text>
</svg>
<svg x="1557" y="1606.79" width="1208" height="41.07" viewBox="1557 1606.79 1208 41.07" overflow="hidden">
<text x="1561" y="1637.79" font-size="27" fill="#ffffff" textLength="303.07" lengthAdjust="spacingAndGlyphs">Simulated order accepted</text>
</svg>
<text x="636" y="1678.86" font-size="27" fill="#ffffff" textLength="77.98" lengthAdjust="spacingAndGlyphs">Orders</text>
<svg x="753" y="1647.86" width="222" height="41.07" viewBox="753 1647.86 222 41.07" overflow="hidden">
<text x="756.5" y="1678.86" font-size="27" fill="#ffffff" textLength="140.4" lengthAdjust="spacingAndGlyphs">2025-04-10</text>
<text x="914" y="1678.86" font-size="27" fill="#ffffff" textLength="96.17" lengthAdjust="spacingAndGlyphs">19:46:06</text>
</svg>
<svg x="975" y="1647.86" width="288" height="41.07" viewBox="975 1647.86 288 41.07" overflow="hidden">
<text x="978.5" y="1678.86" font-size="27" fill="#ffffff" textLength="140.4" lengthAdjust="spacingAndGlyphs">2025-04-10</text>
<text x="1136" y="1678.86" font-size="27" fill="#ffffff" textLength="144.25" lengthAdjust="spacingAndGlyphs">19:46:06.470</text>
</svg>
<svg x="1263" y="1647.86" width="294" height="41.07" viewBox="1263 1647.86 294 41.07" overflow="hidden">
<text x="1267" y="1678.86" font-size="27" fill="#ffffff" textLength="300.36" lengthAdjust="spacingAndGlyphs">[Sim]MNQM25_FUT_CME</text>
</svg>
<svg x="1557" y="1647.86" width="1208" height="41.07" viewBox="1557 1647.86 1208 41.07" overflow="hidden">
<text x="1561" y="1678.86" font-size="27" fill="#ffffff" textLength="756.24" lengthAdjust="spacingAndGlyphs">Trade simulation fill. Bid: 18677.75 Ask: 18679.00 Last: 18679.00</text>
</svg>
<text x="636" y="1719.93" font-size="27" fill="#ffffff" textLength="45.35" lengthAdjust="spacingAndGlyphs">Fills</text>
<svg x="753" y="1688.93" width="222" height="41.07" viewBox="753 1688.93 222 41.07" overflow="hidden">
<text x="756.5" y="1719.93" font-size="27" fill="#ffffff" textLength="140.4" lengthAdjust="spacingAndGlyphs">2025-04-10</text>
<text x="914" y="1719.93" font-size="27" fill="#ffffff" textLength="96.17" lengthAdjust="spacingAndGlyphs">19:46:06</text>
</svg>
<svg x="975" y="1688.93" width="288" height="41.07" viewBox="975 1688.93 288 41.07" overflow="hidden">
<text x="978.5" y="1719.93" font-size="27" fill="#ffffff" textLength="140.4" lengthAdjust="spacingAndGlyphs">2025-04-10</text>
<text x="1136" y="1719.93" font-size="27" fill="#ffffff" textLength="144.25" lengthAdjust="spacingAndGlyphs">19:46:06.470</text>
</svg>
<svg x="1263" y="1688.93" width="294" height="41.07" viewBox="1263 1688.93 294 41.07" overflow="hidden">
<text x="1267" y="1719.93" font-size="27" fill="#ffffff" textLength="300.36" lengthAdjust="spacingAndGlyphs">[Sim]MNQM25_FUT_CME</text>
</svg>
<svg x="1557" y="1688.93" width="1208" height="41.07" viewBox="1557 1688.93 1208 41.07" overflow="hidden">
<text x="1561" y="1719.93" font-size="27" fill="#ffffff" textLength="756.24" lengthAdjust="spacingAndGlyphs">Trade simulation fill. Bid: 18677.75 Ask: 18679.00 Last: 18679.00</text>
</svg>
<text x="636" y="1761" font-size="27" fill="#ffffff" textLength="77.98" lengthAdjust="spacingAndGlyphs">Orders</text>
<svg x="753" y="1730" width="222" height="41.07" viewBox="753 1730 222 41.07" overflow="hidden">
<text x="756.5" y="1761" font-size="27" fill="#ffffff" textLength="140.4" lengthAdjust="spacingAndGlyphs">2025-04-10</text>
<text x="914" y="1761" font-size="27" fill="#ffffff" textLength="96.17" lengthAdjust="spacingAndGlyphs">19:46:06</text>
</svg>
<svg x="975" y="1730" width="288" height="41.07" viewBox="975 1730 288 41.07" overflow="hidden">
<text x="978.5" y="1761" font-size="27" fill="#ffffff" textLength="140.4" lengthAdjust="spacingAndGlyphs">2025-04-10</text>
<text x="1136" y="1761" font-size="27" fill="#ffffff" textLength="144.25" lengthAdjust="spacingAndGlyphs">19:46:06.470</text>
</svg>
<svg x="1557" y="1730" width="1208" height="41.07" viewBox="1557 1730 1208 41.07" overflow="hidden">
<text x="1561" y="1761" font-size="27" fill="#ffffff" textLength="1025.91" lengthAdjust="spacingAndGlyphs">Profit/Loss management: Trading is now locked for 4h 13m 53s for trade account Sim1.</text>
</svg>
<rect x="633" y="949" width="2132" height="1" fill="#8c8c8c"/>
<rect x="633" y="990" width="2132" height="1" fill="#8c8c8c"/>
<rect x="633" y="1031" width="2132" height="1" fill="#8c8c8c"/>
<rect x="633" y="1072" width="2132" height="1" fill="#8c8c8c"/>
<rect x="633" y="1113" width="2132" height="1" fill="#8c8c8c"/>
<rect x="633" y="1154" width="2132" height="1" fill="#8c8c8c"/>
<rect x="633" y="1195" width="2132" height="1" fill="#8c8c8c"/>
<rect x="633" y="1236" width="2132" height="1" fill="#8c8c8c"/>
<rect x="633" y="1277" width="2132" height="1" fill="#8c8c8c"/>
<rect x="633" y="1318" width="2132" height="1" fill="#8c8c8c"/>
<rect x="633" y="1359" width="2132" height="1" fill="#8c8c8c"/>
<rect x="633" y="1400" width="2132" height="1" fill="#8c8c8c"/>
<rect x="633" y="1442" width="2132" height="1" fill="#8c8c8c"/>
<rect x="633" y="1483" width="2132" height="1" fill="#8c8c8c"/>
<rect x="633" y="1524" width="2132" height="1" fill="#8c8c8c"/>
<rect x="633" y="1565" width="2132" height="1" fill="#8c8c8c"/>
<rect x="633" y="1606" width="2132" height="1" fill="#8c8c8c"/>
<rect x="633" y="1647" width="2132" height="1" fill="#8c8c8c"/>
<rect x="633" y="1688" width="2132" height="1" fill="#8c8c8c"/>
<rect x="633" y="1729" width="2132" height="1" fill="#8c8c8c"/>
<rect x="633" y="1770" width="2132" height="1" fill="#8c8c8c"/>
<rect x="753" y="908.6" width="1" height="862.47" fill="#8c8c8c"/>
<rect x="975" y="908.6" width="1" height="862.47" fill="#8c8c8c"/>
<rect x="1263" y="908.6" width="1" height="862.47" fill="#8c8c8c"/>
<rect x="1557" y="908.6" width="1" height="862.47" fill="#8c8c8c"/>
<rect x="2765" y="862" width="36" height="909" fill="#c0c1c5"/>
<rect x="2774" y="1705" width="18.5" height="33" fill="#7a7d9a"/>
<rect x="633" y="1771" width="2168" height="37" fill="#c0c1c5"/>
<rect x="667" y="1780" width="34" height="19" fill="#7a7d9a"/>
<rect x="2791" y="1797" width="3" height="3" fill="#9a9ba6"/>
<rect x="2785" y="1797" width="3" height="3" fill="#9a9ba6"/>
<rect x="2791" y="1791" width="3" height="3" fill="#9a9ba6"/>
<rect x="2779" y="1797" width="3" height="3" fill="#9a9ba6"/>
<rect x="2785" y="1791" width="3" height="3" fill="#9a9ba6"/>
<rect x="2791" y="1785" width="3" height="3" fill="#9a9ba6"/>
</g>
<rect x="630.5" y="760.5" width="2171" height="1047" rx="15" fill="none" stroke="#9a9ba4" stroke-width="1" opacity="0.7"/></g>
<g id="annotations"><rect x="418.75" y="178.25" width="412.5" height="248" fill="none" stroke="#e51c1c" stroke-width="7.5"/>
<rect x="32.75" y="706.75" width="569.5" height="182.5" fill="none" stroke="#e51c1c" stroke-width="7.5"/>
<rect x="1373.75" y="1410.25" width="1395.5" height="377" fill="none" stroke="#e51c1c" stroke-width="7.5"/>
<rect x="343.75" y="1966.75" width="517.5" height="196.5" fill="none" stroke="#e51c1c" stroke-width="7.5"/>
<rect x="1914.75" y="170.25" width="168.5" height="77" fill="none" stroke="#e51c1c" stroke-width="7.5"/></g>
<g id="app-chrome"><rect x="0" y="0" width="3834" height="48" fill="#f3f3f3"/>
<g>
<ellipse cx="18.7" cy="36.94" rx="10.15" ry="2.26" fill="#000" opacity="0.13"/>
<clipPath id="gca"><circle cx="18.1" cy="23.4" r="14.1"/></clipPath>
<circle cx="18.1" cy="23.4" r="14.1" fill="url(#gla)"/>
<g clip-path="url(#gca)" fill="url(#gda)">
<polygon points="17.04,12.49 18.63,11.96 20.76,11.69 21.03,8.77 26.61,8.24 33.53,11.96 33.53,21.01 30.07,21.01 29.27,23.13 27.68,22.6 26.61,21.01 24.48,19.94 23.95,18.35 22.36,17.81 21.29,18.88 18.63,18.88 17.04,19.94 14.91,21.01 12.51,21.01 13.31,18.88 14.91,17.81 15.97,15.68 14.91,14.62 16.5,13.82"/>
<polygon points="12.51,22.6 15.97,22.34 19.16,23.67 21.29,22.6 23.69,22.34 23.95,21.01 26.61,21.01 29.27,23.13 29.81,26.86 28.74,27.92 27.68,29.52 26.88,32.18 25.55,34.57 23.95,36.17 21.29,36.97 19.16,36.7 18.63,34.57 17.04,32.71 14.91,31.91 11.72,31.65 10.12,30.05 9.32,27.92 9.85,25.79 11.18,23.93"/>
<polygon points="7.99,14.62 9.85,12.76 11.72,10.9 14.91,9.83 15.71,10.63 13.31,12.49 11.45,13.82 9.59,15.15 6.13,16.48 6.66,15.15"/>
</g>
<g clip-path="url(#gca)">
<polygon points="30.07,21.01 32.2,21.01 32.73,24.2 30.6,27.92 28.21,32.18 26.61,33.24 27.15,30.58 28.21,27.92 29.81,26.86 31.4,24.73 31.93,22.6 30.34,22.6 29.27,23.13" fill="#2a7ad0"/>
<polygon points="21.82,18.35 23.95,18.08 24.22,18.88 22.62,19.14" fill="#4aa8e8"/>
<polygon points="24.62,24.07 25.55,24.33 28.34,27.39 27.68,27.79 25.95,26.06" fill="#2e6cc0"/>
<polygon points="27.68,21.54 28.48,21.27 29.01,22.6 28.21,22.87" fill="#4aa8e8"/>
</g>
<circle cx="18.1" cy="23.4" r="14.1" fill="url(#gha)"/>
</g>
<text x="45" y="37" font-size="32.5" fill="#8b8b8b" textLength="1484" lengthAdjust="spacingAndGlyphs">Sierra Chart 2751 nq-only-4-25 Teton CME Routing 2025-04-10  19:48:22 Thu [Sim] DF:3004445  ST:17, 17</text>
<circle cx="3593" cy="23" r="12.5" fill="#b4b5bd" stroke="#a8a9b1" stroke-width="1"/>
<rect x="3586.75" y="21.5" width="12.5" height="3" fill="#a0a1a9" rx="1.5"/>
<circle cx="3691" cy="23" r="12.5" fill="#b4b5bd" stroke="#a8a9b1" stroke-width="1"/>
<rect x="3685.38" y="17.38" width="11.25" height="11.25" fill="none" stroke="#a0a1a9" stroke-width="2" rx="1.5"/>
<circle cx="3790" cy="23" r="12.5" fill="#f5b183" stroke="#d89a6e" stroke-width="1"/>
<line x1="3784" y1="17" x2="3796" y2="29" stroke="#d08a5a" stroke-width="2" stroke-linecap="round"/>
<line x1="3784" y1="29" x2="3796" y2="17" stroke="#d08a5a" stroke-width="2" stroke-linecap="round"/>
<rect x="0" y="48" width="3834" height="38" fill="url(#menug)"/>
<rect x="0" y="85" width="3834" height="1" fill="#9a9ba1"/>
<rect x="0" y="86" width="3834" height="3" fill="#c3c4cc"/>
<text x="14" y="76.5" font-size="24" fill="#797d8d" textLength="35.4" lengthAdjust="spacingAndGlyphs">File</text>
<text x="79" y="76.5" font-size="24" fill="#797d8d" textLength="39" lengthAdjust="spacingAndGlyphs">Edit</text>
<text x="147" y="76.5" font-size="24" fill="#797d8d" textLength="57" lengthAdjust="spacingAndGlyphs">Chart</text>
<text x="232" y="76.5" font-size="24" fill="#797d8d" textLength="84" lengthAdjust="spacingAndGlyphs">Analysis</text>
<text x="345" y="76.5" font-size="24" fill="#797d8d" textLength="55" lengthAdjust="spacingAndGlyphs">Tools</text>
<text x="428" y="76.5" font-size="24" fill="#797d8d" textLength="131" lengthAdjust="spacingAndGlyphs">Spreadsheet</text>
<text x="588" y="76.5" font-size="24" fill="#797d8d" textLength="58" lengthAdjust="spacingAndGlyphs">Trade</text>
<text x="674" y="76.5" font-size="24" fill="#797d8d" textLength="161" lengthAdjust="spacingAndGlyphs">Global Settings</text>
<text x="863" y="76.5" font-size="24" fill="#797d8d" textLength="87" lengthAdjust="spacingAndGlyphs">Window</text>
<text x="978" y="76.5" font-size="24" fill="#797d8d" textLength="28.5" lengthAdjust="spacingAndGlyphs">CB</text>
<text x="1035" y="76.5" font-size="24" fill="#797d8d" textLength="37" lengthAdjust="spacingAndGlyphs">CW</text>
<text x="1100" y="76.5" font-size="24" fill="#797d8d" textLength="49.5" lengthAdjust="spacingAndGlyphs">Help</text></g>
</svg>
</body></html>
